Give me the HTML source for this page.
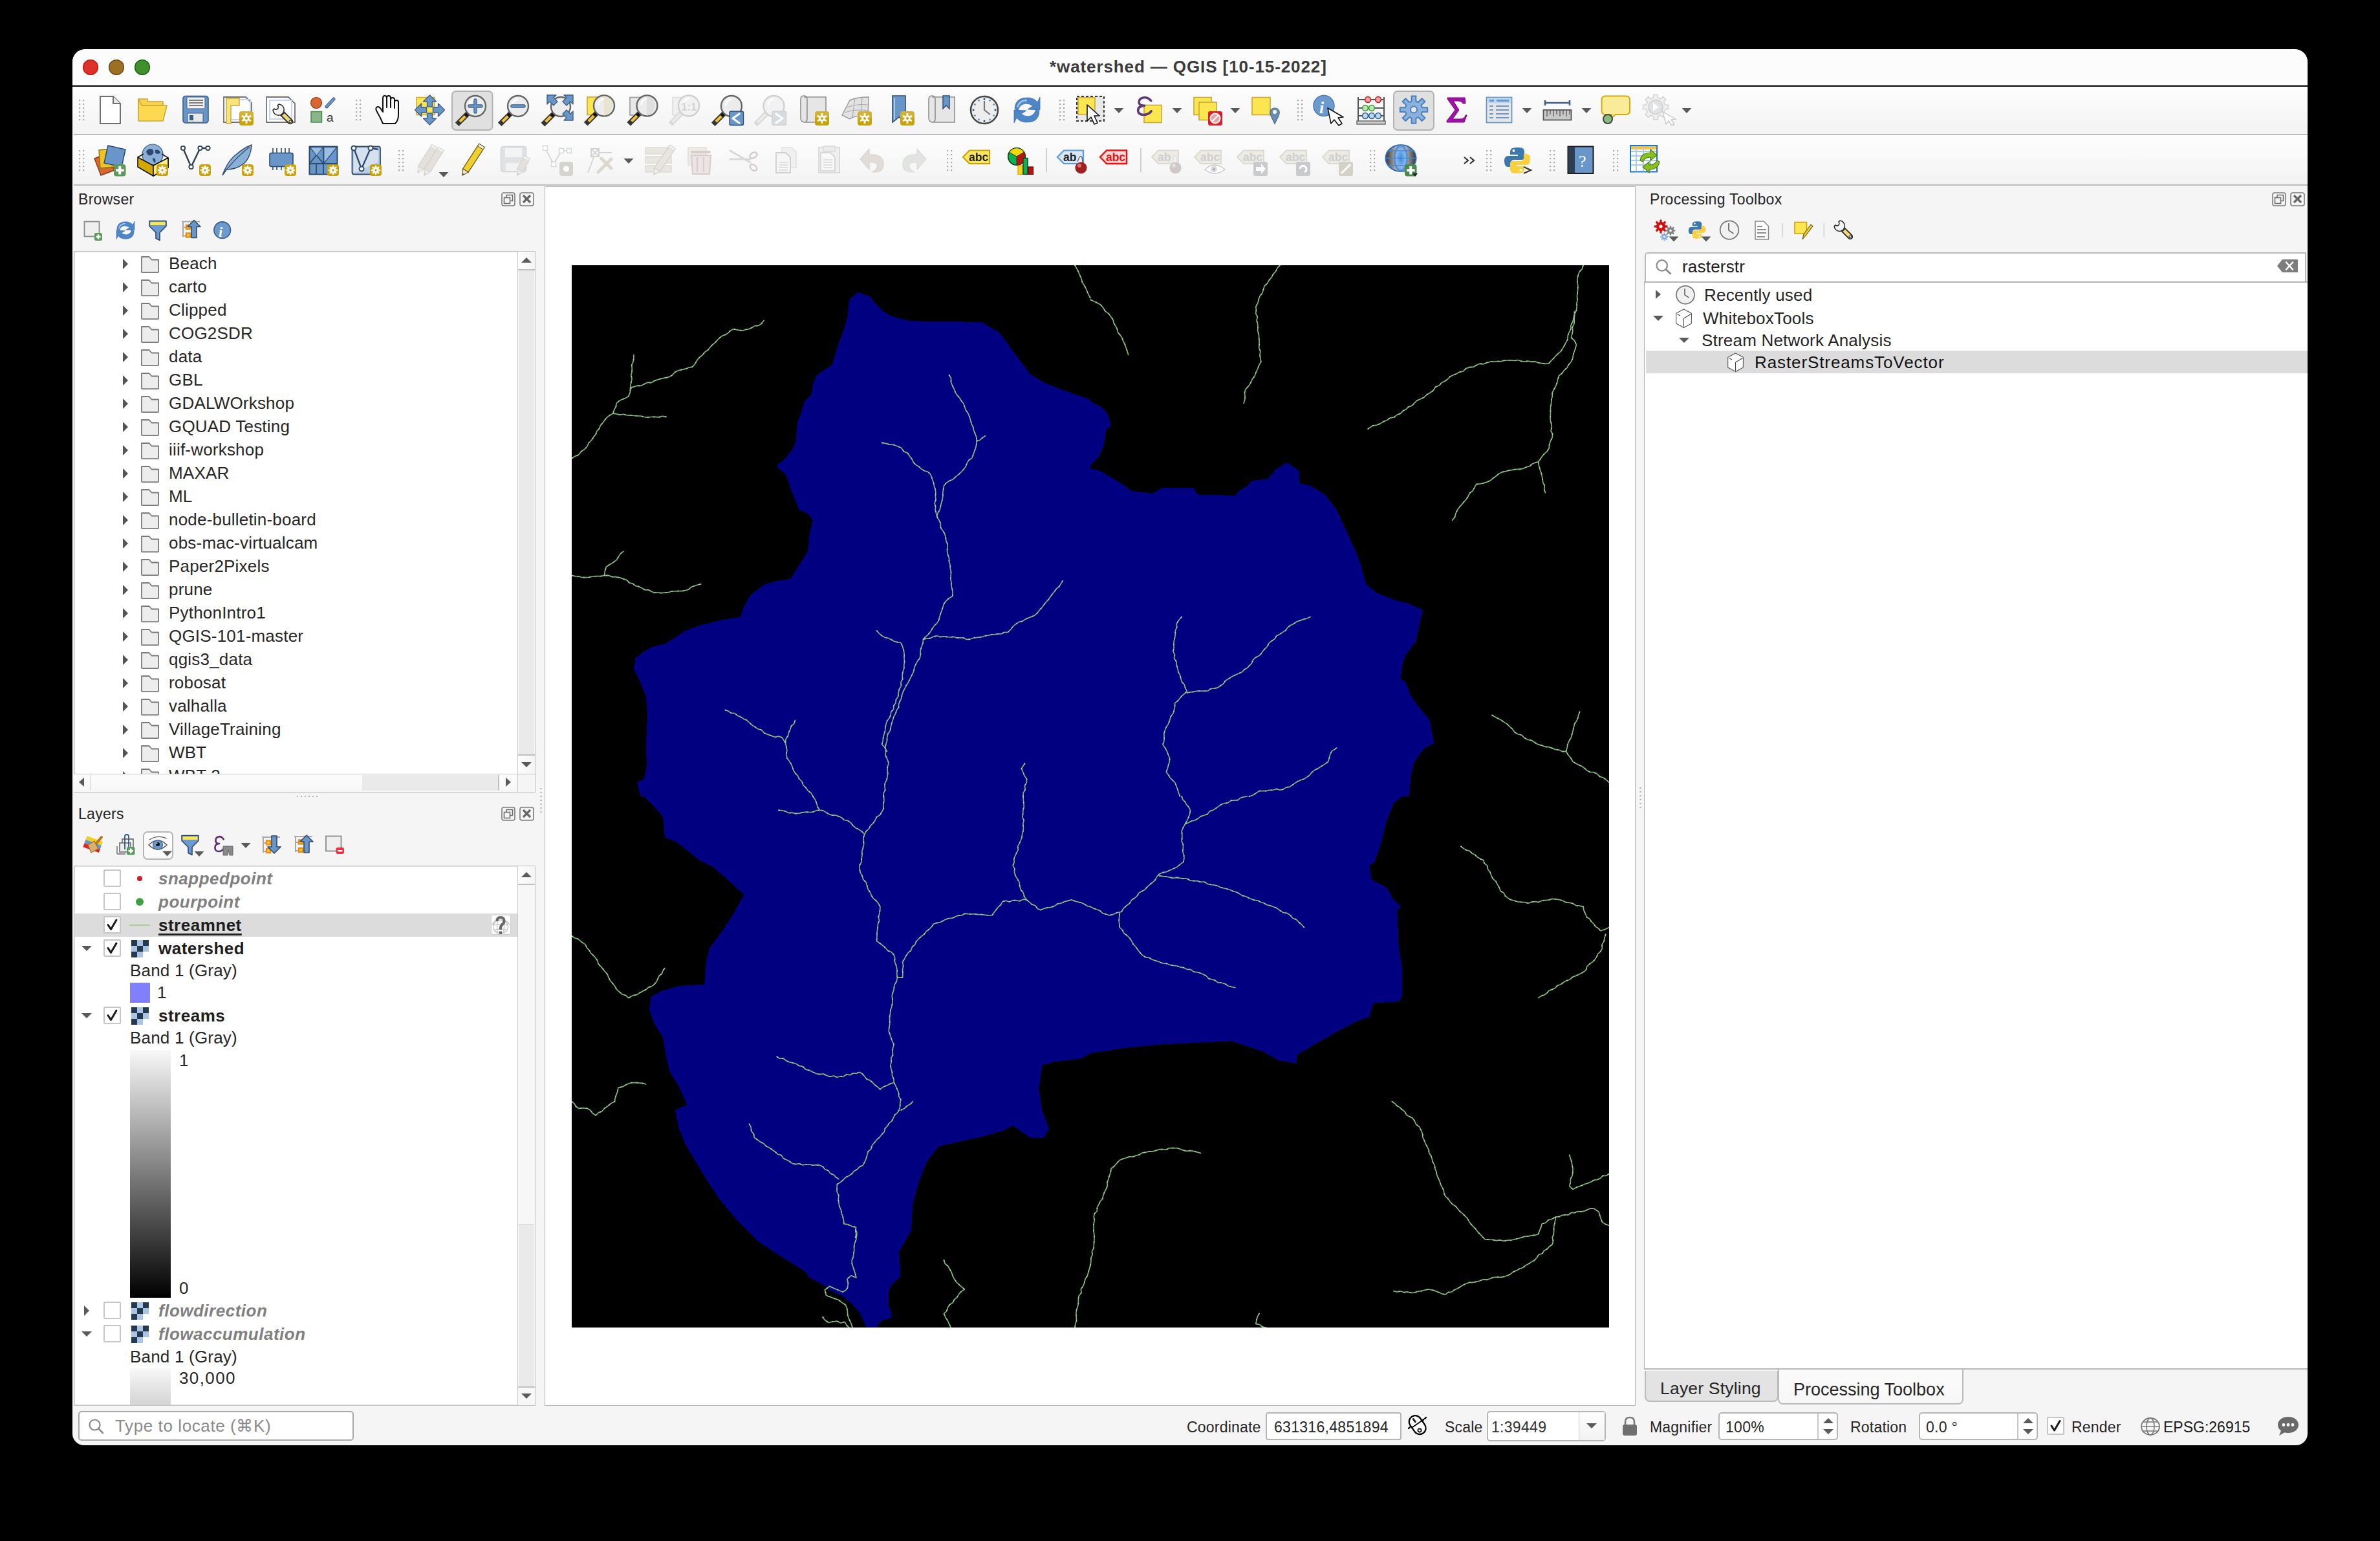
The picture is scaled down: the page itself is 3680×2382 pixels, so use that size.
<!DOCTYPE html>
<html><head><meta charset="utf-8"><title>QGIS</title>
<style>
html,body{margin:0;padding:0;background:#000;width:3680px;height:2382px;overflow:hidden;}
body{font-family:"Liberation Sans",sans-serif;color:#262626;}
.a{position:absolute;}
.t{position:absolute;white-space:pre;font-size:26px;line-height:36px;letter-spacing:0.2px;}
#win{position:absolute;left:112px;top:76px;width:3456px;height:2158px;border-radius:20px 20px 18px 18px;overflow:hidden;background:#f5f5f5;}
#pg{position:absolute;left:-112px;top:-76px;width:3680px;height:2382px;}
.tb{background:linear-gradient(#fdfdfd,#f3f3f3);}
.sep{background:#bdbdbd;}
.dots{position:absolute;width:8px;height:34px;background-image:radial-gradient(circle at 1px 1px,#a8a8a8 1px,transparent 1.2px);background-size:6px 6px;}
.frame{position:absolute;background:#fff;border:2px solid #b8b8b8;box-sizing:border-box;}
.arrR{position:absolute;width:0;height:0;border-top:8px solid transparent;border-bottom:8px solid transparent;border-left:10px solid #555;}
.arrD{position:absolute;width:0;height:0;border-left:8px solid transparent;border-right:8px solid transparent;border-top:10px solid #555;}
.fold{position:absolute;width:28px;height:22px;}
.cb{position:absolute;width:27px;height:27px;border:2px solid #c6c6c6;box-sizing:border-box;background:#fff;border-radius:2px;}
.dockbtn{position:absolute;width:22px;height:22px;border:2px solid #7a7a7a;border-radius:4px;box-sizing:border-box;}
svg{position:absolute;overflow:visible;}
</style>
</head><body>
<div id="win"><div id="pg">

<!-- title bar -->
<div class="a" style="left:112px;top:76px;width:3456px;height:56px;background:#fcfcfc;"></div>
<div class="a" style="left:112px;top:132px;width:3456px;height:2px;background:#000;"></div>
<div class="a" style="left:128px;top:92px;width:24px;height:24px;border-radius:50%;background:#de3127;box-shadow:inset 0 0 0 1.5px #b82219;"></div>
<div class="a" style="left:168px;top:92px;width:24px;height:24px;border-radius:50%;background:#9b7024;box-shadow:inset 0 0 0 1.5px #774d14;"></div>
<div class="a" style="left:208px;top:92px;width:24px;height:24px;border-radius:50%;background:#3f912b;box-shadow:inset 0 0 0 1.5px #23661a;"></div>
<div class="t" style="left:1623px;top:85px;font-size:26px;font-weight:bold;color:#3b3b3b;letter-spacing:0.9px;">*watershed — QGIS [10-15-2022]</div>
<!-- toolbar rows -->
<div class="a tb" style="left:112px;top:134px;width:3456px;height:73px;"></div>
<div class="a sep" style="left:114px;top:207px;width:3454px;height:2px;"></div>
<div class="a tb" style="left:112px;top:209px;width:3456px;height:76px;"></div>
<div class="a sep" style="left:114px;top:285px;width:3454px;height:2px;"></div>

<div class="t" style="left:121px;top:293px;font-size:23px;line-height:30px;letter-spacing:0.3px;">Browser</div>
<div class="a" style="left:114px;top:388px;width:714px;height:836px;background:#fff;box-shadow:inset 0 0 0 1.5px #c2c2c2;"></div>
<div class="a" style="left:115px;top:389px;width:685px;height:807px;overflow:hidden;"><div class="a" style="left:-115px;top:-389px;width:900px;height:1300px;">
<div class="arrR" style="left:190px;top:400px;border-left:8px solid #555;"></div>
<svg style="left:218px;top:396px" width="28" height="26" viewBox="0 0 28 26"><path d="M1,1 L12.5,1 L16.5,5.5 L27,5.5 L27,24.5 L26,25.2 L2,25.2 L1,24.5 Z" fill="#ededed" stroke="#787c78" stroke-width="1.8" stroke-linejoin="round"/></svg>
<div class="t" style="left:261px;top:389px;">Beach</div>
<div class="arrR" style="left:190px;top:436px;border-left:8px solid #555;"></div>
<svg style="left:218px;top:432px" width="28" height="26" viewBox="0 0 28 26"><path d="M1,1 L12.5,1 L16.5,5.5 L27,5.5 L27,24.5 L26,25.2 L2,25.2 L1,24.5 Z" fill="#ededed" stroke="#787c78" stroke-width="1.8" stroke-linejoin="round"/></svg>
<div class="t" style="left:261px;top:425px;">carto</div>
<div class="arrR" style="left:190px;top:472px;border-left:8px solid #555;"></div>
<svg style="left:218px;top:468px" width="28" height="26" viewBox="0 0 28 26"><path d="M1,1 L12.5,1 L16.5,5.5 L27,5.5 L27,24.5 L26,25.2 L2,25.2 L1,24.5 Z" fill="#ededed" stroke="#787c78" stroke-width="1.8" stroke-linejoin="round"/></svg>
<div class="t" style="left:261px;top:461px;">Clipped</div>
<div class="arrR" style="left:190px;top:508px;border-left:8px solid #555;"></div>
<svg style="left:218px;top:504px" width="28" height="26" viewBox="0 0 28 26"><path d="M1,1 L12.5,1 L16.5,5.5 L27,5.5 L27,24.5 L26,25.2 L2,25.2 L1,24.5 Z" fill="#ededed" stroke="#787c78" stroke-width="1.8" stroke-linejoin="round"/></svg>
<div class="t" style="left:261px;top:497px;">COG2SDR</div>
<div class="arrR" style="left:190px;top:544px;border-left:8px solid #555;"></div>
<svg style="left:218px;top:540px" width="28" height="26" viewBox="0 0 28 26"><path d="M1,1 L12.5,1 L16.5,5.5 L27,5.5 L27,24.5 L26,25.2 L2,25.2 L1,24.5 Z" fill="#ededed" stroke="#787c78" stroke-width="1.8" stroke-linejoin="round"/></svg>
<div class="t" style="left:261px;top:533px;">data</div>
<div class="arrR" style="left:190px;top:580px;border-left:8px solid #555;"></div>
<svg style="left:218px;top:576px" width="28" height="26" viewBox="0 0 28 26"><path d="M1,1 L12.5,1 L16.5,5.5 L27,5.5 L27,24.5 L26,25.2 L2,25.2 L1,24.5 Z" fill="#ededed" stroke="#787c78" stroke-width="1.8" stroke-linejoin="round"/></svg>
<div class="t" style="left:261px;top:569px;">GBL</div>
<div class="arrR" style="left:190px;top:616px;border-left:8px solid #555;"></div>
<svg style="left:218px;top:612px" width="28" height="26" viewBox="0 0 28 26"><path d="M1,1 L12.5,1 L16.5,5.5 L27,5.5 L27,24.5 L26,25.2 L2,25.2 L1,24.5 Z" fill="#ededed" stroke="#787c78" stroke-width="1.8" stroke-linejoin="round"/></svg>
<div class="t" style="left:261px;top:605px;">GDALWOrkshop</div>
<div class="arrR" style="left:190px;top:652px;border-left:8px solid #555;"></div>
<svg style="left:218px;top:648px" width="28" height="26" viewBox="0 0 28 26"><path d="M1,1 L12.5,1 L16.5,5.5 L27,5.5 L27,24.5 L26,25.2 L2,25.2 L1,24.5 Z" fill="#ededed" stroke="#787c78" stroke-width="1.8" stroke-linejoin="round"/></svg>
<div class="t" style="left:261px;top:641px;">GQUAD Testing</div>
<div class="arrR" style="left:190px;top:688px;border-left:8px solid #555;"></div>
<svg style="left:218px;top:684px" width="28" height="26" viewBox="0 0 28 26"><path d="M1,1 L12.5,1 L16.5,5.5 L27,5.5 L27,24.5 L26,25.2 L2,25.2 L1,24.5 Z" fill="#ededed" stroke="#787c78" stroke-width="1.8" stroke-linejoin="round"/></svg>
<div class="t" style="left:261px;top:677px;">iiif-workshop</div>
<div class="arrR" style="left:190px;top:724px;border-left:8px solid #555;"></div>
<svg style="left:218px;top:720px" width="28" height="26" viewBox="0 0 28 26"><path d="M1,1 L12.5,1 L16.5,5.5 L27,5.5 L27,24.5 L26,25.2 L2,25.2 L1,24.5 Z" fill="#ededed" stroke="#787c78" stroke-width="1.8" stroke-linejoin="round"/></svg>
<div class="t" style="left:261px;top:713px;">MAXAR</div>
<div class="arrR" style="left:190px;top:760px;border-left:8px solid #555;"></div>
<svg style="left:218px;top:756px" width="28" height="26" viewBox="0 0 28 26"><path d="M1,1 L12.5,1 L16.5,5.5 L27,5.5 L27,24.5 L26,25.2 L2,25.2 L1,24.5 Z" fill="#ededed" stroke="#787c78" stroke-width="1.8" stroke-linejoin="round"/></svg>
<div class="t" style="left:261px;top:749px;">ML</div>
<div class="arrR" style="left:190px;top:796px;border-left:8px solid #555;"></div>
<svg style="left:218px;top:792px" width="28" height="26" viewBox="0 0 28 26"><path d="M1,1 L12.5,1 L16.5,5.5 L27,5.5 L27,24.5 L26,25.2 L2,25.2 L1,24.5 Z" fill="#ededed" stroke="#787c78" stroke-width="1.8" stroke-linejoin="round"/></svg>
<div class="t" style="left:261px;top:785px;">node-bulletin-board</div>
<div class="arrR" style="left:190px;top:832px;border-left:8px solid #555;"></div>
<svg style="left:218px;top:828px" width="28" height="26" viewBox="0 0 28 26"><path d="M1,1 L12.5,1 L16.5,5.5 L27,5.5 L27,24.5 L26,25.2 L2,25.2 L1,24.5 Z" fill="#ededed" stroke="#787c78" stroke-width="1.8" stroke-linejoin="round"/></svg>
<div class="t" style="left:261px;top:821px;">obs-mac-virtualcam</div>
<div class="arrR" style="left:190px;top:868px;border-left:8px solid #555;"></div>
<svg style="left:218px;top:864px" width="28" height="26" viewBox="0 0 28 26"><path d="M1,1 L12.5,1 L16.5,5.5 L27,5.5 L27,24.5 L26,25.2 L2,25.2 L1,24.5 Z" fill="#ededed" stroke="#787c78" stroke-width="1.8" stroke-linejoin="round"/></svg>
<div class="t" style="left:261px;top:857px;">Paper2Pixels</div>
<div class="arrR" style="left:190px;top:904px;border-left:8px solid #555;"></div>
<svg style="left:218px;top:900px" width="28" height="26" viewBox="0 0 28 26"><path d="M1,1 L12.5,1 L16.5,5.5 L27,5.5 L27,24.5 L26,25.2 L2,25.2 L1,24.5 Z" fill="#ededed" stroke="#787c78" stroke-width="1.8" stroke-linejoin="round"/></svg>
<div class="t" style="left:261px;top:893px;">prune</div>
<div class="arrR" style="left:190px;top:940px;border-left:8px solid #555;"></div>
<svg style="left:218px;top:936px" width="28" height="26" viewBox="0 0 28 26"><path d="M1,1 L12.5,1 L16.5,5.5 L27,5.5 L27,24.5 L26,25.2 L2,25.2 L1,24.5 Z" fill="#ededed" stroke="#787c78" stroke-width="1.8" stroke-linejoin="round"/></svg>
<div class="t" style="left:261px;top:929px;">PythonIntro1</div>
<div class="arrR" style="left:190px;top:976px;border-left:8px solid #555;"></div>
<svg style="left:218px;top:972px" width="28" height="26" viewBox="0 0 28 26"><path d="M1,1 L12.5,1 L16.5,5.5 L27,5.5 L27,24.5 L26,25.2 L2,25.2 L1,24.5 Z" fill="#ededed" stroke="#787c78" stroke-width="1.8" stroke-linejoin="round"/></svg>
<div class="t" style="left:261px;top:965px;">QGIS-101-master</div>
<div class="arrR" style="left:190px;top:1012px;border-left:8px solid #555;"></div>
<svg style="left:218px;top:1008px" width="28" height="26" viewBox="0 0 28 26"><path d="M1,1 L12.5,1 L16.5,5.5 L27,5.5 L27,24.5 L26,25.2 L2,25.2 L1,24.5 Z" fill="#ededed" stroke="#787c78" stroke-width="1.8" stroke-linejoin="round"/></svg>
<div class="t" style="left:261px;top:1001px;">qgis3_data</div>
<div class="arrR" style="left:190px;top:1048px;border-left:8px solid #555;"></div>
<svg style="left:218px;top:1044px" width="28" height="26" viewBox="0 0 28 26"><path d="M1,1 L12.5,1 L16.5,5.5 L27,5.5 L27,24.5 L26,25.2 L2,25.2 L1,24.5 Z" fill="#ededed" stroke="#787c78" stroke-width="1.8" stroke-linejoin="round"/></svg>
<div class="t" style="left:261px;top:1037px;">robosat</div>
<div class="arrR" style="left:190px;top:1084px;border-left:8px solid #555;"></div>
<svg style="left:218px;top:1080px" width="28" height="26" viewBox="0 0 28 26"><path d="M1,1 L12.5,1 L16.5,5.5 L27,5.5 L27,24.5 L26,25.2 L2,25.2 L1,24.5 Z" fill="#ededed" stroke="#787c78" stroke-width="1.8" stroke-linejoin="round"/></svg>
<div class="t" style="left:261px;top:1073px;">valhalla</div>
<div class="arrR" style="left:190px;top:1120px;border-left:8px solid #555;"></div>
<svg style="left:218px;top:1116px" width="28" height="26" viewBox="0 0 28 26"><path d="M1,1 L12.5,1 L16.5,5.5 L27,5.5 L27,24.5 L26,25.2 L2,25.2 L1,24.5 Z" fill="#ededed" stroke="#787c78" stroke-width="1.8" stroke-linejoin="round"/></svg>
<div class="t" style="left:261px;top:1109px;">VillageTraining</div>
<div class="arrR" style="left:190px;top:1156px;border-left:8px solid #555;"></div>
<svg style="left:218px;top:1152px" width="28" height="26" viewBox="0 0 28 26"><path d="M1,1 L12.5,1 L16.5,5.5 L27,5.5 L27,24.5 L26,25.2 L2,25.2 L1,24.5 Z" fill="#ededed" stroke="#787c78" stroke-width="1.8" stroke-linejoin="round"/></svg>
<div class="t" style="left:261px;top:1145px;">WBT</div>
<div class="arrR" style="left:190px;top:1192px;border-left:8px solid #555;"></div>
<svg style="left:218px;top:1188px" width="28" height="26" viewBox="0 0 28 26"><path d="M1,1 L12.5,1 L16.5,5.5 L27,5.5 L27,24.5 L26,25.2 L2,25.2 L1,24.5 Z" fill="#ededed" stroke="#787c78" stroke-width="1.8" stroke-linejoin="round"/></svg>
<div class="t" style="left:261px;top:1181px;">WBT 2</div>
</div></div>
<div class="a" style="left:800px;top:389px;width:27px;height:807px;background:#f7f7f7;border-left:1px solid #c8c8c8;box-sizing:border-box;"></div>
<div class="a" style="left:801px;top:389px;width:26px;height:27px;background:linear-gradient(90deg,#fdfdfd,#f4f4f4);"></div>
<div class="a" style="left:806px;top:398px;width:0;height:0;border-left:8px solid transparent;border-right:8px solid transparent;border-bottom:8px solid #5a5a5a;"></div>
<div class="a" style="left:801px;top:416px;width:26px;height:2px;background:#c0c0c0;"></div>
<div class="a" style="left:802px;top:418px;width:24px;height:748px;background:#eaeaea;"></div>
<div class="a" style="left:801px;top:1166px;width:26px;height:2px;background:#c0c0c0;"></div>
<div class="a" style="left:801px;top:1168px;width:26px;height:28px;background:linear-gradient(90deg,#fdfdfd,#f4f4f4);"></div>
<div class="a" style="left:806px;top:1178px;width:0;height:0;border-left:8px solid transparent;border-right:8px solid transparent;border-top:8px solid #5a5a5a;"></div>
<div class="a" style="left:114px;top:1196px;width:686px;height:29px;background:linear-gradient(#fdfdfd,#f6f6f6);border-top:1.5px solid #c4c4c4;border-bottom:1.5px solid #b8b8b8;box-sizing:border-box;"></div>
<div class="a" style="left:140px;top:1198px;width:1px;height:24px;background:#c8c8c8;"></div>
<div class="arrR" style="left:782px;top:1202px;border-left:8px solid #5a5a5a;border-top:7.5px solid transparent;border-bottom:7.5px solid transparent;"></div>
<div class="a" style="left:122px;top:1202px;width:0;height:0;border-right:8px solid #5a5a5a;border-top:7.5px solid transparent;border-bottom:7.5px solid transparent;"></div>
<div class="a" style="left:560px;top:1198px;width:210px;height:24px;background:#eaeaea;"></div>
<div class="a" style="left:770px;top:1198px;width:2px;height:24px;background:#c0c0c0;"></div>
<div class="a" style="left:800px;top:1196px;width:28px;height:29px;background:#f5f5f5;border:1.5px solid #bdbdbd;border-left:1px solid #c8c8c8;box-sizing:border-box;"></div>
<div class="a" style="left:457px;top:1229px;width:36px;height:4px;background-image:radial-gradient(circle,#b0b0b0 1px,transparent 1.3px);background-size:6px 4px;"></div>
<div class="a" style="left:834px;top:1216px;width:5px;height:40px;background-image:radial-gradient(circle,#b0b0b0 1px,transparent 1.3px);background-size:5px 6px;"></div>
<div class="t" style="left:121px;top:1243px;font-size:23px;line-height:30px;letter-spacing:0.3px;">Layers</div>
<div class="a" style="left:221px;top:1285px;width:47px;height:44px;border-radius:7px;background:linear-gradient(#ffffff,#f8f8f8);box-shadow:inset 0 0 0 2px #b4b4b4;"></div>
<div class="a" style="left:114px;top:1338px;width:714px;height:835px;background:#fff;box-shadow:inset 0 0 0 1.5px #c2c2c2;"></div>
<div class="a" style="left:115px;top:1339px;width:685px;height:833px;overflow:hidden;"><div class="a" style="left:-115px;top:-1339px;width:900px;height:2400px;">
<div class="a" style="left:114px;top:1412px;width:686px;height:36px;background:#dcdcdc;"></div>
<div class="cb" style="left:160px;top:1344px;"></div>
<div class="a" style="left:212px;top:1354px;width:8px;height:8px;border-radius:50%;background:#c8202a;"></div>
<div class="t" style="left:245px;top:1340px;font-weight:bold;font-style:italic;color:#7f7f7f;letter-spacing:0.5px;">snappedpoint</div>
<div class="cb" style="left:160px;top:1380px;"></div>
<div class="a" style="left:210px;top:1388px;width:12px;height:12px;border-radius:50%;background:#3ea03e;"></div>
<div class="t" style="left:245px;top:1376px;font-weight:bold;font-style:italic;color:#7f7f7f;letter-spacing:0.5px;">pourpoint</div>
<div class="cb" style="left:160px;top:1416px;"></div>
<svg style="left:160px;top:1416px" width="27" height="27" viewBox="0 0 27 27"><path d="M7,13.5 L11.5,20.5 L20,6" fill="none" stroke="#1a1a1a" stroke-width="3" stroke-linecap="round" stroke-linejoin="round"/></svg>
<div class="a" style="left:200px;top:1429px;width:32px;height:2px;background:#a8d098;"></div>
<div class="t" style="left:245px;top:1412px;font-weight:bold;text-decoration:underline;text-decoration-thickness:2.5px;text-underline-offset:4px;color:#1e1e1e;letter-spacing:0.5px;">streamnet</div>
<div class="arrD" style="left:126px;top:1462px;border-left-width:8px;border-right-width:8px;border-top:8px solid #5a5a5a;"></div>
<div class="cb" style="left:160px;top:1452px;"></div>
<svg style="left:160px;top:1452px" width="27" height="27" viewBox="0 0 27 27"><path d="M7,13.5 L11.5,20.5 L20,6" fill="none" stroke="#1a1a1a" stroke-width="3" stroke-linecap="round" stroke-linejoin="round"/></svg>
<svg style="left:203px;top:1453px" width="27" height="27" viewBox="0 0 27 27"><rect x="0" y="0" width="27" height="27" fill="#fff"/><rect x="0" y="0" width="9" height="9" fill="#243850"/><rect x="18" y="0" width="9" height="9" fill="#243850"/><rect x="9" y="9" width="9" height="9" fill="#243850"/><rect x="0" y="18" width="9" height="9" fill="#243850"/><rect x="9" y="0" width="9" height="9" fill="#a9c4e4"/><rect x="0" y="9" width="9" height="9" fill="#a9c4e4"/><rect x="18" y="9" width="9" height="9" fill="#a9c4e4"/><rect x="9" y="18" width="9" height="9" fill="#a9c4e4"/><rect x="18" y="18" width="9" height="9" fill="#fff"/></svg>
<div class="t" style="left:245px;top:1448px;font-weight:bold;color:#1e1e1e;letter-spacing:0.5px;">watershed</div>
<div class="arrD" style="left:126px;top:1566px;border-left-width:8px;border-right-width:8px;border-top:8px solid #5a5a5a;"></div>
<div class="cb" style="left:160px;top:1556px;"></div>
<svg style="left:160px;top:1556px" width="27" height="27" viewBox="0 0 27 27"><path d="M7,13.5 L11.5,20.5 L20,6" fill="none" stroke="#1a1a1a" stroke-width="3" stroke-linecap="round" stroke-linejoin="round"/></svg>
<svg style="left:203px;top:1557px" width="27" height="27" viewBox="0 0 27 27"><rect x="0" y="0" width="27" height="27" fill="#fff"/><rect x="0" y="0" width="9" height="9" fill="#243850"/><rect x="18" y="0" width="9" height="9" fill="#243850"/><rect x="9" y="9" width="9" height="9" fill="#243850"/><rect x="0" y="18" width="9" height="9" fill="#243850"/><rect x="9" y="0" width="9" height="9" fill="#a9c4e4"/><rect x="0" y="9" width="9" height="9" fill="#a9c4e4"/><rect x="18" y="9" width="9" height="9" fill="#a9c4e4"/><rect x="9" y="18" width="9" height="9" fill="#a9c4e4"/><rect x="18" y="18" width="9" height="9" fill="#fff"/></svg>
<div class="t" style="left:245px;top:1552px;font-weight:bold;color:#1e1e1e;letter-spacing:0.5px;">streams</div>
<div class="arrR" style="left:130px;top:2018px;border-left:8px solid #5a5a5a;"></div>
<div class="cb" style="left:160px;top:2012px;"></div>
<svg style="left:203px;top:2013px" width="27" height="27" viewBox="0 0 27 27"><rect x="0" y="0" width="27" height="27" fill="#fff"/><rect x="0" y="0" width="9" height="9" fill="#243850"/><rect x="18" y="0" width="9" height="9" fill="#243850"/><rect x="9" y="9" width="9" height="9" fill="#243850"/><rect x="0" y="18" width="9" height="9" fill="#243850"/><rect x="9" y="0" width="9" height="9" fill="#a9c4e4"/><rect x="0" y="9" width="9" height="9" fill="#a9c4e4"/><rect x="18" y="9" width="9" height="9" fill="#a9c4e4"/><rect x="9" y="18" width="9" height="9" fill="#a9c4e4"/><rect x="18" y="18" width="9" height="9" fill="#fff"/></svg>
<div class="t" style="left:245px;top:2008px;font-weight:bold;font-style:italic;color:#7f7f7f;letter-spacing:0.5px;">flowdirection</div>
<div class="arrD" style="left:126px;top:2058px;border-left-width:8px;border-right-width:8px;border-top:8px solid #5a5a5a;"></div>
<div class="cb" style="left:160px;top:2048px;"></div>
<svg style="left:203px;top:2049px" width="27" height="27" viewBox="0 0 27 27"><rect x="0" y="0" width="27" height="27" fill="#fff"/><rect x="0" y="0" width="9" height="9" fill="#243850"/><rect x="18" y="0" width="9" height="9" fill="#243850"/><rect x="9" y="9" width="9" height="9" fill="#243850"/><rect x="0" y="18" width="9" height="9" fill="#243850"/><rect x="9" y="0" width="9" height="9" fill="#a9c4e4"/><rect x="0" y="9" width="9" height="9" fill="#a9c4e4"/><rect x="18" y="9" width="9" height="9" fill="#a9c4e4"/><rect x="9" y="18" width="9" height="9" fill="#a9c4e4"/><rect x="18" y="18" width="9" height="9" fill="#fff"/></svg>
<div class="t" style="left:245px;top:2044px;font-weight:bold;font-style:italic;color:#7f7f7f;letter-spacing:0.5px;">flowaccumulation</div>
<div class="a" style="left:759px;top:1414px;width:31px;height:31px;background:#fff;border-radius:3px;box-shadow:inset 0 0 0 1px #d0d0d0;"></div>
<svg style="left:759px;top:1414px" width="31" height="31" viewBox="0 0 31 31"><path d="M2,15.5 L7,9 M29,15.5 L24,9" stroke="#c8c8c8" stroke-width="1.5"/><ellipse cx="15" cy="18.5" rx="11.5" ry="10.5" fill="none" stroke="#c8c8c8" stroke-width="1.5"/><path d="M4,16 Q15,13 26,16 M6,23.5 Q15,21 24,23.5 M11,9 Q8,19 11,28.5 M19,9 Q22,19 19,28.5" fill="none" stroke="#c8c8c8" stroke-width="1.4"/><path d="M9.5,10 Q9.5,4 15,4 Q20.5,4 20.5,9.5 Q20.5,13 17,15.5 Q15,17.5 15,20.5 L15,23" fill="none" stroke="#686868" stroke-width="4.2"/><path d="M15,25.5 L15,30" stroke="#686868" stroke-width="4.2"/></svg>
<div class="t" style="left:201px;top:1482px;">Band 1 (Gray)</div>
<div class="a" style="left:201px;top:1519px;width:31px;height:31px;background:#8080ff;"></div>
<div class="t" style="left:243px;top:1516px;">1</div>
<div class="t" style="left:201px;top:1586px;">Band 1 (Gray)</div>
<div class="a" style="left:201px;top:1623px;width:63px;height:383px;background:linear-gradient(#f8f8f8,#000);"></div>
<div class="t" style="left:277px;top:1621px;">1</div>
<div class="t" style="left:277px;top:1973px;">0</div>
<div class="t" style="left:201px;top:2079px;">Band 1 (Gray)</div>
<div class="a" style="left:201px;top:2115px;width:63px;height:383px;background:linear-gradient(#f8f8f8,#000);"></div>
<div class="t" style="left:277px;top:2112px;letter-spacing:1.4px;">30,000</div>
</div></div>
<div class="a" style="left:800px;top:1339px;width:27px;height:833px;background:#f7f7f7;border-left:1px solid #c8c8c8;box-sizing:border-box;"></div>
<div class="a" style="left:801px;top:1339px;width:26px;height:27px;background:linear-gradient(90deg,#fdfdfd,#f4f4f4);"></div>
<div class="a" style="left:806px;top:1348px;width:0;height:0;border-left:8px solid transparent;border-right:8px solid transparent;border-bottom:8px solid #5a5a5a;"></div>
<div class="a" style="left:801px;top:1366px;width:26px;height:2px;background:#c0c0c0;"></div>
<div class="a" style="left:802px;top:1892px;width:24px;height:251px;background:#eaeaea;border-top:1px solid #d8d8d8;"></div>
<div class="a" style="left:801px;top:2143px;width:26px;height:2px;background:#c0c0c0;"></div>
<div class="a" style="left:806px;top:2154px;width:0;height:0;border-left:8px solid transparent;border-right:8px solid transparent;border-top:8px solid #5a5a5a;"></div>
<div class="a" style="left:121px;top:2181px;width:426px;height:46px;background:#fff;border:2px solid #a9a9a9;border-radius:5px;box-sizing:border-box;"></div>
<svg style="left:136px;top:2192px" width="26" height="26" viewBox="0 0 26 26"><circle cx="10.5" cy="10.5" r="8" fill="none" stroke="#888" stroke-width="2.2"/><path d="M16.5,16.5 L23,23" stroke="#888" stroke-width="2.6" stroke-linecap="round"/></svg>
<div class="t" style="left:178px;top:2186px;color:#8a8a8a;letter-spacing:0.6px;">Type to locate (⌘K)</div>
<!-- map canvas -->
<div class="frame" style="left:842px;top:288px;width:1687px;height:1885px;border-width:1.5px;border-color:#b4b4b4;"></div>
<svg style="left:884px;top:410px;overflow:hidden;" width="1604" height="1642" viewBox="0 0 1604 1642">
<rect x="0" y="0" width="1604" height="1642" fill="#000"/>
<path d="M429.0,53.3 L442.3,41.6 L460.9,48.0 L468.9,58.6 L482.3,71.9 L498.2,79.9 L524.9,86.3 L634.1,87.9 L660.8,103.9 L676.8,125.2 L692.7,146.5 L708.7,167.9 L730.0,181.2 L756.7,191.8 L802.0,207.8 L802.0,210.5 L818.0,218.5 L828.6,229.1 L834.0,247.8 L826.0,255.8 L823.3,277.1 L815.3,295.7 L802.0,309.1 L802.0,314.4 L815.3,317.1 L834.0,327.7 L855.3,341.0 L865.9,349.0 L897.9,352.8 L913.9,343.7 L961.9,343.7 L967.2,354.4 L1025.8,356.0 L1031.1,349.0 L1044.5,341.0 L1052.5,333.0 L1076.4,330.4 L1089.8,314.4 L1105.7,304.8 L1124.4,317.1 L1125.5,336.8 L1143.0,341.0 L1164.4,354.4 L1183.0,378.3 L1196.3,407.7 L1212.3,442.3 L1220.3,463.6 L1228.3,492.9 L1244.3,506.2 L1270.9,516.9 L1292.2,522.2 L1316.2,532.9 L1310.9,554.2 L1305.6,580.8 L1289.6,602.2 L1284.3,618.1 L1281.6,639.5 L1289.6,644.8 L1297.6,666.1 L1313.6,687.4 L1326.9,703.4 L1332.2,735.4 L1334.9,738.0 L1318.9,746.0 L1302.9,767.3 L1297.6,788.7 L1294.9,821.2 L1284.3,821.0 L1270.9,831.7 L1260.3,858.3 L1252.3,890.3 L1241.6,922.2 L1233.6,927.6 L1236.3,948.9 L1260.3,962.2 L1270.9,980.9 L1281.6,991.5 L1276.3,996.8 L1278.9,1055.5 L1284.3,1087.4 L1284.3,1130.1 L1278.9,1138.1 L1239.0,1140.7 L1233.6,1162.0 L1217.6,1167.4 L1185.7,1183.4 L1148.4,1204.7 L1121.7,1220.7 L1120.7,1234.0 L1092.4,1228.7 L1068.4,1215.3 L1020.5,1199.3 L961.9,1202.0 L908.6,1204.7 L855.3,1210.0 L802.0,1218.0 L788.7,1226.0 L746.0,1231.3 L727.4,1236.6 L722.1,1273.9 L727.4,1305.9 L738.0,1335.2 L730.0,1348.5 L708.7,1348.5 L682.1,1329.9 L666.1,1337.9 L639.5,1345.9 L602.2,1353.9 L567.5,1361.9 L548.9,1385.9 L538.2,1412.5 L527.5,1449.8 L524.9,1492.4 L506.2,1524.4 L507.7,1546.2 L507.7,1563.9 L493.9,1576.0 L490.0,1588.0 L490.6,1611.3 L493.9,1615.7 L493.9,1627.8 L480.7,1630.0 L469.6,1643.0 L455.9,1643.0 L445.4,1619.0 L432.0,1604.7 L419.0,1593.6 L398.0,1584.3 L392.5,1578.2 L366.0,1563.9 L362.4,1556.4 L319.7,1529.7 L287.8,1508.4 L255.8,1476.4 L229.1,1444.5 L207.8,1412.5 L191.8,1385.9 L175.8,1359.2 L165.2,1332.6 L159.9,1305.9 L178.5,1297.9 L165.2,1268.6 L151.9,1247.3 L146.5,1226.0 L141.2,1194.0 L127.9,1172.7 L119.9,1151.4 L122.6,1130.1 L138.5,1122.1 L165.2,1114.1 L205.2,1111.4 L207.8,1076.8 L213.2,1055.5 L229.1,1034.2 L250.5,1002.2 L266.4,972.9 L234.5,943.6 L218.5,930.2 L197.2,919.6 L181.2,906.3 L159.9,890.3 L143.9,884.9 L141.2,853.0 L127.9,837.0 L111.9,821.0 L106.6,821.2 L101.2,799.3 L111.9,794.0 L116.2,772.7 L114.6,746.0 L117.2,692.7 L114.6,666.1 L103.9,639.5 L95.9,623.5 L98.6,607.5 L111.9,596.8 L127.9,588.8 L143.9,585.1 L159.9,575.5 L175.8,564.9 L197.2,556.9 L229.1,548.9 L261.1,543.5 L266.4,527.5 L277.1,508.9 L298.4,492.9 L319.7,487.6 L338.4,484.9 L351.7,463.6 L365.0,442.3 L367.7,415.6 L373.0,394.3 L365.0,383.7 L351.7,378.3 L341.0,351.7 L330.4,322.4 L319.7,314.4 L317.1,309.1 L330.4,298.4 L341.0,285.1 L346.4,271.8 L349.0,242.5 L354.4,229.1 L359.7,210.5 L370.4,199.8 L373.0,183.8 L378.3,170.5 L389.0,162.5 L402.3,154.5 L413.0,119.9 L421.0,98.6 L426.3,79.9Z" fill="#000080" shape-rendering="crispEdges"/>
<g fill="none" stroke="#7cb86a" stroke-width="1.7" stroke-linejoin="round" stroke-linecap="round">
<polyline points="0.0,298.4 5.1,295.3 10.7,293.1 14.5,288.0 19.8,284.5 24.0,279.8 26.4,274.5 30.7,270.5 33.7,265.6 37.3,261.1 39.0,256.2 42.6,252.6 44.3,247.7 47.8,244.0 50.6,239.8 54.4,235.4 58.8,231.9 63.9,229.1 65.5,223.7 68.3,218.7 69.3,213.2 73.5,209.6 78.2,207.2 83.4,205.4 87.9,202.5 90.4,196.1 90.6,189.2 96.0,188.0 101.2,186.2 106.9,186.4 111.9,183.8 116.9,181.2 122.8,181.7 127.7,178.7 133.0,176.9 138.3,175.3 143.7,174.2 149.2,173.2 155.0,170.3 159.4,165.4 165.2,162.5 170.6,161.4 175.9,160.2 181.1,158.2 186.5,157.2 190.6,152.6 193.6,147.1 197.6,142.5 202.5,138.5 205.8,134.2 210.4,131.3 213.8,127.0 217.4,123.0 221.7,119.7 225.2,115.6 229.1,111.9 233.1,108.8 238.1,107.2 242.2,104.4 245.8,100.7 250.5,98.6 257.1,100.1 263.8,101.2 268.7,99.5 273.9,98.6 278.6,96.5 283.1,93.6 288.6,93.5 293.1,90.6 297.3,85.3"/>
<polyline points="91.7,190.8 90.9,185.6 92.0,180.5 93.1,175.4 91.8,170.1 93.0,165.0 93.3,159.9 92.7,154.4 95.0,149.3 95.9,144.0 95.9,138.5"/>
<polyline points="63.9,229.1 69.3,229.9 74.5,231.2 80.0,230.3 85.2,231.8 90.6,231.8 95.9,232.5 101.2,232.9 106.6,233.0 111.8,234.5 117.1,235.2 122.6,234.5 128.6,234.4 134.6,234.9 140.5,233.3 146.5,234.5"/>
<polyline points="0.0,479.6 5.3,480.6 10.6,481.0 15.9,482.5 21.2,482.6 26.6,482.3 32.6,481.0 38.6,480.6 44.7,480.7 50.6,479.6 56.7,479.4 62.4,481.6 68.4,481.9 74.2,482.9 79.9,484.9 85.2,486.6 88.9,490.9 94.4,492.1 98.6,495.6 103.7,496.7 108.4,498.9 112.9,501.8 118.5,501.7 123.1,504.3 127.9,506.2 133.2,506.0 138.6,506.6 143.9,506.1 149.3,505.8 154.5,504.0 159.8,504.0 165.2,503.5 170.5,503.6 175.7,502.7 180.7,501.1 184.9,497.4 189.8,495.7 194.7,494.0 199.8,492.9"/>
<polyline points="50.6,479.6 51.3,472.8 53.3,466.3 58.6,462.7 64.1,459.4 69.3,455.6 72.3,450.8 75.4,445.9 79.9,442.3"/>
<polyline points="778.0,0.0 780.9,5.2 783.6,10.5 786.0,16.0 788.1,21.0 789.5,26.4 792.4,31.0 795.1,35.8 797.1,40.9 799.3,45.9 802.0,50.6"/>
<polyline points="583.5,169.5 586.6,174.7 586.5,181.0 588.8,186.5 591.5,191.8 593.3,196.8 596.2,201.1 599.7,205.0 602.4,209.5 605.7,213.5 607.5,218.5 609.3,223.9 612.8,228.7 614.9,234.0 616.7,239.5 618.1,245.1 620.6,250.2 621.7,255.7 624.0,260.8 625.8,266.1 626.1,271.8 625.7,277.3 624.5,282.7 622.5,287.8 620.8,293.1 618.7,298.2 613.8,301.4 611.2,306.2 609.1,311.4 605.8,315.7 602.2,319.7 598.0,323.6 593.5,327.1 589.4,331.2 583.8,333.2 579.1,336.5 575.5,341.0 574.7,346.4 573.8,351.7 573.9,357.2 573.0,362.5 571.5,367.8 570.2,373.0 569.0,378.5 565.8,383.4 564.9,389.0 567.9,394.0 570.4,399.2 570.4,405.4 573.7,410.3 576.8,415.3 578.2,421.0 579.0,426.3 581.2,431.4 580.8,437.0 580.5,442.5 581.7,447.8 583.5,452.9 583.5,458.3 585.2,463.5 585.4,468.9 586.5,474.2 586.2,479.6 585.9,485.0 587.0,490.3 586.8,495.6 588.4,500.9 589.1,506.2 588.8,511.6 583.0,514.9 578.2,519.6 575.2,524.0 573.8,529.0 572.1,533.9 570.3,538.8 568.7,543.8 567.5,548.9 564.6,553.5 560.6,557.2 557.5,561.7 554.8,566.4 551.3,570.6 547.4,574.3 543.5,578.2 543.1,584.1 540.9,589.8 539.2,595.5 539.4,601.6 538.2,607.5 534.8,611.7 532.3,616.4 530.0,621.2 529.0,626.6 527.0,631.5 524.6,636.2 522.3,641.0 519.9,645.7 516.9,650.1 514.8,654.7 512.4,659.2 510.7,664.0 509.8,669.1 507.6,673.7 505.5,678.3 505.5,683.6 502.3,687.9 500.9,692.7 498.0,697.7 496.4,703.2 494.6,708.5 493.3,714.1 492.2,719.7 488.8,724.5 487.6,730.0 487.5,735.4 485.7,740.6 484.8,745.9 485.7,751.4 484.9,756.7 487.8,763.3 490.2,770.0 488.3,774.9 488.1,780.2 488.7,785.5 488.0,790.6 487.1,795.7 484.4,800.5 483.9,805.7 484.8,811.1 482.2,815.9 482.3,821.2"/>
<polyline points="626.1,271.8 631.2,270.2 635.2,266.8 639.5,263.8"/>
<polyline points="479.6,274.4 485.7,275.4 491.6,277.2 497.8,277.5 503.6,279.8 509.6,282.3 513.5,287.9 519.6,290.4 522.6,295.3 526.2,299.8 528.6,305.1 532.9,309.1 537.2,311.6 540.9,315.2 545.2,317.8 550.3,319.1 554.2,322.4 556.4,327.0 557.9,331.8 559.6,336.6 560.4,341.6 562.2,346.4 562.8,351.7 562.4,357.0 563.1,362.4 561.1,367.7 562.6,373.0 562.2,378.3 563.6,383.6 564.9,389.0"/>
<polyline points="543.5,578.2 548.9,577.1 554.4,576.5 559.5,574.0 564.9,572.8 569.8,574.5 575.0,573.9 580.0,574.5 585.1,575.0 590.3,574.3 595.2,575.9 600.4,575.8 605.5,575.8 610.3,578.4 615.5,578.2 621.3,576.0 627.4,575.4 633.6,574.7 639.5,572.8 644.4,572.2 649.3,570.9 654.3,570.6 659.3,569.9 664.3,569.8 669.0,567.3 674.1,567.5 678.6,563.2 682.5,558.2 687.4,554.2 691.7,551.4 696.9,550.3 701.1,547.4 705.8,545.2 710.6,543.4 715.3,541.5 719.4,538.2 722.8,533.7 726.7,529.5 730.1,524.9 733.6,520.5 737.5,516.3 740.7,511.6 743.7,507.5 747.0,503.6 750.0,499.5 754.0,496.3 756.7,491.9 759.4,487.6"/>
<polyline points="471.6,564.9 475.4,569.2 479.8,572.9 484.9,575.5 489.9,576.5 494.5,578.9 498.9,581.4 503.8,582.7 508.9,583.5 511.6,589.5 513.4,595.7 514.2,602.2 514.0,607.5 514.6,612.9 513.8,618.2 513.8,623.5 511.9,628.8 511.2,634.1 511.6,639.5 509.0,644.5 509.4,650.4 506.5,655.3 505.1,660.7 504.8,666.4 501.5,671.2 500.9,676.8 497.8,680.9 497.6,686.4 493.8,690.3 493.2,695.5 490.9,700.1 487.7,704.2 486.1,709.1 484.9,714.1 484.7,719.6 483.0,724.7 481.7,730.0 481.1,735.5 479.6,740.7 484.2,745.6 487.6,751.4"/>
<polyline points="237.1,687.4 242.1,689.1 246.5,692.2 252.0,692.7 256.3,696.1 261.1,698.1 265.6,701.1 270.7,703.3 274.7,707.0 278.7,710.8 283.3,713.6 287.8,716.7 293.6,718.4 297.8,723.2 303.4,725.4 309.1,727.4 314.2,729.5 319.9,728.1 325.1,730.0 330.4,738.0 331.7,744.0 332.9,749.9 331.7,756.1 333.0,762.0 336.2,766.3 339.2,770.7 341.2,775.6 342.8,780.8 345.7,785.3 349.6,789.1 351.7,794.0 356.0,798.0 357.9,803.7 362.2,807.7 365.5,812.4 370.3,816.0 373.0,821.2"/>
<polyline points="330.4,738.0 331.1,732.3 334.4,727.5 335.7,722.1 337.9,717.3 339.5,712.2 343.9,708.6 345.3,703.4"/>
<polyline points="700.7,770.0 695.4,778.0 697.8,783.5 700.0,789.0 703.4,794.0 703.4,799.6 700.4,804.7 701.3,810.5 698.2,815.5 698.1,821.2"/>
<polyline points="802.0,53.3 807.4,55.8 812.8,58.2 818.0,61.3 821.9,66.0 825.1,71.3 830.4,74.9 834.0,79.9 837.0,84.3 838.2,89.6 841.0,94.0 843.4,98.7 844.6,103.9 848.0,107.9 851.0,112.2 852.6,117.2 855.3,122.3 857.1,127.7 859.1,133.0 860.6,138.5"/>
<polyline points="1095.1,0.0 1091.1,4.2 1088.7,9.5 1084.8,13.7 1082.1,18.8 1078.3,23.1 1075.5,28.2 1071.1,32.0 1069.5,37.6 1067.8,43.1 1063.9,47.7 1062.1,53.2 1060.7,58.9 1057.8,63.9 1058.4,69.3 1057.7,74.7 1060.4,79.8 1059.1,85.3 1060.6,90.6 1061.0,95.9 1060.6,101.3 1062.3,106.5 1062.6,111.9 1063.1,117.2 1063.1,122.6 1062.7,128.0 1064.9,133.2 1064.0,138.6 1064.8,143.9 1065.8,149.2 1062.8,154.4 1060.7,160.0 1058.1,165.4 1056.2,171.0 1052.5,175.8 1049.7,181.7 1046.3,187.1 1041.8,191.8 1040.5,197.1 1041.1,202.6 1040.7,207.9 1039.1,213.2"/>
<polyline points="1564.0,0.0 1562.3,5.8 1557.9,10.3 1556.0,16.0 1554.8,21.3 1555.0,26.6 1555.8,32.0 1555.6,37.3 1555.2,42.7 1554.5,48.0 1555.0,53.3 1554.0,58.6 1554.2,64.0 1553.4,69.3 1551.2,74.4 1550.2,79.7 1550.2,85.2 1550.0,90.7 1547.2,95.7 1547.9,101.3 1546.7,106.6 1545.4,111.9 1550.4,116.5 1553.4,122.6 1552.1,128.0 1550.2,133.2 1548.6,138.5 1547.7,144.1 1545.4,149.2 1541.6,153.5 1538.9,158.6 1534.6,162.4 1531.2,167.0 1526.7,170.5 1524.8,175.9 1523.6,181.6 1521.5,187.0 1518.7,192.0 1516.1,197.2 1516.3,202.6 1514.9,207.8 1514.6,213.1 1513.6,218.4 1513.4,223.8 1513.4,229.1 1513.2,234.5 1513.2,239.9 1514.8,245.1 1515.4,250.4 1514.0,255.9 1516.6,261.0 1516.1,266.4 1513.5,271.6 1511.7,277.0 1511.2,282.8 1508.1,287.8 1504.1,291.2 1500.6,295.1 1497.8,299.5 1494.7,303.7 1489.7,305.3 1484.8,307.3 1480.7,311.0 1475.5,312.2 1470.8,314.4 1465.4,315.3 1460.0,315.3 1454.6,316.3 1449.3,317.1 1444.1,318.6 1438.8,319.7 1433.5,322.2 1429.2,326.0 1424.5,329.3 1420.1,333.0 1415.0,335.1 1409.8,336.9 1404.4,338.0 1398.8,338.4 1395.9,343.4 1393.3,348.5 1388.5,352.3 1385.9,357.5 1382.8,362.4 1379.3,366.1 1375.9,370.1 1372.5,374.0 1369.5,378.3 1366.9,383.7 1365.3,389.6 1361.5,394.3"/>
<polyline points="1494.7,303.7 1495.3,309.3 1496.8,314.6 1498.7,319.7 1500.1,325.1 1501.0,330.4 1501.8,335.8 1504.4,340.8 1503.7,346.5 1505.4,351.7"/>
<polyline points="1550.7,71.9 1550.0,77.4 1549.1,82.9 1547.3,88.1 1544.8,93.1 1544.8,98.8 1542.1,103.8 1540.2,108.9 1540.0,114.6 1537.4,119.2 1535.0,124.0 1532.1,128.6 1529.4,133.2 1525.3,136.6 1521.4,140.2 1518.0,144.2 1514.2,147.9 1510.7,151.9 1505.3,152.4 1500.0,151.6 1494.7,150.7 1489.5,148.9 1484.0,149.4 1478.8,148.1 1473.3,149.0 1468.0,148.3 1462.8,146.5 1457.5,147.5 1452.1,146.8 1446.8,147.0 1441.4,147.4 1436.2,148.7 1430.8,148.5 1425.5,149.0 1420.1,149.2 1414.8,150.6 1409.7,152.8 1403.9,152.2 1398.8,154.5 1393.8,157.4 1387.7,157.6 1382.4,159.9 1378.0,164.2 1372.2,165.2 1367.8,167.9 1362.9,169.8 1358.2,172.1 1354.5,176.0 1350.3,179.0 1345.5,181.2 1341.4,185.7 1335.5,188.3 1332.0,193.7 1326.9,197.2 1322.0,200.2 1317.8,204.3 1312.5,206.7 1307.0,209.0 1302.9,213.2 1299.2,217.1 1293.9,218.9 1290.1,222.7 1285.3,225.1 1281.6,229.1 1276.0,231.3 1271.2,235.1 1265.1,236.2 1260.3,239.8 1255.0,241.8 1250.1,244.9 1244.7,247.0 1239.0,247.8 1231.0,253.1"/>
<polyline points="1422.8,695.4 1427.5,698.1 1432.2,700.6 1437.0,703.0 1441.5,706.1 1446.3,709.1 1450.2,713.2 1454.6,716.9 1457.9,721.7 1462.8,724.7 1468.7,726.2 1473.1,730.6 1478.4,733.5 1484.5,734.5 1489.4,738.0 1494.4,740.9 1499.9,742.1 1505.1,744.4 1510.9,744.6 1516.2,746.6 1521.4,748.7 1526.8,749.3 1531.8,751.7 1537.4,751.4 1540.7,756.8 1544.8,761.8 1548.0,767.3 1552.4,769.9 1556.9,772.2 1561.4,774.3 1565.6,777.1 1569.3,780.7 1574.4,783.3 1580.2,783.7 1585.3,786.0 1589.3,790.2 1595.0,792.1 1599.7,795.5 1604.0,799.3"/>
<polyline points="1537.4,751.4 1539.1,746.0 1539.9,740.5 1542.1,735.3 1545.2,730.4 1546.7,725.0 1548.1,719.6 1549.4,714.2 1550.7,708.7 1553.7,704.5 1555.7,699.9 1556.8,694.8 1558.7,690.1"/>
<polyline points="943.2,543.5 938.8,548.5 935.2,554.2 935.7,559.7 933.3,564.8 933.3,570.2 932.6,575.5 931.2,580.8 930.9,586.1 931.1,591.6 929.9,596.8 932.4,601.9 931.5,607.8 934.8,612.6 935.3,618.1 936.9,623.4 937.9,628.8 940.6,633.5 941.8,638.8 943.4,644.0 947.3,648.1 948.6,653.4 951.2,658.1 947.8,662.2 943.6,665.5 940.2,669.5 936.9,673.6 932.6,676.8 932.5,682.2 931.5,687.5 929.9,692.7 926.3,697.6 924.6,703.4 922.5,709.1 919.2,714.1 917.1,719.2 915.8,724.5 916.2,730.1 915.9,735.6 913.9,740.7 917.3,745.7 920.2,750.9 922.3,756.5 924.6,762.0 924.3,767.6 922.6,772.8 921.2,778.2 919.2,783.3 922.4,787.4 925.1,792.0 928.7,795.7 932.6,799.3 934.8,804.7 936.8,810.2 938.5,815.7 940.5,821.2"/>
<polyline points="951.2,660.8 956.5,659.9 961.8,659.3 967.1,658.0 972.5,658.1 977.8,658.1 983.5,658.0 988.3,654.5 993.8,654.1 999.2,652.8 1003.4,649.7 1007.8,646.8 1010.7,642.2 1015.2,639.5 1020.2,636.3 1025.5,633.5 1031.0,631.2 1036.5,628.8 1039.9,625.1 1044.4,622.5 1047.8,618.8 1051.4,615.3 1053.4,610.2 1056.9,606.6 1061.7,604.3 1065.6,601.1 1068.4,596.8 1071.9,592.8 1075.7,589.0 1078.1,584.0 1082.4,580.7 1087.0,577.6 1089.8,572.8 1094.7,570.4 1099.2,567.4 1103.8,564.5 1107.1,559.9 1111.4,556.5 1116.4,554.2 1121.3,550.7 1127.1,548.9 1132.0,547.1 1137.2,545.8 1142.0,543.5"/>
<polyline points="1047.1,821.2 1053.0,819.3 1058.1,816.0 1063.1,812.6 1068.5,812.6 1073.8,812.6 1079.1,811.4 1084.4,811.3 1089.7,809.5 1095.1,811.1 1100.4,810.0 1104.7,807.1 1110.0,806.4 1114.3,803.5 1118.5,800.4 1122.8,797.7 1127.5,795.7 1132.4,794.0 1136.9,791.1 1141.2,788.0 1144.6,783.6 1148.8,780.3 1153.7,778.0 1159.1,774.5 1164.5,771.1 1169.7,767.3 1171.2,761.9 1172.6,756.5 1175.0,751.4 1183.0,746.0"/>
<polyline points="0.0,1036.8 4.1,1039.7 9.2,1041.1 13.1,1044.4 17.1,1047.4 21.3,1050.1 23.3,1055.0 26.9,1058.6 29.4,1063.2 33.2,1066.7 36.7,1070.5 39.6,1074.6 41.1,1079.8 44.6,1083.6 48.0,1087.4 51.4,1091.7 55.1,1095.9 57.1,1101.1 59.8,1106.0 63.4,1110.2 66.8,1114.5 69.3,1119.4 73.7,1123.1 78.0,1127.0 83.7,1128.8 87.9,1132.7 94.1,1128.9 101.2,1127.4 105.5,1124.4 110.0,1121.9 114.8,1119.8 118.6,1116.1 123.8,1114.7 127.9,1111.4 131.1,1107.5 133.2,1102.9 135.2,1098.2 139.6,1095.0 141.2,1090.1 143.9,1086.4"/>
<polyline points="0.0,1292.6 3.9,1295.8 6.5,1300.3 10.7,1303.3 17.3,1302.6 24.0,1303.3 28.9,1306.2 32.4,1310.9 37.3,1313.9 41.4,1309.9 46.9,1307.7 50.6,1303.3 55.9,1299.7 60.8,1295.5 66.6,1292.6 67.2,1287.1 69.1,1281.9 71.0,1276.7 71.9,1271.3 79.0,1269.7 85.3,1266.0 91.7,1263.7 98.6,1263.3 104.0,1263.9 109.4,1264.3 114.6,1266.0"/>
<polyline points="575.5,1537.7 577.1,1543.2 581.7,1547.0 584.5,1551.8 587.2,1556.7 589.1,1562.0 591.5,1567.0 594.8,1571.8 598.8,1575.7 603.1,1579.4 607.5,1583.0 602.6,1586.1 598.7,1590.2 595.8,1595.3 591.5,1599.0 589.0,1603.8 584.2,1606.8 581.4,1611.4 579.7,1616.8 575.5,1620.3 577.8,1626.0 581.1,1631.1 583.8,1636.6 586.2,1642.2"/>
<polyline points="802.0,1545.7 800.4,1551.2 798.8,1556.7 797.2,1562.2 794.0,1567.0 792.8,1572.5 790.8,1577.8 787.5,1582.6 787.8,1588.7 784.0,1593.3 783.3,1599.0 783.4,1604.5 782.4,1609.8 780.5,1615.1 779.8,1620.5 780.2,1626.0 780.5,1631.5 778.7,1636.8 778.0,1642.2"/>
<polyline points="388.0,1625.6 391.0,1630.0 396.9,1634.4 403.4,1633.0 410.1,1632.2 416.0,1635.0 422.2,1633.3 425.3,1638.8 430.0,1643.0"/>
<polyline points="373.0,821.0 376.4,826.0 378.7,831.5 380.1,837.4 383.7,842.3 388.8,842.9 393.2,845.7 397.6,848.4 402.4,850.1 407.8,850.1 412.5,851.8 417.2,853.7 421.2,857.5 426.3,858.3 431.1,861.4 434.8,865.9 439.0,869.8 444.3,872.2 448.9,875.6 452.9,879.6 451.1,884.8 451.3,890.2 451.6,895.7 450.3,900.9 448.8,906.2 449.0,911.7 448.2,917.0 448.0,922.5 445.2,927.5 445.0,932.9 446.2,938.6 449.1,943.7 450.6,949.3 455.0,953.7 456.7,959.3 458.3,964.9 461.4,969.3 463.5,974.4 466.6,978.9 471.0,982.5 474.3,986.7 476.9,991.5 476.6,996.9 475.9,1002.2 474.2,1007.4 475.6,1012.9 473.5,1018.1 473.1,1023.4 472.4,1028.7 472.0,1034.1 471.9,1039.5 471.6,1044.8 476.3,1048.0 480.8,1051.5 485.1,1055.2 488.9,1059.6 494.5,1061.7 498.2,1066.1 499.8,1071.0 499.1,1076.1 501.2,1080.9 502.4,1085.7 503.2,1090.7 502.7,1095.8 503.6,1100.8 502.2,1107.1 498.8,1112.9 498.2,1119.4 496.4,1124.6 495.2,1129.9 496.2,1135.5 495.8,1140.9 494.8,1146.2 492.9,1151.4 492.5,1156.7 491.5,1162.0 491.7,1167.4 491.8,1172.8 490.9,1178.0 490.2,1183.4 492.0,1188.8 493.8,1194.2 495.6,1199.6 498.2,1204.7 496.5,1209.9 496.0,1215.3 496.5,1220.8 493.8,1225.8 494.3,1231.4 492.9,1236.6 493.8,1242.0 495.4,1247.2 495.5,1252.8 497.9,1257.8 498.2,1263.3 501.0,1268.4 503.1,1273.7 505.5,1278.9 505.8,1285.0 508.9,1289.9 507.8,1295.2 507.6,1300.7 506.2,1305.9 503.5,1310.2 499.3,1313.5 497.3,1318.3 495.0,1322.9 490.8,1326.2 488.1,1330.6 484.5,1334.2 483.4,1339.7 479.6,1343.2 476.1,1347.7 471.8,1351.6 468.2,1356.0 464.5,1360.3 462.8,1366.2 458.3,1369.9 456.8,1375.4 455.2,1380.9 453.0,1386.1 450.3,1391.2 445.3,1393.4 441.6,1397.4 436.8,1399.9 433.4,1404.2 429.0,1407.2 423.8,1409.7 419.7,1413.9 415.3,1417.7 410.3,1420.5 410.1,1426.4 410.2,1432.3 412.9,1438.0 412.2,1444.0 413.0,1449.8 414.0,1455.2 416.4,1460.3 417.3,1465.7 419.2,1470.9 420.4,1476.3 421.0,1481.8 427.4,1482.9 433.3,1485.6 439.6,1487.1 438.9,1492.4 439.7,1497.8 438.6,1503.1"/>
<polyline points="438.8,1490.0 440.9,1495.3 440.4,1501.0 439.6,1506.6 437.4,1512.0 436.6,1517.6 436.8,1522.8 435.8,1527.8 435.4,1532.9 433.2,1537.8 433.3,1543.0 435.4,1549.6 437.7,1556.2 440.0,1565.0 432.0,1561.7 426.0,1567.2 427.4,1573.7 426.6,1580.4 423.5,1584.5 419.0,1587.0 411.2,1583.7 405.0,1581.2 399.0,1578.2 391.4,1583.7 393.6,1592.5 402.4,1595.8 407.3,1597.6 412.3,1599.2 417.6,1603.3 423.3,1606.9 425.4,1611.8 426.4,1617.0 426.6,1622.3 428.3,1628.0 431.0,1633.3 432.9,1638.1 434.4,1643.0"/>
<polyline points="319.7,842.3 325.2,842.8 330.5,844.0 335.5,846.7 341.1,846.1 346.4,847.6 351.7,847.1 357.0,845.8 362.3,845.1 367.8,845.5 373.2,845.1 378.3,842.7 383.7,842.3"/>
<polyline points="482.3,821.0 483.0,827.2 481.7,833.4 482.3,839.7 479.6,844.8 476.6,849.7 471.4,853.0 468.9,858.3 465.9,862.7 461.9,866.3 459.5,871.2 455.3,874.8 452.9,879.6"/>
<polyline points="698.1,821.0 698.2,826.3 698.9,831.7 699.3,837.0 697.9,842.3 697.7,847.6 697.0,853.0 699.1,858.3 697.8,863.6 698.4,869.0 698.1,874.3 696.6,879.1 696.0,884.2 694.3,889.0 692.2,893.6 689.7,898.2 690.3,903.6 687.9,908.2 685.7,912.8 683.8,917.5 684.3,923.0 682.1,927.6 684.8,932.6 684.5,938.6 686.2,944.0 689.2,948.9 692.1,953.9 692.7,959.5 694.4,965.4 698.3,970.1 699.8,976.0 703.4,980.9 707.5,984.3 711.4,987.9 716.7,989.7 720.0,994.2 724.7,996.8 729.8,994.4 735.3,993.1 741.0,992.4 746.3,990.6 751.1,987.2 756.7,986.2 761.8,983.7 767.3,982.4 772.7,980.9 777.5,982.7 782.5,984.1 787.7,985.3 792.4,987.4 796.9,990.3 802.0,991.5"/>
<polyline points="703.4,980.9 698.0,980.2 692.8,982.8 687.4,981.8 682.0,981.7 676.8,984.0 671.4,982.3 666.1,983.5 663.7,988.4 659.5,991.9 656.4,996.2 653.0,1000.4 650.1,1004.8 644.8,1005.0 639.4,1004.4 634.1,1003.6 628.8,1003.7 623.5,1002.8 618.1,1003.0 612.8,1002.7 607.5,1002.2 603.1,1005.0 597.8,1005.1 593.1,1007.0 588.5,1009.2 583.3,1009.5 578.5,1011.1 573.9,1013.5 569.4,1015.8 564.3,1016.6 559.5,1018.2 556.4,1022.7 552.6,1026.5 548.2,1029.7 545.0,1034.1 540.6,1037.3 536.7,1041.0 532.9,1044.8 530.8,1050.0 526.5,1053.7 524.6,1059.1 520.2,1062.7 517.1,1067.2 514.6,1072.2 511.6,1076.8 512.7,1082.8 511.6,1088.8 511.9,1094.8 511.6,1100.8 503.6,1100.8"/>
<polyline points="317.1,1223.3 321.5,1226.2 327.2,1226.0 331.4,1229.5 336.2,1231.6 341.3,1232.8 346.4,1234.0 351.3,1237.4 357.4,1238.6 361.8,1243.1 367.7,1244.6 373.0,1247.3 378.1,1249.6 383.4,1250.6 389.2,1249.9 394.2,1252.6 399.4,1254.1 405.2,1253.0 410.3,1255.3 415.2,1253.8 420.4,1253.7 425.0,1251.0 430.3,1251.7 434.9,1249.0 440.2,1249.2 445.0,1247.3 449.5,1249.9 452.9,1254.0 456.2,1258.1 461.4,1260.0 465.3,1263.5 468.9,1267.3 473.2,1270.3 476.9,1273.9 481.7,1270.2 487.2,1267.9 492.5,1265.2 498.2,1263.3"/>
<polyline points="508.9,1305.9 514.2,1303.5 518.5,1299.6 523.5,1296.8 527.5,1292.6"/>
<polyline points="274.4,1327.2 277.2,1332.3 277.7,1338.2 281.4,1342.9 282.4,1348.5 287.2,1351.8 291.8,1355.2 297.0,1357.8 301.1,1362.1 306.4,1364.5 310.7,1367.7 314.9,1370.7 318.8,1374.3 324.3,1375.7 327.3,1380.6 332.2,1382.8 336.9,1385.3 341.0,1388.5 346.3,1389.6 351.7,1388.6 356.9,1390.8 362.3,1390.0 367.7,1389.8 373.0,1391.2 378.4,1390.7 383.7,1391.2 388.4,1393.5 391.7,1397.8 396.9,1399.4 399.9,1404.0 405.0,1405.9 408.6,1409.7 413.0,1412.5"/>
<polyline points="943.2,821.0 944.8,825.9 948.4,829.6 950.8,834.0 954.3,837.8 956.5,842.3 955.7,848.1 953.7,853.4 951.4,858.6 948.5,863.6 945.6,868.8 943.2,874.3 943.7,879.6 943.8,884.9 943.1,890.3 945.4,895.5 945.4,900.9 944.6,906.3 946.5,911.5 946.9,916.8 945.9,922.2 940.8,926.1 935.8,930.2 929.9,932.9 924.7,935.3 919.5,937.6 913.8,938.7 908.6,940.9 904.8,945.2 902.1,950.3 897.9,954.2 893.7,957.3 890.0,960.9 886.5,964.9 881.9,967.5 877.2,970.0 874.4,974.7 870.5,978.2 865.9,980.9 862.7,986.2 857.7,990.0 853.2,994.2 850.0,999.5 843.5,1000.6 837.6,1003.3 831.3,1004.8 826.2,1003.2 821.0,1001.6 816.8,997.8 811.8,995.8 806.7,994.1 802.0,991.5"/>
<polyline points="948.5,863.6 953.6,861.8 958.3,859.1 963.7,858.0 968.3,855.3 972.7,851.9 977.8,850.3 982.9,848.6 986.4,844.0 991.6,842.4 996.0,839.4 1000.3,836.4 1004.7,833.3 1009.8,831.7 1015.0,830.8 1019.3,827.4 1024.7,827.2 1030.0,826.7 1034.3,823.2 1039.3,821.8 1044.5,821.0"/>
<polyline points="908.6,943.6 913.9,944.6 919.2,945.0 924.5,946.1 929.8,947.3 935.3,946.4 940.6,947.4 945.9,948.1 951.4,948.2 956.4,951.1 961.8,951.6 967.2,951.6 972.4,953.4 978.2,953.0 983.0,956.4 988.4,957.5 993.9,958.1 999.2,959.5 1003.7,961.9 1008.7,963.0 1013.6,964.2 1018.5,965.7 1023.1,967.8 1028.0,969.1 1032.5,971.6 1036.8,974.4 1041.8,975.5 1046.4,977.8 1051.0,979.9 1055.8,981.4 1061.0,982.1 1065.4,984.5 1070.3,986.0 1074.7,988.7 1079.7,989.8 1084.4,991.5 1090.0,993.6 1094.9,997.2 1099.9,1000.6 1106.1,1001.5 1111.1,1004.8 1114.7,1009.3 1120.4,1011.4 1124.3,1015.6 1128.6,1019.2 1132.4,1023.5"/>
<polyline points="847.3,1002.2 846.7,1007.5 846.1,1012.8 846.7,1018.2 847.3,1023.5 851.4,1027.5 854.0,1032.7 858.8,1036.0 862.7,1040.1 865.9,1044.8 868.3,1049.7 872.1,1053.5 875.1,1057.9 878.4,1062.1 881.9,1066.1 886.8,1069.4 892.6,1070.3 897.6,1073.3 903.1,1075.1 908.6,1076.8 913.7,1079.0 919.3,1079.3 924.4,1081.3 929.8,1082.3 935.3,1083.0 940.5,1084.8 946.1,1085.7 951.1,1088.3 956.9,1088.5 961.6,1092.2 967.2,1092.8 972.2,1094.2 976.9,1096.2 981.4,1098.7 985.0,1102.9 990.2,1103.8 995.0,1105.6 999.2,1108.8 1004.8,1109.2 1010.2,1110.8 1015.0,1114.0 1020.4,1115.5 1025.8,1116.7"/>
<polyline points="1374.8,898.3 1378.9,901.4 1383.2,904.1 1388.4,905.3 1392.0,909.1 1396.7,911.3 1400.4,915.0 1404.7,917.6 1409.5,919.6 1411.3,924.7 1415.8,928.3 1416.6,934.0 1420.1,938.2 1421.9,943.6 1424.5,948.6 1429.0,952.4 1431.5,957.4 1434.3,962.2 1436.1,967.5 1440.9,969.9 1443.5,974.9 1447.6,978.2 1452.1,980.9 1457.4,982.3 1462.6,983.8 1468.0,984.4 1473.5,984.6 1478.8,986.2 1483.9,984.4 1489.3,983.6 1494.8,984.5 1500.0,982.2 1505.3,981.7 1510.7,981.2 1515.9,979.4 1521.4,979.8 1526.9,980.7 1532.2,982.2 1537.2,984.7 1542.8,985.3 1548.2,986.7 1553.0,989.8 1558.7,990.1 1564.0,991.5 1564.9,997.1 1567.3,1002.3 1569.3,1007.5 1573.8,1010.2 1576.6,1014.5 1580.1,1018.0 1583.1,1022.2 1587.4,1025.0 1590.7,1028.8 1597.5,1026.7 1604.0,1023.5"/>
<polyline points="1598.7,1034.2 1597.0,1039.5 1596.2,1045.0 1593.0,1049.9 1593.3,1055.8 1590.7,1060.8 1586.7,1064.3 1584.7,1069.3 1581.7,1073.6 1577.9,1077.3 1573.5,1080.3 1569.7,1084.0 1568.3,1089.6 1564.0,1092.8 1558.7,1095.5 1553.4,1098.1 1547.7,1100.1 1543.1,1104.2 1537.4,1106.1 1533.1,1108.8 1529.1,1111.8 1524.1,1113.4 1520.7,1117.3 1516.1,1119.4 1511.2,1121.1 1507.8,1125.2 1503.7,1128.0 1498.7,1129.6 1494.7,1132.7"/>
<polyline points="802.0,1545.7 802.9,1540.4 802.8,1534.9 805.0,1529.8 804.5,1524.2 807.2,1519.2 807.3,1513.7 807.8,1508.4 808.1,1503.1 807.7,1497.8 807.0,1492.4 807.1,1487.1 807.1,1481.8 808.3,1476.4 807.3,1471.1 808.4,1465.9 812.4,1462.0 812.4,1456.4 814.9,1451.9 817.1,1447.2 820.7,1443.1 821.8,1438.0 823.6,1433.1 826.0,1428.5 828.3,1423.4 828.0,1417.7 829.9,1412.5 831.4,1407.2 833.3,1402.0 834.0,1396.5 838.9,1392.5 843.1,1387.9 847.3,1383.2 852.2,1381.3 857.2,1379.8 862.1,1377.9 867.7,1378.1 872.6,1376.2 877.7,1374.9 882.3,1372.0 887.5,1371.2 892.6,1369.9 898.0,1369.8 903.3,1368.5 908.4,1366.6 913.9,1366.7 919.4,1367.0 924.5,1364.6 929.9,1364.5 935.4,1364.7 940.6,1366.0 945.8,1368.1 951.0,1369.4 956.7,1368.6 962.0,1369.7 967.3,1370.9 972.5,1372.5"/>
<polyline points="1268.3,1292.6 1272.4,1295.5 1275.9,1299.2 1280.4,1301.7 1284.0,1305.3 1288.0,1308.3 1290.6,1313.1 1294.8,1315.8 1299.7,1317.9 1302.9,1321.9 1305.5,1327.9 1310.9,1332.0 1313.6,1337.9 1315.6,1342.7 1315.9,1348.1 1318.2,1352.8 1320.1,1357.6 1322.6,1362.3 1325.0,1366.9 1325.7,1372.2 1328.7,1376.6 1330.3,1381.6 1331.6,1386.6 1334.2,1391.2 1334.9,1396.5 1336.9,1401.2 1337.7,1406.2 1339.7,1410.9 1342.0,1415.5 1343.4,1420.3 1345.6,1424.9 1348.2,1429.3 1348.8,1434.5 1350.9,1439.1 1354.8,1442.8 1358.0,1447.2 1361.5,1451.3 1366.2,1454.2 1369.8,1458.3 1373.2,1462.4 1377.5,1465.8 1381.1,1469.6 1385.0,1473.3 1387.5,1478.2 1390.6,1482.4 1394.3,1486.2 1397.9,1490.1 1401.1,1494.4 1404.9,1498.1 1408.4,1502.0 1412.1,1505.7 1418.0,1506.2 1423.9,1506.3 1429.7,1507.7 1435.7,1506.8 1441.5,1508.4 1446.7,1507.1 1452.3,1507.0 1457.5,1505.8 1462.8,1504.5 1468.1,1503.1 1473.3,1501.4 1478.7,1500.8 1484.1,1499.8 1489.5,1499.1 1494.7,1497.8 1496.3,1492.4 1498.7,1487.2 1500.1,1481.8 1505.9,1480.1 1510.4,1475.7 1516.2,1474.1 1521.4,1471.1 1526.4,1470.7 1531.1,1468.6 1536.0,1467.8 1541.2,1467.9 1545.5,1464.4 1550.7,1464.6 1555.4,1462.5 1560.6,1462.9 1565.6,1462.2 1570.2,1460.1 1574.9,1457.9 1580.0,1457.8 1588.0,1463.1 1589.6,1468.5 1591.4,1473.8 1593.3,1479.1 1598.4,1482.3 1604.0,1484.4"/>
<polyline points="1521.4,1471.1 1520.7,1476.4 1519.7,1481.7 1518.5,1487.0 1518.7,1492.4 1518.3,1497.8 1516.2,1502.9 1517.5,1508.5 1516.1,1513.7 1511.8,1516.7 1508.2,1520.6 1503.6,1523.2 1500.7,1527.8 1495.3,1529.4 1492.3,1534.0 1488.8,1537.9 1484.1,1540.4 1479.7,1543.6 1474.9,1545.9 1470.7,1549.5 1465.5,1551.2 1460.9,1553.9 1455.9,1555.9 1451.6,1559.4 1446.8,1561.7 1441.6,1563.3 1436.3,1564.3 1430.7,1564.0 1425.3,1564.5 1420.1,1566.5 1414.9,1568.2 1409.3,1567.7 1404.2,1569.7 1399.0,1571.2 1393.7,1572.3 1388.2,1572.4 1383.2,1574.0 1378.5,1576.3 1374.0,1579.0 1369.6,1581.8 1364.8,1583.9 1360.5,1587.0 1355.0,1587.6 1350.9,1591.0 1345.4,1589.8 1340.3,1587.5 1335.1,1585.4 1329.8,1583.8 1324.2,1583.0 1318.9,1584.2 1313.7,1585.7 1308.2,1586.1 1303.1,1588.2 1297.6,1588.3 1292.3,1586.9 1286.9,1587.7 1281.7,1585.8 1276.2,1586.8 1270.9,1585.7"/>
<polyline points="1542.7,1375.2 1544.3,1380.4 1546.0,1385.7 1546.9,1391.1 1548.0,1396.5 1547.8,1402.0 1547.2,1407.4 1544.3,1412.4 1544.3,1417.9 1542.7,1423.2 1548.0,1428.5 1552.4,1425.9 1557.2,1424.0 1562.0,1422.4 1566.6,1420.3 1571.5,1418.8 1576.2,1416.9 1580.5,1414.2 1585.8,1413.5 1590.4,1411.3 1594.2,1407.4 1599.7,1407.3 1604.0,1404.5"/>
<polyline points="1063.1,1620.3 1060.3,1625.3 1058.9,1630.7 1057.8,1636.3 1063.4,1637.4 1068.1,1641.0 1073.8,1642.2"/>
</g>
<g fill="none" stroke="#d4d4f4" stroke-width="1.9" stroke-dasharray="2 7" opacity="0.6">
<polyline points="0.0,298.4 5.1,295.3 10.7,293.1 14.5,288.0 19.8,284.5 24.0,279.8 26.4,274.5 30.7,270.5 33.7,265.6 37.3,261.1 39.0,256.2 42.6,252.6 44.3,247.7 47.8,244.0 50.6,239.8 54.4,235.4 58.8,231.9 63.9,229.1 65.5,223.7 68.3,218.7 69.3,213.2 73.5,209.6 78.2,207.2 83.4,205.4 87.9,202.5 90.4,196.1 90.6,189.2 96.0,188.0 101.2,186.2 106.9,186.4 111.9,183.8 116.9,181.2 122.8,181.7 127.7,178.7 133.0,176.9 138.3,175.3 143.7,174.2 149.2,173.2 155.0,170.3 159.4,165.4 165.2,162.5 170.6,161.4 175.9,160.2 181.1,158.2 186.5,157.2 190.6,152.6 193.6,147.1 197.6,142.5 202.5,138.5 205.8,134.2 210.4,131.3 213.8,127.0 217.4,123.0 221.7,119.7 225.2,115.6 229.1,111.9 233.1,108.8 238.1,107.2 242.2,104.4 245.8,100.7 250.5,98.6 257.1,100.1 263.8,101.2 268.7,99.5 273.9,98.6 278.6,96.5 283.1,93.6 288.6,93.5 293.1,90.6 297.3,85.3"/>
<polyline points="91.7,190.8 90.9,185.6 92.0,180.5 93.1,175.4 91.8,170.1 93.0,165.0 93.3,159.9 92.7,154.4 95.0,149.3 95.9,144.0 95.9,138.5"/>
<polyline points="63.9,229.1 69.3,229.9 74.5,231.2 80.0,230.3 85.2,231.8 90.6,231.8 95.9,232.5 101.2,232.9 106.6,233.0 111.8,234.5 117.1,235.2 122.6,234.5 128.6,234.4 134.6,234.9 140.5,233.3 146.5,234.5"/>
<polyline points="0.0,479.6 5.3,480.6 10.6,481.0 15.9,482.5 21.2,482.6 26.6,482.3 32.6,481.0 38.6,480.6 44.7,480.7 50.6,479.6 56.7,479.4 62.4,481.6 68.4,481.9 74.2,482.9 79.9,484.9 85.2,486.6 88.9,490.9 94.4,492.1 98.6,495.6 103.7,496.7 108.4,498.9 112.9,501.8 118.5,501.7 123.1,504.3 127.9,506.2 133.2,506.0 138.6,506.6 143.9,506.1 149.3,505.8 154.5,504.0 159.8,504.0 165.2,503.5 170.5,503.6 175.7,502.7 180.7,501.1 184.9,497.4 189.8,495.7 194.7,494.0 199.8,492.9"/>
<polyline points="50.6,479.6 51.3,472.8 53.3,466.3 58.6,462.7 64.1,459.4 69.3,455.6 72.3,450.8 75.4,445.9 79.9,442.3"/>
<polyline points="778.0,0.0 780.9,5.2 783.6,10.5 786.0,16.0 788.1,21.0 789.5,26.4 792.4,31.0 795.1,35.8 797.1,40.9 799.3,45.9 802.0,50.6"/>
<polyline points="583.5,169.5 586.6,174.7 586.5,181.0 588.8,186.5 591.5,191.8 593.3,196.8 596.2,201.1 599.7,205.0 602.4,209.5 605.7,213.5 607.5,218.5 609.3,223.9 612.8,228.7 614.9,234.0 616.7,239.5 618.1,245.1 620.6,250.2 621.7,255.7 624.0,260.8 625.8,266.1 626.1,271.8 625.7,277.3 624.5,282.7 622.5,287.8 620.8,293.1 618.7,298.2 613.8,301.4 611.2,306.2 609.1,311.4 605.8,315.7 602.2,319.7 598.0,323.6 593.5,327.1 589.4,331.2 583.8,333.2 579.1,336.5 575.5,341.0 574.7,346.4 573.8,351.7 573.9,357.2 573.0,362.5 571.5,367.8 570.2,373.0 569.0,378.5 565.8,383.4 564.9,389.0 567.9,394.0 570.4,399.2 570.4,405.4 573.7,410.3 576.8,415.3 578.2,421.0 579.0,426.3 581.2,431.4 580.8,437.0 580.5,442.5 581.7,447.8 583.5,452.9 583.5,458.3 585.2,463.5 585.4,468.9 586.5,474.2 586.2,479.6 585.9,485.0 587.0,490.3 586.8,495.6 588.4,500.9 589.1,506.2 588.8,511.6 583.0,514.9 578.2,519.6 575.2,524.0 573.8,529.0 572.1,533.9 570.3,538.8 568.7,543.8 567.5,548.9 564.6,553.5 560.6,557.2 557.5,561.7 554.8,566.4 551.3,570.6 547.4,574.3 543.5,578.2 543.1,584.1 540.9,589.8 539.2,595.5 539.4,601.6 538.2,607.5 534.8,611.7 532.3,616.4 530.0,621.2 529.0,626.6 527.0,631.5 524.6,636.2 522.3,641.0 519.9,645.7 516.9,650.1 514.8,654.7 512.4,659.2 510.7,664.0 509.8,669.1 507.6,673.7 505.5,678.3 505.5,683.6 502.3,687.9 500.9,692.7 498.0,697.7 496.4,703.2 494.6,708.5 493.3,714.1 492.2,719.7 488.8,724.5 487.6,730.0 487.5,735.4 485.7,740.6 484.8,745.9 485.7,751.4 484.9,756.7 487.8,763.3 490.2,770.0 488.3,774.9 488.1,780.2 488.7,785.5 488.0,790.6 487.1,795.7 484.4,800.5 483.9,805.7 484.8,811.1 482.2,815.9 482.3,821.2"/>
<polyline points="626.1,271.8 631.2,270.2 635.2,266.8 639.5,263.8"/>
<polyline points="479.6,274.4 485.7,275.4 491.6,277.2 497.8,277.5 503.6,279.8 509.6,282.3 513.5,287.9 519.6,290.4 522.6,295.3 526.2,299.8 528.6,305.1 532.9,309.1 537.2,311.6 540.9,315.2 545.2,317.8 550.3,319.1 554.2,322.4 556.4,327.0 557.9,331.8 559.6,336.6 560.4,341.6 562.2,346.4 562.8,351.7 562.4,357.0 563.1,362.4 561.1,367.7 562.6,373.0 562.2,378.3 563.6,383.6 564.9,389.0"/>
<polyline points="543.5,578.2 548.9,577.1 554.4,576.5 559.5,574.0 564.9,572.8 569.8,574.5 575.0,573.9 580.0,574.5 585.1,575.0 590.3,574.3 595.2,575.9 600.4,575.8 605.5,575.8 610.3,578.4 615.5,578.2 621.3,576.0 627.4,575.4 633.6,574.7 639.5,572.8 644.4,572.2 649.3,570.9 654.3,570.6 659.3,569.9 664.3,569.8 669.0,567.3 674.1,567.5 678.6,563.2 682.5,558.2 687.4,554.2 691.7,551.4 696.9,550.3 701.1,547.4 705.8,545.2 710.6,543.4 715.3,541.5 719.4,538.2 722.8,533.7 726.7,529.5 730.1,524.9 733.6,520.5 737.5,516.3 740.7,511.6 743.7,507.5 747.0,503.6 750.0,499.5 754.0,496.3 756.7,491.9 759.4,487.6"/>
<polyline points="471.6,564.9 475.4,569.2 479.8,572.9 484.9,575.5 489.9,576.5 494.5,578.9 498.9,581.4 503.8,582.7 508.9,583.5 511.6,589.5 513.4,595.7 514.2,602.2 514.0,607.5 514.6,612.9 513.8,618.2 513.8,623.5 511.9,628.8 511.2,634.1 511.6,639.5 509.0,644.5 509.4,650.4 506.5,655.3 505.1,660.7 504.8,666.4 501.5,671.2 500.9,676.8 497.8,680.9 497.6,686.4 493.8,690.3 493.2,695.5 490.9,700.1 487.7,704.2 486.1,709.1 484.9,714.1 484.7,719.6 483.0,724.7 481.7,730.0 481.1,735.5 479.6,740.7 484.2,745.6 487.6,751.4"/>
<polyline points="237.1,687.4 242.1,689.1 246.5,692.2 252.0,692.7 256.3,696.1 261.1,698.1 265.6,701.1 270.7,703.3 274.7,707.0 278.7,710.8 283.3,713.6 287.8,716.7 293.6,718.4 297.8,723.2 303.4,725.4 309.1,727.4 314.2,729.5 319.9,728.1 325.1,730.0 330.4,738.0 331.7,744.0 332.9,749.9 331.7,756.1 333.0,762.0 336.2,766.3 339.2,770.7 341.2,775.6 342.8,780.8 345.7,785.3 349.6,789.1 351.7,794.0 356.0,798.0 357.9,803.7 362.2,807.7 365.5,812.4 370.3,816.0 373.0,821.2"/>
<polyline points="330.4,738.0 331.1,732.3 334.4,727.5 335.7,722.1 337.9,717.3 339.5,712.2 343.9,708.6 345.3,703.4"/>
<polyline points="700.7,770.0 695.4,778.0 697.8,783.5 700.0,789.0 703.4,794.0 703.4,799.6 700.4,804.7 701.3,810.5 698.2,815.5 698.1,821.2"/>
<polyline points="802.0,53.3 807.4,55.8 812.8,58.2 818.0,61.3 821.9,66.0 825.1,71.3 830.4,74.9 834.0,79.9 837.0,84.3 838.2,89.6 841.0,94.0 843.4,98.7 844.6,103.9 848.0,107.9 851.0,112.2 852.6,117.2 855.3,122.3 857.1,127.7 859.1,133.0 860.6,138.5"/>
<polyline points="1095.1,0.0 1091.1,4.2 1088.7,9.5 1084.8,13.7 1082.1,18.8 1078.3,23.1 1075.5,28.2 1071.1,32.0 1069.5,37.6 1067.8,43.1 1063.9,47.7 1062.1,53.2 1060.7,58.9 1057.8,63.9 1058.4,69.3 1057.7,74.7 1060.4,79.8 1059.1,85.3 1060.6,90.6 1061.0,95.9 1060.6,101.3 1062.3,106.5 1062.6,111.9 1063.1,117.2 1063.1,122.6 1062.7,128.0 1064.9,133.2 1064.0,138.6 1064.8,143.9 1065.8,149.2 1062.8,154.4 1060.7,160.0 1058.1,165.4 1056.2,171.0 1052.5,175.8 1049.7,181.7 1046.3,187.1 1041.8,191.8 1040.5,197.1 1041.1,202.6 1040.7,207.9 1039.1,213.2"/>
<polyline points="1564.0,0.0 1562.3,5.8 1557.9,10.3 1556.0,16.0 1554.8,21.3 1555.0,26.6 1555.8,32.0 1555.6,37.3 1555.2,42.7 1554.5,48.0 1555.0,53.3 1554.0,58.6 1554.2,64.0 1553.4,69.3 1551.2,74.4 1550.2,79.7 1550.2,85.2 1550.0,90.7 1547.2,95.7 1547.9,101.3 1546.7,106.6 1545.4,111.9 1550.4,116.5 1553.4,122.6 1552.1,128.0 1550.2,133.2 1548.6,138.5 1547.7,144.1 1545.4,149.2 1541.6,153.5 1538.9,158.6 1534.6,162.4 1531.2,167.0 1526.7,170.5 1524.8,175.9 1523.6,181.6 1521.5,187.0 1518.7,192.0 1516.1,197.2 1516.3,202.6 1514.9,207.8 1514.6,213.1 1513.6,218.4 1513.4,223.8 1513.4,229.1 1513.2,234.5 1513.2,239.9 1514.8,245.1 1515.4,250.4 1514.0,255.9 1516.6,261.0 1516.1,266.4 1513.5,271.6 1511.7,277.0 1511.2,282.8 1508.1,287.8 1504.1,291.2 1500.6,295.1 1497.8,299.5 1494.7,303.7 1489.7,305.3 1484.8,307.3 1480.7,311.0 1475.5,312.2 1470.8,314.4 1465.4,315.3 1460.0,315.3 1454.6,316.3 1449.3,317.1 1444.1,318.6 1438.8,319.7 1433.5,322.2 1429.2,326.0 1424.5,329.3 1420.1,333.0 1415.0,335.1 1409.8,336.9 1404.4,338.0 1398.8,338.4 1395.9,343.4 1393.3,348.5 1388.5,352.3 1385.9,357.5 1382.8,362.4 1379.3,366.1 1375.9,370.1 1372.5,374.0 1369.5,378.3 1366.9,383.7 1365.3,389.6 1361.5,394.3"/>
<polyline points="1494.7,303.7 1495.3,309.3 1496.8,314.6 1498.7,319.7 1500.1,325.1 1501.0,330.4 1501.8,335.8 1504.4,340.8 1503.7,346.5 1505.4,351.7"/>
<polyline points="1550.7,71.9 1550.0,77.4 1549.1,82.9 1547.3,88.1 1544.8,93.1 1544.8,98.8 1542.1,103.8 1540.2,108.9 1540.0,114.6 1537.4,119.2 1535.0,124.0 1532.1,128.6 1529.4,133.2 1525.3,136.6 1521.4,140.2 1518.0,144.2 1514.2,147.9 1510.7,151.9 1505.3,152.4 1500.0,151.6 1494.7,150.7 1489.5,148.9 1484.0,149.4 1478.8,148.1 1473.3,149.0 1468.0,148.3 1462.8,146.5 1457.5,147.5 1452.1,146.8 1446.8,147.0 1441.4,147.4 1436.2,148.7 1430.8,148.5 1425.5,149.0 1420.1,149.2 1414.8,150.6 1409.7,152.8 1403.9,152.2 1398.8,154.5 1393.8,157.4 1387.7,157.6 1382.4,159.9 1378.0,164.2 1372.2,165.2 1367.8,167.9 1362.9,169.8 1358.2,172.1 1354.5,176.0 1350.3,179.0 1345.5,181.2 1341.4,185.7 1335.5,188.3 1332.0,193.7 1326.9,197.2 1322.0,200.2 1317.8,204.3 1312.5,206.7 1307.0,209.0 1302.9,213.2 1299.2,217.1 1293.9,218.9 1290.1,222.7 1285.3,225.1 1281.6,229.1 1276.0,231.3 1271.2,235.1 1265.1,236.2 1260.3,239.8 1255.0,241.8 1250.1,244.9 1244.7,247.0 1239.0,247.8 1231.0,253.1"/>
<polyline points="1422.8,695.4 1427.5,698.1 1432.2,700.6 1437.0,703.0 1441.5,706.1 1446.3,709.1 1450.2,713.2 1454.6,716.9 1457.9,721.7 1462.8,724.7 1468.7,726.2 1473.1,730.6 1478.4,733.5 1484.5,734.5 1489.4,738.0 1494.4,740.9 1499.9,742.1 1505.1,744.4 1510.9,744.6 1516.2,746.6 1521.4,748.7 1526.8,749.3 1531.8,751.7 1537.4,751.4 1540.7,756.8 1544.8,761.8 1548.0,767.3 1552.4,769.9 1556.9,772.2 1561.4,774.3 1565.6,777.1 1569.3,780.7 1574.4,783.3 1580.2,783.7 1585.3,786.0 1589.3,790.2 1595.0,792.1 1599.7,795.5 1604.0,799.3"/>
<polyline points="1537.4,751.4 1539.1,746.0 1539.9,740.5 1542.1,735.3 1545.2,730.4 1546.7,725.0 1548.1,719.6 1549.4,714.2 1550.7,708.7 1553.7,704.5 1555.7,699.9 1556.8,694.8 1558.7,690.1"/>
<polyline points="943.2,543.5 938.8,548.5 935.2,554.2 935.7,559.7 933.3,564.8 933.3,570.2 932.6,575.5 931.2,580.8 930.9,586.1 931.1,591.6 929.9,596.8 932.4,601.9 931.5,607.8 934.8,612.6 935.3,618.1 936.9,623.4 937.9,628.8 940.6,633.5 941.8,638.8 943.4,644.0 947.3,648.1 948.6,653.4 951.2,658.1 947.8,662.2 943.6,665.5 940.2,669.5 936.9,673.6 932.6,676.8 932.5,682.2 931.5,687.5 929.9,692.7 926.3,697.6 924.6,703.4 922.5,709.1 919.2,714.1 917.1,719.2 915.8,724.5 916.2,730.1 915.9,735.6 913.9,740.7 917.3,745.7 920.2,750.9 922.3,756.5 924.6,762.0 924.3,767.6 922.6,772.8 921.2,778.2 919.2,783.3 922.4,787.4 925.1,792.0 928.7,795.7 932.6,799.3 934.8,804.7 936.8,810.2 938.5,815.7 940.5,821.2"/>
<polyline points="951.2,660.8 956.5,659.9 961.8,659.3 967.1,658.0 972.5,658.1 977.8,658.1 983.5,658.0 988.3,654.5 993.8,654.1 999.2,652.8 1003.4,649.7 1007.8,646.8 1010.7,642.2 1015.2,639.5 1020.2,636.3 1025.5,633.5 1031.0,631.2 1036.5,628.8 1039.9,625.1 1044.4,622.5 1047.8,618.8 1051.4,615.3 1053.4,610.2 1056.9,606.6 1061.7,604.3 1065.6,601.1 1068.4,596.8 1071.9,592.8 1075.7,589.0 1078.1,584.0 1082.4,580.7 1087.0,577.6 1089.8,572.8 1094.7,570.4 1099.2,567.4 1103.8,564.5 1107.1,559.9 1111.4,556.5 1116.4,554.2 1121.3,550.7 1127.1,548.9 1132.0,547.1 1137.2,545.8 1142.0,543.5"/>
<polyline points="1047.1,821.2 1053.0,819.3 1058.1,816.0 1063.1,812.6 1068.5,812.6 1073.8,812.6 1079.1,811.4 1084.4,811.3 1089.7,809.5 1095.1,811.1 1100.4,810.0 1104.7,807.1 1110.0,806.4 1114.3,803.5 1118.5,800.4 1122.8,797.7 1127.5,795.7 1132.4,794.0 1136.9,791.1 1141.2,788.0 1144.6,783.6 1148.8,780.3 1153.7,778.0 1159.1,774.5 1164.5,771.1 1169.7,767.3 1171.2,761.9 1172.6,756.5 1175.0,751.4 1183.0,746.0"/>
<polyline points="0.0,1036.8 4.1,1039.7 9.2,1041.1 13.1,1044.4 17.1,1047.4 21.3,1050.1 23.3,1055.0 26.9,1058.6 29.4,1063.2 33.2,1066.7 36.7,1070.5 39.6,1074.6 41.1,1079.8 44.6,1083.6 48.0,1087.4 51.4,1091.7 55.1,1095.9 57.1,1101.1 59.8,1106.0 63.4,1110.2 66.8,1114.5 69.3,1119.4 73.7,1123.1 78.0,1127.0 83.7,1128.8 87.9,1132.7 94.1,1128.9 101.2,1127.4 105.5,1124.4 110.0,1121.9 114.8,1119.8 118.6,1116.1 123.8,1114.7 127.9,1111.4 131.1,1107.5 133.2,1102.9 135.2,1098.2 139.6,1095.0 141.2,1090.1 143.9,1086.4"/>
<polyline points="0.0,1292.6 3.9,1295.8 6.5,1300.3 10.7,1303.3 17.3,1302.6 24.0,1303.3 28.9,1306.2 32.4,1310.9 37.3,1313.9 41.4,1309.9 46.9,1307.7 50.6,1303.3 55.9,1299.7 60.8,1295.5 66.6,1292.6 67.2,1287.1 69.1,1281.9 71.0,1276.7 71.9,1271.3 79.0,1269.7 85.3,1266.0 91.7,1263.7 98.6,1263.3 104.0,1263.9 109.4,1264.3 114.6,1266.0"/>
<polyline points="575.5,1537.7 577.1,1543.2 581.7,1547.0 584.5,1551.8 587.2,1556.7 589.1,1562.0 591.5,1567.0 594.8,1571.8 598.8,1575.7 603.1,1579.4 607.5,1583.0 602.6,1586.1 598.7,1590.2 595.8,1595.3 591.5,1599.0 589.0,1603.8 584.2,1606.8 581.4,1611.4 579.7,1616.8 575.5,1620.3 577.8,1626.0 581.1,1631.1 583.8,1636.6 586.2,1642.2"/>
<polyline points="802.0,1545.7 800.4,1551.2 798.8,1556.7 797.2,1562.2 794.0,1567.0 792.8,1572.5 790.8,1577.8 787.5,1582.6 787.8,1588.7 784.0,1593.3 783.3,1599.0 783.4,1604.5 782.4,1609.8 780.5,1615.1 779.8,1620.5 780.2,1626.0 780.5,1631.5 778.7,1636.8 778.0,1642.2"/>
<polyline points="388.0,1625.6 391.0,1630.0 396.9,1634.4 403.4,1633.0 410.1,1632.2 416.0,1635.0 422.2,1633.3 425.3,1638.8 430.0,1643.0"/>
<polyline points="373.0,821.0 376.4,826.0 378.7,831.5 380.1,837.4 383.7,842.3 388.8,842.9 393.2,845.7 397.6,848.4 402.4,850.1 407.8,850.1 412.5,851.8 417.2,853.7 421.2,857.5 426.3,858.3 431.1,861.4 434.8,865.9 439.0,869.8 444.3,872.2 448.9,875.6 452.9,879.6 451.1,884.8 451.3,890.2 451.6,895.7 450.3,900.9 448.8,906.2 449.0,911.7 448.2,917.0 448.0,922.5 445.2,927.5 445.0,932.9 446.2,938.6 449.1,943.7 450.6,949.3 455.0,953.7 456.7,959.3 458.3,964.9 461.4,969.3 463.5,974.4 466.6,978.9 471.0,982.5 474.3,986.7 476.9,991.5 476.6,996.9 475.9,1002.2 474.2,1007.4 475.6,1012.9 473.5,1018.1 473.1,1023.4 472.4,1028.7 472.0,1034.1 471.9,1039.5 471.6,1044.8 476.3,1048.0 480.8,1051.5 485.1,1055.2 488.9,1059.6 494.5,1061.7 498.2,1066.1 499.8,1071.0 499.1,1076.1 501.2,1080.9 502.4,1085.7 503.2,1090.7 502.7,1095.8 503.6,1100.8 502.2,1107.1 498.8,1112.9 498.2,1119.4 496.4,1124.6 495.2,1129.9 496.2,1135.5 495.8,1140.9 494.8,1146.2 492.9,1151.4 492.5,1156.7 491.5,1162.0 491.7,1167.4 491.8,1172.8 490.9,1178.0 490.2,1183.4 492.0,1188.8 493.8,1194.2 495.6,1199.6 498.2,1204.7 496.5,1209.9 496.0,1215.3 496.5,1220.8 493.8,1225.8 494.3,1231.4 492.9,1236.6 493.8,1242.0 495.4,1247.2 495.5,1252.8 497.9,1257.8 498.2,1263.3 501.0,1268.4 503.1,1273.7 505.5,1278.9 505.8,1285.0 508.9,1289.9 507.8,1295.2 507.6,1300.7 506.2,1305.9 503.5,1310.2 499.3,1313.5 497.3,1318.3 495.0,1322.9 490.8,1326.2 488.1,1330.6 484.5,1334.2 483.4,1339.7 479.6,1343.2 476.1,1347.7 471.8,1351.6 468.2,1356.0 464.5,1360.3 462.8,1366.2 458.3,1369.9 456.8,1375.4 455.2,1380.9 453.0,1386.1 450.3,1391.2 445.3,1393.4 441.6,1397.4 436.8,1399.9 433.4,1404.2 429.0,1407.2 423.8,1409.7 419.7,1413.9 415.3,1417.7 410.3,1420.5 410.1,1426.4 410.2,1432.3 412.9,1438.0 412.2,1444.0 413.0,1449.8 414.0,1455.2 416.4,1460.3 417.3,1465.7 419.2,1470.9 420.4,1476.3 421.0,1481.8 427.4,1482.9 433.3,1485.6 439.6,1487.1 438.9,1492.4 439.7,1497.8 438.6,1503.1"/>
<polyline points="438.8,1490.0 440.9,1495.3 440.4,1501.0 439.6,1506.6 437.4,1512.0 436.6,1517.6 436.8,1522.8 435.8,1527.8 435.4,1532.9 433.2,1537.8 433.3,1543.0 435.4,1549.6 437.7,1556.2 440.0,1565.0 432.0,1561.7 426.0,1567.2 427.4,1573.7 426.6,1580.4 423.5,1584.5 419.0,1587.0 411.2,1583.7 405.0,1581.2 399.0,1578.2 391.4,1583.7 393.6,1592.5 402.4,1595.8 407.3,1597.6 412.3,1599.2 417.6,1603.3 423.3,1606.9 425.4,1611.8 426.4,1617.0 426.6,1622.3 428.3,1628.0 431.0,1633.3 432.9,1638.1 434.4,1643.0"/>
<polyline points="319.7,842.3 325.2,842.8 330.5,844.0 335.5,846.7 341.1,846.1 346.4,847.6 351.7,847.1 357.0,845.8 362.3,845.1 367.8,845.5 373.2,845.1 378.3,842.7 383.7,842.3"/>
<polyline points="482.3,821.0 483.0,827.2 481.7,833.4 482.3,839.7 479.6,844.8 476.6,849.7 471.4,853.0 468.9,858.3 465.9,862.7 461.9,866.3 459.5,871.2 455.3,874.8 452.9,879.6"/>
<polyline points="698.1,821.0 698.2,826.3 698.9,831.7 699.3,837.0 697.9,842.3 697.7,847.6 697.0,853.0 699.1,858.3 697.8,863.6 698.4,869.0 698.1,874.3 696.6,879.1 696.0,884.2 694.3,889.0 692.2,893.6 689.7,898.2 690.3,903.6 687.9,908.2 685.7,912.8 683.8,917.5 684.3,923.0 682.1,927.6 684.8,932.6 684.5,938.6 686.2,944.0 689.2,948.9 692.1,953.9 692.7,959.5 694.4,965.4 698.3,970.1 699.8,976.0 703.4,980.9 707.5,984.3 711.4,987.9 716.7,989.7 720.0,994.2 724.7,996.8 729.8,994.4 735.3,993.1 741.0,992.4 746.3,990.6 751.1,987.2 756.7,986.2 761.8,983.7 767.3,982.4 772.7,980.9 777.5,982.7 782.5,984.1 787.7,985.3 792.4,987.4 796.9,990.3 802.0,991.5"/>
<polyline points="703.4,980.9 698.0,980.2 692.8,982.8 687.4,981.8 682.0,981.7 676.8,984.0 671.4,982.3 666.1,983.5 663.7,988.4 659.5,991.9 656.4,996.2 653.0,1000.4 650.1,1004.8 644.8,1005.0 639.4,1004.4 634.1,1003.6 628.8,1003.7 623.5,1002.8 618.1,1003.0 612.8,1002.7 607.5,1002.2 603.1,1005.0 597.8,1005.1 593.1,1007.0 588.5,1009.2 583.3,1009.5 578.5,1011.1 573.9,1013.5 569.4,1015.8 564.3,1016.6 559.5,1018.2 556.4,1022.7 552.6,1026.5 548.2,1029.7 545.0,1034.1 540.6,1037.3 536.7,1041.0 532.9,1044.8 530.8,1050.0 526.5,1053.7 524.6,1059.1 520.2,1062.7 517.1,1067.2 514.6,1072.2 511.6,1076.8 512.7,1082.8 511.6,1088.8 511.9,1094.8 511.6,1100.8 503.6,1100.8"/>
<polyline points="317.1,1223.3 321.5,1226.2 327.2,1226.0 331.4,1229.5 336.2,1231.6 341.3,1232.8 346.4,1234.0 351.3,1237.4 357.4,1238.6 361.8,1243.1 367.7,1244.6 373.0,1247.3 378.1,1249.6 383.4,1250.6 389.2,1249.9 394.2,1252.6 399.4,1254.1 405.2,1253.0 410.3,1255.3 415.2,1253.8 420.4,1253.7 425.0,1251.0 430.3,1251.7 434.9,1249.0 440.2,1249.2 445.0,1247.3 449.5,1249.9 452.9,1254.0 456.2,1258.1 461.4,1260.0 465.3,1263.5 468.9,1267.3 473.2,1270.3 476.9,1273.9 481.7,1270.2 487.2,1267.9 492.5,1265.2 498.2,1263.3"/>
<polyline points="508.9,1305.9 514.2,1303.5 518.5,1299.6 523.5,1296.8 527.5,1292.6"/>
<polyline points="274.4,1327.2 277.2,1332.3 277.7,1338.2 281.4,1342.9 282.4,1348.5 287.2,1351.8 291.8,1355.2 297.0,1357.8 301.1,1362.1 306.4,1364.5 310.7,1367.7 314.9,1370.7 318.8,1374.3 324.3,1375.7 327.3,1380.6 332.2,1382.8 336.9,1385.3 341.0,1388.5 346.3,1389.6 351.7,1388.6 356.9,1390.8 362.3,1390.0 367.7,1389.8 373.0,1391.2 378.4,1390.7 383.7,1391.2 388.4,1393.5 391.7,1397.8 396.9,1399.4 399.9,1404.0 405.0,1405.9 408.6,1409.7 413.0,1412.5"/>
<polyline points="943.2,821.0 944.8,825.9 948.4,829.6 950.8,834.0 954.3,837.8 956.5,842.3 955.7,848.1 953.7,853.4 951.4,858.6 948.5,863.6 945.6,868.8 943.2,874.3 943.7,879.6 943.8,884.9 943.1,890.3 945.4,895.5 945.4,900.9 944.6,906.3 946.5,911.5 946.9,916.8 945.9,922.2 940.8,926.1 935.8,930.2 929.9,932.9 924.7,935.3 919.5,937.6 913.8,938.7 908.6,940.9 904.8,945.2 902.1,950.3 897.9,954.2 893.7,957.3 890.0,960.9 886.5,964.9 881.9,967.5 877.2,970.0 874.4,974.7 870.5,978.2 865.9,980.9 862.7,986.2 857.7,990.0 853.2,994.2 850.0,999.5 843.5,1000.6 837.6,1003.3 831.3,1004.8 826.2,1003.2 821.0,1001.6 816.8,997.8 811.8,995.8 806.7,994.1 802.0,991.5"/>
<polyline points="948.5,863.6 953.6,861.8 958.3,859.1 963.7,858.0 968.3,855.3 972.7,851.9 977.8,850.3 982.9,848.6 986.4,844.0 991.6,842.4 996.0,839.4 1000.3,836.4 1004.7,833.3 1009.8,831.7 1015.0,830.8 1019.3,827.4 1024.7,827.2 1030.0,826.7 1034.3,823.2 1039.3,821.8 1044.5,821.0"/>
<polyline points="908.6,943.6 913.9,944.6 919.2,945.0 924.5,946.1 929.8,947.3 935.3,946.4 940.6,947.4 945.9,948.1 951.4,948.2 956.4,951.1 961.8,951.6 967.2,951.6 972.4,953.4 978.2,953.0 983.0,956.4 988.4,957.5 993.9,958.1 999.2,959.5 1003.7,961.9 1008.7,963.0 1013.6,964.2 1018.5,965.7 1023.1,967.8 1028.0,969.1 1032.5,971.6 1036.8,974.4 1041.8,975.5 1046.4,977.8 1051.0,979.9 1055.8,981.4 1061.0,982.1 1065.4,984.5 1070.3,986.0 1074.7,988.7 1079.7,989.8 1084.4,991.5 1090.0,993.6 1094.9,997.2 1099.9,1000.6 1106.1,1001.5 1111.1,1004.8 1114.7,1009.3 1120.4,1011.4 1124.3,1015.6 1128.6,1019.2 1132.4,1023.5"/>
<polyline points="847.3,1002.2 846.7,1007.5 846.1,1012.8 846.7,1018.2 847.3,1023.5 851.4,1027.5 854.0,1032.7 858.8,1036.0 862.7,1040.1 865.9,1044.8 868.3,1049.7 872.1,1053.5 875.1,1057.9 878.4,1062.1 881.9,1066.1 886.8,1069.4 892.6,1070.3 897.6,1073.3 903.1,1075.1 908.6,1076.8 913.7,1079.0 919.3,1079.3 924.4,1081.3 929.8,1082.3 935.3,1083.0 940.5,1084.8 946.1,1085.7 951.1,1088.3 956.9,1088.5 961.6,1092.2 967.2,1092.8 972.2,1094.2 976.9,1096.2 981.4,1098.7 985.0,1102.9 990.2,1103.8 995.0,1105.6 999.2,1108.8 1004.8,1109.2 1010.2,1110.8 1015.0,1114.0 1020.4,1115.5 1025.8,1116.7"/>
<polyline points="1374.8,898.3 1378.9,901.4 1383.2,904.1 1388.4,905.3 1392.0,909.1 1396.7,911.3 1400.4,915.0 1404.7,917.6 1409.5,919.6 1411.3,924.7 1415.8,928.3 1416.6,934.0 1420.1,938.2 1421.9,943.6 1424.5,948.6 1429.0,952.4 1431.5,957.4 1434.3,962.2 1436.1,967.5 1440.9,969.9 1443.5,974.9 1447.6,978.2 1452.1,980.9 1457.4,982.3 1462.6,983.8 1468.0,984.4 1473.5,984.6 1478.8,986.2 1483.9,984.4 1489.3,983.6 1494.8,984.5 1500.0,982.2 1505.3,981.7 1510.7,981.2 1515.9,979.4 1521.4,979.8 1526.9,980.7 1532.2,982.2 1537.2,984.7 1542.8,985.3 1548.2,986.7 1553.0,989.8 1558.7,990.1 1564.0,991.5 1564.9,997.1 1567.3,1002.3 1569.3,1007.5 1573.8,1010.2 1576.6,1014.5 1580.1,1018.0 1583.1,1022.2 1587.4,1025.0 1590.7,1028.8 1597.5,1026.7 1604.0,1023.5"/>
<polyline points="1598.7,1034.2 1597.0,1039.5 1596.2,1045.0 1593.0,1049.9 1593.3,1055.8 1590.7,1060.8 1586.7,1064.3 1584.7,1069.3 1581.7,1073.6 1577.9,1077.3 1573.5,1080.3 1569.7,1084.0 1568.3,1089.6 1564.0,1092.8 1558.7,1095.5 1553.4,1098.1 1547.7,1100.1 1543.1,1104.2 1537.4,1106.1 1533.1,1108.8 1529.1,1111.8 1524.1,1113.4 1520.7,1117.3 1516.1,1119.4 1511.2,1121.1 1507.8,1125.2 1503.7,1128.0 1498.7,1129.6 1494.7,1132.7"/>
<polyline points="802.0,1545.7 802.9,1540.4 802.8,1534.9 805.0,1529.8 804.5,1524.2 807.2,1519.2 807.3,1513.7 807.8,1508.4 808.1,1503.1 807.7,1497.8 807.0,1492.4 807.1,1487.1 807.1,1481.8 808.3,1476.4 807.3,1471.1 808.4,1465.9 812.4,1462.0 812.4,1456.4 814.9,1451.9 817.1,1447.2 820.7,1443.1 821.8,1438.0 823.6,1433.1 826.0,1428.5 828.3,1423.4 828.0,1417.7 829.9,1412.5 831.4,1407.2 833.3,1402.0 834.0,1396.5 838.9,1392.5 843.1,1387.9 847.3,1383.2 852.2,1381.3 857.2,1379.8 862.1,1377.9 867.7,1378.1 872.6,1376.2 877.7,1374.9 882.3,1372.0 887.5,1371.2 892.6,1369.9 898.0,1369.8 903.3,1368.5 908.4,1366.6 913.9,1366.7 919.4,1367.0 924.5,1364.6 929.9,1364.5 935.4,1364.7 940.6,1366.0 945.8,1368.1 951.0,1369.4 956.7,1368.6 962.0,1369.7 967.3,1370.9 972.5,1372.5"/>
<polyline points="1268.3,1292.6 1272.4,1295.5 1275.9,1299.2 1280.4,1301.7 1284.0,1305.3 1288.0,1308.3 1290.6,1313.1 1294.8,1315.8 1299.7,1317.9 1302.9,1321.9 1305.5,1327.9 1310.9,1332.0 1313.6,1337.9 1315.6,1342.7 1315.9,1348.1 1318.2,1352.8 1320.1,1357.6 1322.6,1362.3 1325.0,1366.9 1325.7,1372.2 1328.7,1376.6 1330.3,1381.6 1331.6,1386.6 1334.2,1391.2 1334.9,1396.5 1336.9,1401.2 1337.7,1406.2 1339.7,1410.9 1342.0,1415.5 1343.4,1420.3 1345.6,1424.9 1348.2,1429.3 1348.8,1434.5 1350.9,1439.1 1354.8,1442.8 1358.0,1447.2 1361.5,1451.3 1366.2,1454.2 1369.8,1458.3 1373.2,1462.4 1377.5,1465.8 1381.1,1469.6 1385.0,1473.3 1387.5,1478.2 1390.6,1482.4 1394.3,1486.2 1397.9,1490.1 1401.1,1494.4 1404.9,1498.1 1408.4,1502.0 1412.1,1505.7 1418.0,1506.2 1423.9,1506.3 1429.7,1507.7 1435.7,1506.8 1441.5,1508.4 1446.7,1507.1 1452.3,1507.0 1457.5,1505.8 1462.8,1504.5 1468.1,1503.1 1473.3,1501.4 1478.7,1500.8 1484.1,1499.8 1489.5,1499.1 1494.7,1497.8 1496.3,1492.4 1498.7,1487.2 1500.1,1481.8 1505.9,1480.1 1510.4,1475.7 1516.2,1474.1 1521.4,1471.1 1526.4,1470.7 1531.1,1468.6 1536.0,1467.8 1541.2,1467.9 1545.5,1464.4 1550.7,1464.6 1555.4,1462.5 1560.6,1462.9 1565.6,1462.2 1570.2,1460.1 1574.9,1457.9 1580.0,1457.8 1588.0,1463.1 1589.6,1468.5 1591.4,1473.8 1593.3,1479.1 1598.4,1482.3 1604.0,1484.4"/>
<polyline points="1521.4,1471.1 1520.7,1476.4 1519.7,1481.7 1518.5,1487.0 1518.7,1492.4 1518.3,1497.8 1516.2,1502.9 1517.5,1508.5 1516.1,1513.7 1511.8,1516.7 1508.2,1520.6 1503.6,1523.2 1500.7,1527.8 1495.3,1529.4 1492.3,1534.0 1488.8,1537.9 1484.1,1540.4 1479.7,1543.6 1474.9,1545.9 1470.7,1549.5 1465.5,1551.2 1460.9,1553.9 1455.9,1555.9 1451.6,1559.4 1446.8,1561.7 1441.6,1563.3 1436.3,1564.3 1430.7,1564.0 1425.3,1564.5 1420.1,1566.5 1414.9,1568.2 1409.3,1567.7 1404.2,1569.7 1399.0,1571.2 1393.7,1572.3 1388.2,1572.4 1383.2,1574.0 1378.5,1576.3 1374.0,1579.0 1369.6,1581.8 1364.8,1583.9 1360.5,1587.0 1355.0,1587.6 1350.9,1591.0 1345.4,1589.8 1340.3,1587.5 1335.1,1585.4 1329.8,1583.8 1324.2,1583.0 1318.9,1584.2 1313.7,1585.7 1308.2,1586.1 1303.1,1588.2 1297.6,1588.3 1292.3,1586.9 1286.9,1587.7 1281.7,1585.8 1276.2,1586.8 1270.9,1585.7"/>
<polyline points="1542.7,1375.2 1544.3,1380.4 1546.0,1385.7 1546.9,1391.1 1548.0,1396.5 1547.8,1402.0 1547.2,1407.4 1544.3,1412.4 1544.3,1417.9 1542.7,1423.2 1548.0,1428.5 1552.4,1425.9 1557.2,1424.0 1562.0,1422.4 1566.6,1420.3 1571.5,1418.8 1576.2,1416.9 1580.5,1414.2 1585.8,1413.5 1590.4,1411.3 1594.2,1407.4 1599.7,1407.3 1604.0,1404.5"/>
<polyline points="1063.1,1620.3 1060.3,1625.3 1058.9,1630.7 1057.8,1636.3 1063.4,1637.4 1068.1,1641.0 1073.8,1642.2"/>
</g>
</svg>

<div class="t" style="left:2551px;top:293px;font-size:23px;line-height:30px;letter-spacing:0.3px;">Processing Toolbox</div>
<div class="a" style="left:2543px;top:390px;width:1023px;height:47px;background:#fff;border:2px solid #b9b9b9;border-bottom:none;border-radius:5px 0 0 0;box-sizing:border-box;"></div>
<svg style="left:2558px;top:398px" width="30" height="30" viewBox="0 0 30 30"><circle cx="11.7" cy="12.4" r="8.2" fill="none" stroke="#8a8a8a" stroke-width="2.2"/><path d="M17.6,18.4 L25,25" stroke="#8a8a8a" stroke-width="2.8" stroke-linecap="round"/></svg>
<div class="t" style="left:2601px;top:394px;color:#1e1e1e;">rasterstr</div>
<svg style="left:3520px;top:400px" width="34" height="22" viewBox="0 0 34 22"><path d="M9,1 L32,1 Q33,1 33,2 L33,20 Q33,21 32,21 L9,21 L1,11 Z" fill="#7d7d7d"/><path d="M15,5.5 L25,16.5 M25,5.5 L15,16.5" stroke="#fff" stroke-width="2.6" stroke-linecap="round"/></svg>
<div class="a" style="left:2542px;top:435px;width:1026px;height:1682px;background:#fff;border-left:1.5px solid #b4b4b4;border-top:2px solid #b4b4b4;border-bottom:2px solid #b9b9b9;box-sizing:border-box;"></div>
<div class="a" style="left:2545px;top:542px;width:1023px;height:35px;background:#dcdcdc;"></div>
<div class="arrR" style="left:2560px;top:448px;border-left:8px solid #5a5a5a;border-top:7.7px solid transparent;border-bottom:7.7px solid transparent;"></div>
<svg style="left:2590px;top:440px" width="32" height="32" viewBox="0 0 32 32"><circle cx="16" cy="15.8" r="14" fill="#f0f1f0" stroke="#7a7a7a" stroke-width="1.8"/><path d="M15,6 L15,16 L21.5,20" fill="none" stroke="#444" stroke-width="1.3"/></svg>
<div class="t" style="left:2635px;top:438px;">Recently used</div>
<div class="a" style="left:2556px;top:488px;width:0;height:0;border-left:8px solid transparent;border-right:8px solid transparent;border-top:8px solid #5a5a5a;"></div>
<svg style="left:2591px;top:477px" width="26" height="31" viewBox="0 0 26 31"><path d="M12.5,1 L24.5,7.3 L24.3,23 L12.5,29.5 L0.7,23 L0.7,7.3 Z" fill="#fff" stroke="#555" stroke-width="1.1" stroke-linejoin="round"/><path d="M2.5,8.5 L7,11 M12.5,15 L23.5,8.5 M12.5,15 L12.5,28.5" fill="none" stroke="#444" stroke-width="1.1"/></svg>
<div class="t" style="left:2633px;top:474px;">WhiteboxTools</div>
<div class="a" style="left:2596px;top:522px;width:0;height:0;border-left:8px solid transparent;border-right:8px solid transparent;border-top:8px solid #5a5a5a;"></div>
<div class="t" style="left:2631px;top:508px;">Stream Network Analysis</div>
<svg style="left:2671px;top:545px" width="26" height="31" viewBox="0 0 26 31"><path d="M12.5,1 L24.5,7.3 L24.3,23 L12.5,29.5 L0.7,23 L0.7,7.3 Z" fill="#fff" stroke="#555" stroke-width="1.1" stroke-linejoin="round"/><path d="M2.5,8.5 L7,11 M12.5,15 L23.5,8.5 M12.5,15 L12.5,28.5" fill="none" stroke="#444" stroke-width="1.1"/></svg>
<div class="t" style="left:2713px;top:542px;letter-spacing:0.9px;color:#111;">RasterStreamsToVector</div>
<div class="a" style="left:2543px;top:2119px;width:207px;height:48px;background:#e3e3e3;border:2px solid #bababa;border-top:none;border-radius:0 0 8px 8px;box-sizing:border-box;"></div>
<div class="a" style="left:2749px;top:2117px;width:287px;height:54px;background:linear-gradient(#fbfbfb,#f7f7f7);border:2px solid #bababa;border-top:none;border-radius:0 0 8px 8px;box-sizing:border-box;"></div>
<div class="t" style="left:2567px;top:2128px;font-size:26.5px;">Layer Styling</div>
<div class="t" style="left:2773px;top:2130px;font-size:27px;letter-spacing:0px;">Processing Toolbox</div>
<div class="a" style="left:2534px;top:1215px;width:5px;height:36px;background-image:radial-gradient(circle,#b0b0b0 1px,transparent 1.3px);background-size:5px 6px;"></div>
<svg style="left:775px;top:297px" width="52" height="22" viewBox="0 0 52 22"><rect x="1" y="1" width="20" height="20" rx="3" fill="none" stroke="#7c7c7c" stroke-width="1.6"/><path d="M8,4.5 L17.5,4.5 L17.5,13.5 L13.5,13.5 M8,4.5 L8,8.5" fill="none" stroke="#6e6e6e" stroke-width="1.6"/><rect x="4.5" y="8.5" width="9" height="9" fill="none" stroke="#6e6e6e" stroke-width="1.6"/><rect x="29" y="1" width="21" height="20" rx="3" fill="none" stroke="#7c7c7c" stroke-width="1.6"/><path d="M34,5 L45,16 M45,5 L34,16" stroke="#666" stroke-width="3.2"/></svg>
<svg style="left:775px;top:1247px" width="52" height="22" viewBox="0 0 52 22"><rect x="1" y="1" width="20" height="20" rx="3" fill="none" stroke="#7c7c7c" stroke-width="1.6"/><path d="M8,4.5 L17.5,4.5 L17.5,13.5 L13.5,13.5 M8,4.5 L8,8.5" fill="none" stroke="#6e6e6e" stroke-width="1.6"/><rect x="4.5" y="8.5" width="9" height="9" fill="none" stroke="#6e6e6e" stroke-width="1.6"/><rect x="29" y="1" width="21" height="20" rx="3" fill="none" stroke="#7c7c7c" stroke-width="1.6"/><path d="M34,5 L45,16 M45,5 L34,16" stroke="#666" stroke-width="3.2"/></svg>
<svg style="left:3513px;top:297px" width="52" height="22" viewBox="0 0 52 22"><rect x="1" y="1" width="20" height="20" rx="3" fill="none" stroke="#7c7c7c" stroke-width="1.6"/><path d="M8,4.5 L17.5,4.5 L17.5,13.5 L13.5,13.5 M8,4.5 L8,8.5" fill="none" stroke="#6e6e6e" stroke-width="1.6"/><rect x="4.5" y="8.5" width="9" height="9" fill="none" stroke="#6e6e6e" stroke-width="1.6"/><rect x="29" y="1" width="21" height="20" rx="3" fill="none" stroke="#7c7c7c" stroke-width="1.6"/><path d="M34,5 L45,16 M45,5 L34,16" stroke="#666" stroke-width="3.2"/></svg>
<div class="t" style="left:1835px;top:2188px;font-size:23px;">Coordinate</div>
<div class="a" style="left:1957px;top:2183px;width:210px;height:43px;background:#fff;border:2px solid #b5b5b5;border-radius:4px;box-sizing:border-box;"></div>
<div class="t" style="left:1970px;top:2188px;font-size:23px;letter-spacing:0.3px;">631316,4851894</div>
<div class="t" style="left:2234px;top:2188px;font-size:23px;">Scale</div>
<div class="a" style="left:2299px;top:2181px;width:184px;height:47px;background:#fff;border:2px solid #b5b5b5;border-radius:5px;box-sizing:border-box;"></div>
<div class="a" style="left:2441px;top:2183px;width:40px;height:43px;background:linear-gradient(#fdfdfd,#f3f3f3);border-left:1.5px solid #c8c8c8;box-sizing:border-box;"></div>
<div class="a" style="left:2453px;top:2200px;width:0;height:0;border-left:8px solid transparent;border-right:8px solid transparent;border-top:8px solid #5a5a5a;"></div>
<div class="t" style="left:2306px;top:2188px;font-size:23px;color:#333;letter-spacing:0.3px;">1:39449</div>
<svg style="left:2507px;top:2189px" width="26" height="32" viewBox="0 0 26 32"><path d="M6,14 L6,9 Q6,2 13,2 Q20,2 20,9 L20,14" fill="none" stroke="#7a7a7a" stroke-width="2.6"/><rect x="2" y="13" width="22" height="17" rx="3" fill="#6f6f6f"/></svg>
<div class="t" style="left:2551px;top:2188px;font-size:23px;">Magnifier</div>
<div class="a" style="left:2657px;top:2183px;width:185px;height:43px;background:#fff;border:2px solid #b5b5b5;border-radius:5px;box-sizing:border-box;"></div><div class="a" style="left:2810px;top:2185px;width:1.5px;height:39px;background:#c8c8c8;"></div><div class="a" style="left:2819px;top:2192px;width:0;height:0;border-left:8px solid transparent;border-right:8px solid transparent;border-bottom:8px solid #5a5a5a;"></div><div class="a" style="left:2819px;top:2209px;width:0;height:0;border-left:8px solid transparent;border-right:8px solid transparent;border-top:8px solid #5a5a5a;"></div><div class="t" style="left:2668px;top:2188px;font-size:23px;letter-spacing:0.3px;">100%</div>
<div class="t" style="left:2861px;top:2188px;font-size:23px;">Rotation</div>
<div class="a" style="left:2967px;top:2183px;width:184px;height:43px;background:#fff;border:2px solid #b5b5b5;border-radius:5px;box-sizing:border-box;"></div><div class="a" style="left:3119px;top:2185px;width:1.5px;height:39px;background:#c8c8c8;"></div><div class="a" style="left:3128px;top:2192px;width:0;height:0;border-left:8px solid transparent;border-right:8px solid transparent;border-bottom:8px solid #5a5a5a;"></div><div class="a" style="left:3128px;top:2209px;width:0;height:0;border-left:8px solid transparent;border-right:8px solid transparent;border-top:8px solid #5a5a5a;"></div><div class="t" style="left:2978px;top:2188px;font-size:23px;letter-spacing:0.3px;">0.0 °</div>
<div class="cb" style="left:3165px;top:2190px;width:27px;height:28px;"></div>
<svg style="left:3165px;top:2190px" width="27" height="28" viewBox="0 0 27 28"><path d="M7,14 L11.5,21 L20,6.5" fill="none" stroke="#1a1a1a" stroke-width="3" stroke-linecap="round" stroke-linejoin="round"/></svg>
<div class="t" style="left:3203px;top:2188px;font-size:23px;">Render</div>
<svg style="left:3309px;top:2190px" width="32" height="30" viewBox="0 0 32 30"><ellipse cx="16" cy="15" rx="14" ry="13" fill="none" stroke="#777" stroke-width="1.8"/><ellipse cx="16" cy="15" rx="6" ry="13" fill="none" stroke="#777" stroke-width="1.6"/><path d="M2,15 L30,15 M4,8 L28,8 M4,22 L28,22" stroke="#777" stroke-width="1.6"/></svg>
<div class="t" style="left:3345px;top:2188px;font-size:23px;letter-spacing:0px;color:#1a1a1a;">EPSG:26915</div>
<svg style="left:3520px;top:2188px" width="36" height="32" viewBox="0 0 36 32"><path d="M18,2 C28,2 34,8 34,14.5 C34,21 28,27 18,27 C16,27 14,26.8 12.5,26.3 L4,31 L7,23.5 C3.5,21 2,18 2,14.5 C2,8 8,2 18,2 Z" fill="#6a6a6a"/><circle cx="11" cy="14.5" r="2.4" fill="#fff"/><circle cx="18" cy="14.5" r="2.4" fill="#fff"/><circle cx="25" cy="14.5" r="2.4" fill="#fff"/></svg>
<svg class="mouseicon" style="left:2170px;top:2180px" width="50" height="50" viewBox="0 0 50 50"><path d="M29,17 L31,14 M33,13 L35,11" stroke="#000" stroke-width="2.4" stroke-linecap="round"/><path d="M8,28 L10,26" stroke="#000" stroke-width="2.4" stroke-linecap="round"/><g transform="rotate(-35 22 23)"><rect x="12.5" y="7" width="19" height="31" rx="9.5" fill="#fff" stroke="#000" stroke-width="2.3"/><path d="M12.5,21 L31.5,21" stroke="#000" stroke-width="1.8"/><rect x="20.5" y="10" width="3" height="8" rx="1.5" fill="#222"/></g><circle cx="25" cy="31" r="2.6" fill="none" stroke="#000" stroke-width="1.6"/></svg>
<svg style="left:0;top:0;position:absolute" width="3680" height="2382">
<rect x="122" y="154" width="2.2" height="2.2" fill="#a9a9a9"/><rect x="122" y="160" width="2.2" height="2.2" fill="#a9a9a9"/><rect x="122" y="166" width="2.2" height="2.2" fill="#a9a9a9"/><rect x="122" y="172" width="2.2" height="2.2" fill="#a9a9a9"/><rect x="122" y="178" width="2.2" height="2.2" fill="#a9a9a9"/><rect x="122" y="184" width="2.2" height="2.2" fill="#a9a9a9"/><rect x="128" y="154" width="2.2" height="2.2" fill="#a9a9a9"/><rect x="128" y="160" width="2.2" height="2.2" fill="#a9a9a9"/><rect x="128" y="166" width="2.2" height="2.2" fill="#a9a9a9"/><rect x="128" y="172" width="2.2" height="2.2" fill="#a9a9a9"/><rect x="128" y="178" width="2.2" height="2.2" fill="#a9a9a9"/><rect x="128" y="184" width="2.2" height="2.2" fill="#a9a9a9"/>
<rect x="550" y="154" width="2.2" height="2.2" fill="#a9a9a9"/><rect x="550" y="160" width="2.2" height="2.2" fill="#a9a9a9"/><rect x="550" y="166" width="2.2" height="2.2" fill="#a9a9a9"/><rect x="550" y="172" width="2.2" height="2.2" fill="#a9a9a9"/><rect x="550" y="178" width="2.2" height="2.2" fill="#a9a9a9"/><rect x="550" y="184" width="2.2" height="2.2" fill="#a9a9a9"/><rect x="556" y="154" width="2.2" height="2.2" fill="#a9a9a9"/><rect x="556" y="160" width="2.2" height="2.2" fill="#a9a9a9"/><rect x="556" y="166" width="2.2" height="2.2" fill="#a9a9a9"/><rect x="556" y="172" width="2.2" height="2.2" fill="#a9a9a9"/><rect x="556" y="178" width="2.2" height="2.2" fill="#a9a9a9"/><rect x="556" y="184" width="2.2" height="2.2" fill="#a9a9a9"/>
<rect x="1638" y="154" width="2.2" height="2.2" fill="#a9a9a9"/><rect x="1638" y="160" width="2.2" height="2.2" fill="#a9a9a9"/><rect x="1638" y="166" width="2.2" height="2.2" fill="#a9a9a9"/><rect x="1638" y="172" width="2.2" height="2.2" fill="#a9a9a9"/><rect x="1638" y="178" width="2.2" height="2.2" fill="#a9a9a9"/><rect x="1638" y="184" width="2.2" height="2.2" fill="#a9a9a9"/><rect x="1644" y="154" width="2.2" height="2.2" fill="#a9a9a9"/><rect x="1644" y="160" width="2.2" height="2.2" fill="#a9a9a9"/><rect x="1644" y="166" width="2.2" height="2.2" fill="#a9a9a9"/><rect x="1644" y="172" width="2.2" height="2.2" fill="#a9a9a9"/><rect x="1644" y="178" width="2.2" height="2.2" fill="#a9a9a9"/><rect x="1644" y="184" width="2.2" height="2.2" fill="#a9a9a9"/>
<rect x="2006" y="154" width="2.2" height="2.2" fill="#a9a9a9"/><rect x="2006" y="160" width="2.2" height="2.2" fill="#a9a9a9"/><rect x="2006" y="166" width="2.2" height="2.2" fill="#a9a9a9"/><rect x="2006" y="172" width="2.2" height="2.2" fill="#a9a9a9"/><rect x="2006" y="178" width="2.2" height="2.2" fill="#a9a9a9"/><rect x="2006" y="184" width="2.2" height="2.2" fill="#a9a9a9"/><rect x="2012" y="154" width="2.2" height="2.2" fill="#a9a9a9"/><rect x="2012" y="160" width="2.2" height="2.2" fill="#a9a9a9"/><rect x="2012" y="166" width="2.2" height="2.2" fill="#a9a9a9"/><rect x="2012" y="172" width="2.2" height="2.2" fill="#a9a9a9"/><rect x="2012" y="178" width="2.2" height="2.2" fill="#a9a9a9"/><rect x="2012" y="184" width="2.2" height="2.2" fill="#a9a9a9"/>
<path d="M155,149 L175,149 L186,160 L186,191 L155,191 Z" fill="#fff" stroke="#707070" stroke-width="2"/><path d="M175,149 L175,160 L186,160" fill="#e8e8e8" stroke="#707070" stroke-width="2"/>
<path d="M214,153 L228,153 L228,157 L252,157 L252,163 L219,163 L214,170 Z" fill="#f8d24a" stroke="#c9a53a" stroke-width="1.6" stroke-linejoin="round"/><path d="M214,153 L214,187 L252,187 L258,163 L219,163 Z" fill="#fdd94f" stroke="#c9a53a" stroke-width="1.6" stroke-linejoin="round"/>
<rect x="283" y="148.5" width="39" height="41.5" rx="4" fill="#6896c8" stroke="#3d5f87" stroke-width="1.6"/><rect x="289" y="150" width="28" height="18" rx="1.5" fill="#f0f0f0" stroke="#3d5f87" stroke-width="1"/><path d="M292,155 L314,155 M292,159 L314,159 M292,163 L314,163" stroke="#555" stroke-width="1.5"/><rect x="290" y="175" width="24" height="14" fill="#e8e8e8" stroke="#3d5f87" stroke-width="1"/><rect x="293" y="178" width="6" height="8" fill="#3d5a80"/>
<path d="M346,150 L380,150 L389,159 L389,189 L346,189 Z" fill="#fff" stroke="#707070" stroke-width="1.8"/><rect x="353" y="154" width="34" height="31" fill="none" stroke="#c4d4f0" stroke-width="2"/><path d="M350,152 L370,152 L370,163 L357,163 L357,191 L350,191 Z" fill="#fae37a" stroke="#c9a53a" stroke-width="1.4"/>
<rect x="370" y="172" width="22" height="22" rx="4" fill="#c9a20a"/><rect x="370" y="172" width="22" height="11.0" rx="4" fill="#ffffff" opacity="0.18"/><rect x="379.6" y="175.0" width="2.8" height="16" fill="#fff" transform="rotate(0 381.0 183.0)"/><rect x="379.6" y="175.0" width="2.8" height="16" fill="#fff" transform="rotate(60 381.0 183.0)"/><rect x="379.6" y="175.0" width="2.8" height="16" fill="#fff" transform="rotate(120 381.0 183.0)"/><circle cx="381.0" cy="183.0" r="4.5" fill="#fff"/><circle cx="381.0" cy="183.0" r="2" fill="#c9a20a"/>
<path d="M412,150 L446,150 L456,160 L456,189 L412,189 Z" fill="#fff" stroke="#707070" stroke-width="1.8"/><rect x="417" y="155" width="34" height="29" fill="none" stroke="#c4d4f0" stroke-width="2"/>
<g transform="translate(433,172) rotate(-45) scale(1.0)"><rect x="-3.6" y="2" width="7.2" height="24" rx="3.6" fill="#f0d878" stroke="#2a2a2a" stroke-width="1.8"/><rect x="-3.6" y="2" width="7.2" height="5" fill="#333"/><ellipse cx="0" cy="22.2" rx="2" ry="1.6" fill="#fff" stroke="#333" stroke-width="1.2"/><path d="M-6.5,-9 A8.6,8.6 0 1,0 6.5,-9 L3.6,-9 A3.6,3.6 0 0,1 -3.6,-9 Z" fill="#f2f3f2" stroke="#2a2a2a" stroke-width="1.6" stroke-linejoin="round"/></g>
<circle cx="489" cy="159" r="8.5" fill="#d8682f" stroke="#8a3a18" stroke-width="1.2"/><path d="M505,165 L516,153" stroke="#3d5f87" stroke-width="5" stroke-linecap="round"/><path d="M505,165 L516,153" stroke="#6896c8" stroke-width="3" stroke-linecap="round"/><rect x="481" y="172.5" width="16.5" height="16.5" fill="#8ab58a" stroke="#4a8a4a" stroke-width="1.5"/><text x="505" y="188" font-family="Liberation Sans" font-size="19" fill="#333">a</text>
<path d="M592,191 L588,182 L582,171 Q580,166 584,165 Q587,165 590,170 L592,173 L592,152 Q592,148 595,148 Q598,148 598,152 L598,166 L598,151 Q598,148 601,148 Q604,148 604,151 L604,166 L604,154 Q604,151 607,151 Q610,151 610,154 L610,167 L610,158 Q610,155 613,155 Q616,155 616,158 L616,178 Q616,186 611,191 Z" fill="#fff" stroke="#111" stroke-width="2" stroke-linejoin="round"/>
<rect x="644" y="150.5" width="28" height="27" fill="#fce650" stroke="#c9a53a" stroke-width="1.5"/>
<path d="M664.5,147 L674.5,157 L668.5,157 L668.5,165 L660.5,165 L660.5,157 L654.5,157 Z" fill="#6896c8" stroke="#3d5f87" stroke-width="1.4" stroke-linejoin="round" transform="rotate(0 664.5 170)"/><path d="M664.5,147 L674.5,157 L668.5,157 L668.5,165 L660.5,165 L660.5,157 L654.5,157 Z" fill="#6896c8" stroke="#3d5f87" stroke-width="1.4" stroke-linejoin="round" transform="rotate(90 664.5 170)"/><path d="M664.5,147 L674.5,157 L668.5,157 L668.5,165 L660.5,165 L660.5,157 L654.5,157 Z" fill="#6896c8" stroke="#3d5f87" stroke-width="1.4" stroke-linejoin="round" transform="rotate(180 664.5 170)"/><path d="M664.5,147 L674.5,157 L668.5,157 L668.5,165 L660.5,165 L660.5,157 L654.5,157 Z" fill="#6896c8" stroke="#3d5f87" stroke-width="1.4" stroke-linejoin="round" transform="rotate(270 664.5 170)"/>
<rect x="699" y="141" width="62.5" height="60" rx="6" fill="#e0e0e0" stroke="#b3b3b3" stroke-width="2"/>
<line x1="722.9793" y1="176.0207" x2="709.5444" y2="189.4556" stroke="#333" stroke-width="8" stroke-linecap="square"/><line x1="719.4438" y1="179.55620000000002" x2="710.9586" y2="188.0414" stroke="#f2c432" stroke-width="4.2"/><line x1="722.9793" y1="176.0207" x2="719.4438" y2="179.55620000000002" stroke="#111" stroke-width="4.2"/><circle cx="735" cy="164" r="16" fill="#ececec" stroke="#666" stroke-width="2.4"/><path d="M726.2,162.4 Q727.0,154.4 734.2,153.6" fill="none" stroke="#fff" stroke-width="2.5" stroke-linecap="round" opacity="0.9"/>
<path d="M726,164 L744,164 M735,155 L735,173" stroke="#3d5f87" stroke-width="5.5" stroke-linecap="round"/><path d="M726,164 L744,164 M735,155 L735,173" stroke="#6896c8" stroke-width="3.2" stroke-linecap="round"/>
<line x1="788.9793" y1="176.0207" x2="775.5444" y2="189.4556" stroke="#333" stroke-width="8" stroke-linecap="square"/><line x1="785.4438" y1="179.55620000000002" x2="776.9586" y2="188.0414" stroke="#f2c432" stroke-width="4.2"/><line x1="788.9793" y1="176.0207" x2="785.4438" y2="179.55620000000002" stroke="#111" stroke-width="4.2"/><circle cx="801" cy="164" r="16" fill="#ececec" stroke="#666" stroke-width="2.4"/><path d="M792.2,162.4 Q793.0,154.4 800.2,153.6" fill="none" stroke="#fff" stroke-width="2.5" stroke-linecap="round" opacity="0.9"/>
<path d="M792,164 L810,164" stroke="#3d5f87" stroke-width="5.5" stroke-linecap="round"/><path d="M792,164 L810,164" stroke="#6896c8" stroke-width="3.2" stroke-linecap="round"/>
<line x1="855.6864" y1="176.3136" x2="842.2515" y2="189.7485" stroke="#333" stroke-width="8" stroke-linecap="square"/><line x1="852.1509000000001" y1="179.84910000000002" x2="843.6657" y2="188.3343" stroke="#f2c432" stroke-width="4.2"/><line x1="855.6864" y1="176.3136" x2="852.1509000000001" y2="179.84910000000002" stroke="#111" stroke-width="4.2"/><circle cx="867" cy="165" r="15" fill="#ececec" stroke="#666" stroke-width="2.4"/><path d="M858.75,163.5 Q859.5,156.0 866.25,155.25" fill="none" stroke="#fff" stroke-width="2.5" stroke-linecap="round" opacity="0.9"/>
<path d="M846,147 L860,147 L856,151 L862,157 L856,163 L850,157 L846,161 Z" fill="#6896c8" stroke="#3d5f87" stroke-width="1.4" stroke-linejoin="round" transform="rotate(0 846 147)"/>
<path d="M886,147 L900,147 L896,151 L902,157 L896,163 L890,157 L886,161 Z" fill="#6896c8" stroke="#3d5f87" stroke-width="1.4" stroke-linejoin="round" transform="rotate(90 886 147)"/>
<path d="M886,186 L900,186 L896,190 L902,196 L896,202 L890,196 L886,200 Z" fill="#6896c8" stroke="#3d5f87" stroke-width="1.4" stroke-linejoin="round" transform="rotate(180 886 186)"/>
<rect x="908" y="150" width="20" height="27.5" fill="#fce650" stroke="#c9a53a" stroke-width="1.6"/>
<line x1="921.9793" y1="175.5207" x2="908.5444" y2="188.9556" stroke="#333" stroke-width="8" stroke-linecap="square"/><line x1="918.4438" y1="179.05620000000002" x2="909.9586" y2="187.5414" stroke="#f2c432" stroke-width="4.2"/><line x1="921.9793" y1="175.5207" x2="918.4438" y2="179.05620000000002" stroke="#111" stroke-width="4.2"/><circle cx="934" cy="163.5" r="16" fill="#ececec" stroke="#666" stroke-width="2.4"/><path d="M925.2,161.9 Q926.0,153.9 933.2,153.1" fill="none" stroke="#fff" stroke-width="2.5" stroke-linecap="round" opacity="0.9"/>
<path d="M934,148 Q946,150 947,163 Q946,176 934,179 Z" fill="#e8e2c8" opacity="0.8"/>
<rect x="974" y="150.5" width="27" height="27.5" fill="#e8e8e8" stroke="#999" stroke-width="1.6"/>
<line x1="988.4793" y1="175.5207" x2="975.0444" y2="188.9556" stroke="#333" stroke-width="8" stroke-linecap="square"/><line x1="984.9438" y1="179.05620000000002" x2="976.4586" y2="187.5414" stroke="#f2c432" stroke-width="4.2"/><line x1="988.4793" y1="175.5207" x2="984.9438" y2="179.05620000000002" stroke="#111" stroke-width="4.2"/><circle cx="1000.5" cy="163.5" r="16" fill="#ececec" stroke="#666" stroke-width="2.4"/><path d="M991.7,161.9 Q992.5,153.9 999.7,153.1" fill="none" stroke="#fff" stroke-width="2.5" stroke-linecap="round" opacity="0.9"/>
<path d="M1000,148 Q1012,150 1013,163 Q1012,176 1000,179 Z" fill="#dcdcdc" opacity="0.8"/>
<rect x="1040" y="150.5" width="27" height="27.5" fill="#f0f0f0" stroke="#ddd" stroke-width="1.6"/>
<line x1="1052.9793" y1="175.5207" x2="1039.5444" y2="188.9556" stroke="#d8d8d8" stroke-width="8" stroke-linecap="square"/><line x1="1052.9793" y1="175.5207" x2="1039.5444" y2="188.9556" stroke="#ecebe4" stroke-width="4"/><circle cx="1065" cy="163.5" r="16" fill="#f2f2f2" stroke="#d0d0d0" stroke-width="2.4"/><path d="M1056.2,161.9 Q1057.0,153.9 1064.2,153.1" fill="none" stroke="#fff" stroke-width="2.5" stroke-linecap="round" opacity="0.9"/>
<text x="1053" y="171" font-family="Liberation Sans" font-weight="bold" font-size="17" fill="#d4d4d4">1:1</text>
<line x1="1118.9793" y1="176.0207" x2="1105.5444" y2="189.4556" stroke="#333" stroke-width="8" stroke-linecap="square"/><line x1="1115.4438" y1="179.55620000000002" x2="1106.9586" y2="188.0414" stroke="#f2c432" stroke-width="4.2"/><line x1="1118.9793" y1="176.0207" x2="1115.4438" y2="179.55620000000002" stroke="#111" stroke-width="4.2"/><circle cx="1131" cy="164" r="16" fill="#ececec" stroke="#666" stroke-width="2.4"/><path d="M1122.2,162.4 Q1123.0,154.4 1130.2,153.6" fill="none" stroke="#fff" stroke-width="2.5" stroke-linecap="round" opacity="0.9"/>
<rect x="1128" y="172" width="21.5" height="21.5" rx="2.5" fill="#6896c8" stroke="#2d4a6e" stroke-width="1.4"/><path d="M1143,176 L1133,183 L1143,190" fill="none" stroke="#fff" stroke-width="3.2" stroke-linecap="round" stroke-linejoin="round"/>
<line x1="1184.4793" y1="176.0207" x2="1171.0444" y2="189.4556" stroke="#d8d8d8" stroke-width="8" stroke-linecap="square"/><line x1="1184.4793" y1="176.0207" x2="1171.0444" y2="189.4556" stroke="#ecebe4" stroke-width="4"/><circle cx="1196.5" cy="164" r="16" fill="#f2f2f2" stroke="#d0d0d0" stroke-width="2.4"/><path d="M1187.7,162.4 Q1188.5,154.4 1195.7,153.6" fill="none" stroke="#fff" stroke-width="2.5" stroke-linecap="round" opacity="0.9"/>
<rect x="1194" y="172" width="21.5" height="21.5" rx="2.5" fill="#d9dcdf" stroke="#cfd2d5" stroke-width="1.4"/><path d="M1200,176 L1210,183 L1200,190" fill="none" stroke="#fff" stroke-width="3.2" stroke-linecap="round" stroke-linejoin="round"/>
<path d="M1243,150 L1277,150 L1277,189 L1245,189 Q1238,189 1238,182 L1238,154 Q1238,148 1243,148 Q1248,148 1248,154 L1248,184 Q1248,189 1243,189" fill="#e6e6e6" stroke="#8e8e8e" stroke-width="1.6"/>
<rect x="1260" y="172" width="22" height="22" rx="4" fill="#c9a20a"/><rect x="1260" y="172" width="22" height="11.0" rx="4" fill="#ffffff" opacity="0.18"/><rect x="1269.6" y="175.0" width="2.8" height="16" fill="#fff" transform="rotate(0 1271.0 183.0)"/><rect x="1269.6" y="175.0" width="2.8" height="16" fill="#fff" transform="rotate(60 1271.0 183.0)"/><rect x="1269.6" y="175.0" width="2.8" height="16" fill="#fff" transform="rotate(120 1271.0 183.0)"/><circle cx="1271.0" cy="183.0" r="4.5" fill="#fff"/><circle cx="1271.0" cy="183.0" r="2" fill="#c9a20a"/>
<path d="M1302,178 L1314,155 Q1325,150 1343,150 L1342,182 Q1325,176 1314,184 Z" fill="#e2e2e2" stroke="#9a9a9a" stroke-width="1.5"/><path d="M1310,166 Q1325,160 1342,162 M1306,174 Q1322,168 1342,171 M1322,152 L1318,182 M1333,151 L1331,180" fill="none" stroke="#a8a8a8" stroke-width="1.1"/>
<rect x="1326" y="172" width="22" height="22" rx="4" fill="#c9a20a"/><rect x="1326" y="172" width="22" height="11.0" rx="4" fill="#ffffff" opacity="0.18"/><rect x="1335.6" y="175.0" width="2.8" height="16" fill="#fff" transform="rotate(0 1337.0 183.0)"/><rect x="1335.6" y="175.0" width="2.8" height="16" fill="#fff" transform="rotate(60 1337.0 183.0)"/><rect x="1335.6" y="175.0" width="2.8" height="16" fill="#fff" transform="rotate(120 1337.0 183.0)"/><circle cx="1337.0" cy="183.0" r="4.5" fill="#fff"/><circle cx="1337.0" cy="183.0" r="2" fill="#c9a20a"/>
<path d="M1380,148 L1400,148 L1400,189 L1390,181 L1380,189 Z" fill="#6896c8" stroke="#2d4a6e" stroke-width="1.6" transform="translate(0,0)"/><path d="M1383,151 L1383,185" stroke="#a8c8ec" stroke-width="2"/>
<rect x="1392" y="172" width="22" height="22" rx="4" fill="#c9a20a"/><rect x="1392" y="172" width="22" height="11.0" rx="4" fill="#ffffff" opacity="0.18"/><rect x="1401.6" y="175.0" width="2.8" height="16" fill="#fff" transform="rotate(0 1403.0 183.0)"/><rect x="1401.6" y="175.0" width="2.8" height="16" fill="#fff" transform="rotate(60 1403.0 183.0)"/><rect x="1401.6" y="175.0" width="2.8" height="16" fill="#fff" transform="rotate(120 1403.0 183.0)"/><circle cx="1403.0" cy="183.0" r="4.5" fill="#fff"/><circle cx="1403.0" cy="183.0" r="2" fill="#c9a20a"/>
<path d="M1441,150 L1476,150 L1476,189 L1443,189 Q1436,189 1436,182 L1436,154 Q1436,148 1441,148 Q1446,148 1446,154 L1446,184 Q1446,189 1441,189" fill="#e6e6e6" stroke="#8e8e8e" stroke-width="1.6"/><path d="M1458,148 L1468,148 L1468,168 L1463,163 L1458,168 Z" fill="#6896c8" stroke="#2d4a6e" stroke-width="1.4"/>
<circle cx="1522" cy="170" r="21" fill="#eeeeee" stroke="#444" stroke-width="2.6"/>
<circle cx="1522.0" cy="153.0" r="1.5" fill="#2d4a6e"/>
<circle cx="1530.5" cy="155.3" r="1.5" fill="#6896c8"/>
<circle cx="1536.7" cy="161.5" r="1.5" fill="#6896c8"/>
<circle cx="1539.0" cy="170.0" r="1.5" fill="#2d4a6e"/>
<circle cx="1536.7" cy="178.5" r="1.5" fill="#6896c8"/>
<circle cx="1530.5" cy="184.7" r="1.5" fill="#6896c8"/>
<circle cx="1522.0" cy="187.0" r="1.5" fill="#2d4a6e"/>
<circle cx="1513.5" cy="184.7" r="1.5" fill="#6896c8"/>
<circle cx="1507.3" cy="178.5" r="1.5" fill="#6896c8"/>
<circle cx="1505.0" cy="170.0" r="1.5" fill="#2d4a6e"/>
<circle cx="1507.3" cy="161.5" r="1.5" fill="#6896c8"/>
<circle cx="1513.5" cy="155.3" r="1.5" fill="#6896c8"/>
<path d="M1522,156 L1522,170 L1531,177" fill="none" stroke="#777" stroke-width="2.2"/>
<g transform="translate(1588,170) scale(1.0)"><path d="M-19,-2 Q-18,-20 2,-19 Q12,-18 16,-12 L20,-20 L20,0 L1,-1 L9,-6 Q4,-10 -2,-10 Q-12,-9 -14,2 Z" fill="#4c86c6" stroke="#3a70b0" stroke-width="0.8"/><path d="M19,2 Q18,20 -2,19 Q-12,18 -16,12 L-20,20 L-20,0 L-1,1 L-9,6 Q-4,10 2,10 Q12,9 14,-2 Z" fill="#4c86c6" stroke="#3a70b0" stroke-width="0.8"/><path d="M-15,-4 Q-12,-15 0,-15" fill="none" stroke="#b8d4f0" stroke-width="2.5" opacity="0.8"/></g>
<rect x="1665" y="149" width="42" height="38" fill="#e8e8e8" stroke="#333" stroke-width="2" stroke-dasharray="4,3"/><rect x="1667" y="151" width="26" height="26" fill="#fce650" stroke="#c9a53a" stroke-width="1.6"/>
<path d="M1681,162 L1681,187 L1687,181 L1692,192 L1697,190 L1692,179 L1700,179 Z" fill="#fff" stroke="#111" stroke-width="1.6" stroke-linejoin="round"/>
<path d="M1722.5,167 L1737.5,167 L1730,175 Z" fill="#5a5a5a"/>
<rect x="1769" y="162.5" width="27" height="27" fill="#fce650" stroke="#c9a53a" stroke-width="1.6"/>
<path d="M1779.6,155.6 Q1774.8,150.0 1768.5,150.8 Q1760.7,152.2 1761.1,158.4 Q1761.5,163.4 1769.5,163.4 M1769.5,163.4 Q1759.4,164.0 1759.6,171.0 Q1760.3,178.0 1769.5,177.4 Q1776.8,176.9 1780.0,171.8" fill="none" stroke="#5c3a78" stroke-width="3.6" stroke-linecap="round"/>
<path d="M1812.5,167 L1827.5,167 L1820,175 Z" fill="#5a5a5a"/>
<rect x="1846" y="150.5" width="27" height="27" fill="#fce650" stroke="#c9a53a" stroke-width="1.6"/><rect x="1854" y="158" width="27" height="27.5" fill="#fce650" stroke="#c9a53a" stroke-width="1.6"/>
<rect x="1868" y="172" width="22" height="22" rx="3" fill="#d8202a"/><circle cx="1879" cy="183" r="7.5" fill="#f0a0a0" stroke="#fff" stroke-width="2"/><path d="M1874,188 L1884,178" stroke="#fff" stroke-width="2.4"/>
<path d="M1902.5,167 L1917.5,167 L1910,175 Z" fill="#5a5a5a"/>
<rect x="1936" y="150.5" width="28" height="27" fill="#fce650" stroke="#c9a53a" stroke-width="1.6"/>
<path d="M1971,191.5 L1965,179 Q1963,175 1964,172 Q1966,167 1971,167 Q1976,167 1978,172 Q1979,175 1977,179 Z" fill="#6a8eae" stroke="#4a6e8e" stroke-width="1.2"/><circle cx="1971" cy="173" r="3" fill="#fff"/>
<circle cx="2047" cy="163.5" r="16" fill="#6a9ad0" stroke="#4a78b0" stroke-width="1.5"/><text x="2040" y="175" font-family="Liberation Serif" font-style="italic" font-weight="bold" font-size="26" fill="#fff">i</text>
<path d="M2053,167 L2058,191 L2063,185 L2070,194 L2075,191 L2069,182 L2077,181 Z" fill="#fff" stroke="#111" stroke-width="1.6" stroke-linejoin="round"/>
<path d="M2100,150 L2100,189 M2140,150 L2140,189 M2100,154 L2140,154 M2100,167 L2140,167 M2100,179 L2140,179" stroke="#555" stroke-width="2"/><rect x="2098" y="187" width="44" height="5" fill="#ccc" stroke="#666" stroke-width="1.4"/>
<circle cx="2115" cy="154" r="4.4" fill="#f4a0a0" stroke="#c01818" stroke-width="1.5"/>
<circle cx="2131" cy="154" r="4.4" fill="#f4a0a0" stroke="#c01818" stroke-width="1.5"/>
<circle cx="2111" cy="167" r="4.4" fill="#b8e8b0" stroke="#3a9a3a" stroke-width="1.5"/>
<circle cx="2121" cy="167" r="4.4" fill="#b8e8b0" stroke="#3a9a3a" stroke-width="1.5"/>
<circle cx="2111" cy="179" r="4.4" fill="#b8d8f4" stroke="#2d5a8a" stroke-width="1.5"/>
<circle cx="2121" cy="179" r="4.4" fill="#b8d8f4" stroke="#2d5a8a" stroke-width="1.5"/>
<circle cx="2131" cy="179" r="4.4" fill="#b8d8f4" stroke="#2d5a8a" stroke-width="1.5"/>
<rect x="2155" y="141" width="62" height="60" rx="6" fill="#e0e0e0" stroke="#b3b3b3" stroke-width="2"/>
<path d="M2182.7,156.5 L2182.6,148.4 L2189.4,148.4 L2189.3,156.5 L2193.0,158.0 L2198.6,152.2 L2203.4,157.0 L2197.6,162.6 L2199.1,166.3 L2207.2,166.2 L2207.2,173.0 L2199.1,172.9 L2197.6,176.6 L2203.4,182.2 L2198.6,187.0 L2193.0,181.2 L2189.3,182.7 L2189.4,190.8 L2182.6,190.8 L2182.7,182.7 L2179.0,181.2 L2173.4,187.0 L2168.6,182.2 L2174.4,176.6 L2172.9,172.9 L2164.8,173.0 L2164.8,166.2 L2172.9,166.3 L2174.4,162.6 L2168.6,157.0 L2173.4,152.2 L2179.0,158.0 Z" fill="#8ab0dc" stroke="#4a80c0" stroke-width="2" stroke-linejoin="round"/><circle cx="2186" cy="169.6" r="5" fill="#e8e8e8" stroke="#4a80c0" stroke-width="2"/>
<path d="M2238,151 L2265,151 L2266,160 L2262,160 Q2260,156 2255,156 L2247,156 L2256,170 L2246,184 L2258,184 Q2264,184 2266,178 L2268,178 L2264,189 L2237,189 L2237,187 L2250,170 L2238,153 Z" fill="#a010a8" stroke="#7a0a80" stroke-width="1"/>
<rect x="2298.5" y="150.5" width="39" height="39" fill="#e6e6e6" stroke="#6896c8" stroke-width="1.8"/><rect x="2299.5" y="151.5" width="37" height="8" fill="#b8d8f0"/><path d="M2303,155.5 L2310,155.5 M2314,155.5 L2333,155.5" stroke="#6896c8" stroke-width="3"/>
<path d="M2303,164 L2309,164 M2313,164 L2333,164" stroke="#6896c8" stroke-width="1.8"/>
<path d="M2303,170 L2309,170 M2313,170 L2333,170" stroke="#6896c8" stroke-width="1.8"/>
<path d="M2303,176 L2309,176 M2313,176 L2333,176" stroke="#6896c8" stroke-width="1.8"/>
<path d="M2303,182 L2309,182 M2313,182 L2333,182" stroke="#6896c8" stroke-width="1.8"/>
<path d="M2353.5,167 L2368.5,167 L2361,175 Z" fill="#5a5a5a"/>
<path d="M2389,159 L2427,159 M2389,155 L2389,163 M2427,155 L2427,163" stroke="#3d5f87" stroke-width="2.6"/><rect x="2386.5" y="170" width="43" height="15.5" fill="#c8c8c8" stroke="#555" stroke-width="1.8"/>
<path d="M2392,170 L2392,180" stroke="#555" stroke-width="1.3"/>
<path d="M2397,170 L2397,177" stroke="#555" stroke-width="1.3"/>
<path d="M2402,170 L2402,180" stroke="#555" stroke-width="1.3"/>
<path d="M2407,170 L2407,177" stroke="#555" stroke-width="1.3"/>
<path d="M2412,170 L2412,180" stroke="#555" stroke-width="1.3"/>
<path d="M2417,170 L2417,177" stroke="#555" stroke-width="1.3"/>
<path d="M2422,170 L2422,180" stroke="#555" stroke-width="1.3"/>
<path d="M2427,170 L2427,177" stroke="#555" stroke-width="1.3"/>
<path d="M2445.5,167 L2460.5,167 L2453,175 Z" fill="#5a5a5a"/>
<path d="M2482,148.5 L2514,148.5 Q2520,148.5 2520,155 L2520,171 Q2520,177 2514,177 L2498,177 L2490,184 L2492,177 L2482,177 Q2476.5,177 2476.5,171 L2476.5,155 Q2476.5,148.5 2482,148.5 Z" fill="#faeb98" stroke="#d4aa10" stroke-width="2"/><circle cx="2486" cy="184" r="7" fill="#88bb80" stroke="#444" stroke-width="2"/>
<path d="M2556.6,150.9 L2556.9,146.2 L2563.1,146.2 L2563.4,150.9 L2567.9,152.8 L2571.5,149.7 L2575.8,154.0 L2572.7,157.6 L2574.6,162.1 L2579.3,162.4 L2579.3,168.6 L2574.6,168.9 L2572.7,173.4 L2575.8,177.0 L2571.5,181.3 L2567.9,178.2 L2563.4,180.1 L2563.1,184.8 L2556.9,184.8 L2556.6,180.1 L2552.1,178.2 L2548.5,181.3 L2544.2,177.0 L2547.3,173.4 L2545.4,168.9 L2540.7,168.6 L2540.7,162.4 L2545.4,162.1 L2547.3,157.6 L2544.2,154.0 L2548.5,149.7 L2552.1,152.8 Z" fill="#f0f0f0" stroke="#d4d4d4" stroke-width="1.6"/><circle cx="2560" cy="165.5" r="11" fill="#e0e2e4" stroke="#cfcfcf" stroke-width="1.5"/><path d="M2556,159 L2565,165.5 L2556,172 Z" fill="#fff"/>
<path d="M2571,173 L2576,192 L2580,187 L2585,194 L2589,192 L2584,185 L2591,184 Z" fill="#fff" stroke="#c8c8c8" stroke-width="1.4"/>
<path d="M2600.5,167 L2615.5,167 L2608,175 Z" fill="#5a5a5a"/>
<rect x="122" y="232" width="2.2" height="2.2" fill="#a9a9a9"/><rect x="122" y="238" width="2.2" height="2.2" fill="#a9a9a9"/><rect x="122" y="244" width="2.2" height="2.2" fill="#a9a9a9"/><rect x="122" y="250" width="2.2" height="2.2" fill="#a9a9a9"/><rect x="122" y="256" width="2.2" height="2.2" fill="#a9a9a9"/><rect x="122" y="262" width="2.2" height="2.2" fill="#a9a9a9"/><rect x="128" y="232" width="2.2" height="2.2" fill="#a9a9a9"/><rect x="128" y="238" width="2.2" height="2.2" fill="#a9a9a9"/><rect x="128" y="244" width="2.2" height="2.2" fill="#a9a9a9"/><rect x="128" y="250" width="2.2" height="2.2" fill="#a9a9a9"/><rect x="128" y="256" width="2.2" height="2.2" fill="#a9a9a9"/><rect x="128" y="262" width="2.2" height="2.2" fill="#a9a9a9"/>
<rect x="616" y="232" width="2.2" height="2.2" fill="#a9a9a9"/><rect x="616" y="238" width="2.2" height="2.2" fill="#a9a9a9"/><rect x="616" y="244" width="2.2" height="2.2" fill="#a9a9a9"/><rect x="616" y="250" width="2.2" height="2.2" fill="#a9a9a9"/><rect x="616" y="256" width="2.2" height="2.2" fill="#a9a9a9"/><rect x="616" y="262" width="2.2" height="2.2" fill="#a9a9a9"/><rect x="622" y="232" width="2.2" height="2.2" fill="#a9a9a9"/><rect x="622" y="238" width="2.2" height="2.2" fill="#a9a9a9"/><rect x="622" y="244" width="2.2" height="2.2" fill="#a9a9a9"/><rect x="622" y="250" width="2.2" height="2.2" fill="#a9a9a9"/><rect x="622" y="256" width="2.2" height="2.2" fill="#a9a9a9"/><rect x="622" y="262" width="2.2" height="2.2" fill="#a9a9a9"/>
<rect x="1464" y="232" width="2.2" height="2.2" fill="#a9a9a9"/><rect x="1464" y="238" width="2.2" height="2.2" fill="#a9a9a9"/><rect x="1464" y="244" width="2.2" height="2.2" fill="#a9a9a9"/><rect x="1464" y="250" width="2.2" height="2.2" fill="#a9a9a9"/><rect x="1464" y="256" width="2.2" height="2.2" fill="#a9a9a9"/><rect x="1464" y="262" width="2.2" height="2.2" fill="#a9a9a9"/><rect x="1470" y="232" width="2.2" height="2.2" fill="#a9a9a9"/><rect x="1470" y="238" width="2.2" height="2.2" fill="#a9a9a9"/><rect x="1470" y="244" width="2.2" height="2.2" fill="#a9a9a9"/><rect x="1470" y="250" width="2.2" height="2.2" fill="#a9a9a9"/><rect x="1470" y="256" width="2.2" height="2.2" fill="#a9a9a9"/><rect x="1470" y="262" width="2.2" height="2.2" fill="#a9a9a9"/>
<rect x="2118" y="232" width="2.2" height="2.2" fill="#a9a9a9"/><rect x="2118" y="238" width="2.2" height="2.2" fill="#a9a9a9"/><rect x="2118" y="244" width="2.2" height="2.2" fill="#a9a9a9"/><rect x="2118" y="250" width="2.2" height="2.2" fill="#a9a9a9"/><rect x="2118" y="256" width="2.2" height="2.2" fill="#a9a9a9"/><rect x="2118" y="262" width="2.2" height="2.2" fill="#a9a9a9"/><rect x="2124" y="232" width="2.2" height="2.2" fill="#a9a9a9"/><rect x="2124" y="238" width="2.2" height="2.2" fill="#a9a9a9"/><rect x="2124" y="244" width="2.2" height="2.2" fill="#a9a9a9"/><rect x="2124" y="250" width="2.2" height="2.2" fill="#a9a9a9"/><rect x="2124" y="256" width="2.2" height="2.2" fill="#a9a9a9"/><rect x="2124" y="262" width="2.2" height="2.2" fill="#a9a9a9"/>
<rect x="2298" y="232" width="2.2" height="2.2" fill="#a9a9a9"/><rect x="2298" y="238" width="2.2" height="2.2" fill="#a9a9a9"/><rect x="2298" y="244" width="2.2" height="2.2" fill="#a9a9a9"/><rect x="2298" y="250" width="2.2" height="2.2" fill="#a9a9a9"/><rect x="2298" y="256" width="2.2" height="2.2" fill="#a9a9a9"/><rect x="2298" y="262" width="2.2" height="2.2" fill="#a9a9a9"/><rect x="2304" y="232" width="2.2" height="2.2" fill="#a9a9a9"/><rect x="2304" y="238" width="2.2" height="2.2" fill="#a9a9a9"/><rect x="2304" y="244" width="2.2" height="2.2" fill="#a9a9a9"/><rect x="2304" y="250" width="2.2" height="2.2" fill="#a9a9a9"/><rect x="2304" y="256" width="2.2" height="2.2" fill="#a9a9a9"/><rect x="2304" y="262" width="2.2" height="2.2" fill="#a9a9a9"/>
<rect x="2396" y="232" width="2.2" height="2.2" fill="#a9a9a9"/><rect x="2396" y="238" width="2.2" height="2.2" fill="#a9a9a9"/><rect x="2396" y="244" width="2.2" height="2.2" fill="#a9a9a9"/><rect x="2396" y="250" width="2.2" height="2.2" fill="#a9a9a9"/><rect x="2396" y="256" width="2.2" height="2.2" fill="#a9a9a9"/><rect x="2396" y="262" width="2.2" height="2.2" fill="#a9a9a9"/><rect x="2402" y="232" width="2.2" height="2.2" fill="#a9a9a9"/><rect x="2402" y="238" width="2.2" height="2.2" fill="#a9a9a9"/><rect x="2402" y="244" width="2.2" height="2.2" fill="#a9a9a9"/><rect x="2402" y="250" width="2.2" height="2.2" fill="#a9a9a9"/><rect x="2402" y="256" width="2.2" height="2.2" fill="#a9a9a9"/><rect x="2402" y="262" width="2.2" height="2.2" fill="#a9a9a9"/>
<rect x="2494" y="232" width="2.2" height="2.2" fill="#a9a9a9"/><rect x="2494" y="238" width="2.2" height="2.2" fill="#a9a9a9"/><rect x="2494" y="244" width="2.2" height="2.2" fill="#a9a9a9"/><rect x="2494" y="250" width="2.2" height="2.2" fill="#a9a9a9"/><rect x="2494" y="256" width="2.2" height="2.2" fill="#a9a9a9"/><rect x="2494" y="262" width="2.2" height="2.2" fill="#a9a9a9"/><rect x="2500" y="232" width="2.2" height="2.2" fill="#a9a9a9"/><rect x="2500" y="238" width="2.2" height="2.2" fill="#a9a9a9"/><rect x="2500" y="244" width="2.2" height="2.2" fill="#a9a9a9"/><rect x="2500" y="250" width="2.2" height="2.2" fill="#a9a9a9"/><rect x="2500" y="256" width="2.2" height="2.2" fill="#a9a9a9"/><rect x="2500" y="262" width="2.2" height="2.2" fill="#a9a9a9"/>
<path d="M146,245 L166,237 L177,263 L156,271 Z" fill="#d8682f" stroke="#8a3a18" stroke-width="1.4"/>
<path d="M153,232 L175,230 L177,258 L155,260 Z" fill="#f0c420" stroke="#8a7010" stroke-width="1.4"/>
<path d="M167,225 L194,231 L188,258 L161,252 Z" fill="#6896c8" stroke="#2d4a6e" stroke-width="1.5"/>
<rect x="176" y="254" width="18.5" height="18.5" rx="4" fill="#5a9a5a"/><rect x="183.25" y="257" width="4" height="12.5" fill="#fff"/><rect x="179" y="261.25" width="12.5" height="4" fill="#fff"/>
<circle cx="236" cy="239" r="16" fill="#8ab0d8" stroke="#3d5f87" stroke-width="1.2"/><path d="M226,234 Q230,228 236,231 Q240,236 234,240 Q228,242 226,234 Z M240,232 Q246,230 248,236 Q244,240 240,236 Z M236,244 Q242,244 240,252 Q236,250 236,244 Z" fill="#2d4a6e"/>
<path d="M213,243 L237,256 L260,244 L260,259 L237,272 L213,258 Z" fill="#d4a800" stroke="#111" stroke-width="1.6" stroke-linejoin="round"/><path d="M237,256 L260,244 L260,259 L237,272 Z" fill="#fef07a" stroke="#111" stroke-width="1.6" stroke-linejoin="round"/><path d="M213,243 L222,238 M250,238 L260,244" stroke="#111" stroke-width="1.6"/>
<rect x="242" y="254" width="18" height="18" rx="4" fill="#c9a20a"/><ellipse cx="251.0" cy="258.68" rx="1.53" ry="3.06" fill="#fff" transform="rotate(0 251.0 263.0)"/><ellipse cx="251.0" cy="258.68" rx="1.53" ry="3.06" fill="#fff" transform="rotate(45 251.0 263.0)"/><ellipse cx="251.0" cy="258.68" rx="1.53" ry="3.06" fill="#fff" transform="rotate(90 251.0 263.0)"/><ellipse cx="251.0" cy="258.68" rx="1.53" ry="3.06" fill="#fff" transform="rotate(135 251.0 263.0)"/><ellipse cx="251.0" cy="258.68" rx="1.53" ry="3.06" fill="#fff" transform="rotate(180 251.0 263.0)"/><ellipse cx="251.0" cy="258.68" rx="1.53" ry="3.06" fill="#fff" transform="rotate(225 251.0 263.0)"/><ellipse cx="251.0" cy="258.68" rx="1.53" ry="3.06" fill="#fff" transform="rotate(270 251.0 263.0)"/><ellipse cx="251.0" cy="258.68" rx="1.53" ry="3.06" fill="#fff" transform="rotate(315 251.0 263.0)"/><circle cx="251.0" cy="263.0" r="1.62" fill="#c9a20a"/>
<path d="M283,229 L295.5,258 L309.5,229 L321.5,229" fill="none" stroke="#2d3e50" stroke-width="2.4"/>
<circle cx="283" cy="229" r="3.2" fill="#fff" stroke="#2d3e50" stroke-width="1.8"/>
<circle cx="295.5" cy="258" r="3.2" fill="#fff" stroke="#2d3e50" stroke-width="1.8"/>
<circle cx="309.5" cy="229" r="3.2" fill="#fff" stroke="#2d3e50" stroke-width="1.8"/>
<circle cx="321.5" cy="229" r="3.2" fill="#fff" stroke="#2d3e50" stroke-width="1.8"/>
<rect x="308" y="254" width="18" height="18" rx="4" fill="#c9a20a"/><ellipse cx="317.0" cy="258.68" rx="1.53" ry="3.06" fill="#fff" transform="rotate(0 317.0 263.0)"/><ellipse cx="317.0" cy="258.68" rx="1.53" ry="3.06" fill="#fff" transform="rotate(45 317.0 263.0)"/><ellipse cx="317.0" cy="258.68" rx="1.53" ry="3.06" fill="#fff" transform="rotate(90 317.0 263.0)"/><ellipse cx="317.0" cy="258.68" rx="1.53" ry="3.06" fill="#fff" transform="rotate(135 317.0 263.0)"/><ellipse cx="317.0" cy="258.68" rx="1.53" ry="3.06" fill="#fff" transform="rotate(180 317.0 263.0)"/><ellipse cx="317.0" cy="258.68" rx="1.53" ry="3.06" fill="#fff" transform="rotate(225 317.0 263.0)"/><ellipse cx="317.0" cy="258.68" rx="1.53" ry="3.06" fill="#fff" transform="rotate(270 317.0 263.0)"/><ellipse cx="317.0" cy="258.68" rx="1.53" ry="3.06" fill="#fff" transform="rotate(315 317.0 263.0)"/><circle cx="317.0" cy="263.0" r="1.62" fill="#c9a20a"/>
<path d="M344,271 Q352,248 366,238 Q378,228 389,224 Q388,240 380,250 Q368,262 350,262 Z" fill="#8ab0d8" stroke="#2d4a6e" stroke-width="1.4"/><path d="M346,268 Q362,246 386,227" fill="none" stroke="#2d4a6e" stroke-width="1.2"/>
<rect x="374" y="254" width="18" height="18" rx="4" fill="#c9a20a"/><ellipse cx="383.0" cy="258.68" rx="1.53" ry="3.06" fill="#fff" transform="rotate(0 383.0 263.0)"/><ellipse cx="383.0" cy="258.68" rx="1.53" ry="3.06" fill="#fff" transform="rotate(45 383.0 263.0)"/><ellipse cx="383.0" cy="258.68" rx="1.53" ry="3.06" fill="#fff" transform="rotate(90 383.0 263.0)"/><ellipse cx="383.0" cy="258.68" rx="1.53" ry="3.06" fill="#fff" transform="rotate(135 383.0 263.0)"/><ellipse cx="383.0" cy="258.68" rx="1.53" ry="3.06" fill="#fff" transform="rotate(180 383.0 263.0)"/><ellipse cx="383.0" cy="258.68" rx="1.53" ry="3.06" fill="#fff" transform="rotate(225 383.0 263.0)"/><ellipse cx="383.0" cy="258.68" rx="1.53" ry="3.06" fill="#fff" transform="rotate(270 383.0 263.0)"/><ellipse cx="383.0" cy="258.68" rx="1.53" ry="3.06" fill="#fff" transform="rotate(315 383.0 263.0)"/><circle cx="383.0" cy="263.0" r="1.62" fill="#c9a20a"/>
<rect x="417" y="236.5" width="36" height="21" rx="2.5" fill="#6896c8" stroke="#2d4a6e" stroke-width="1.6"/>
<path d="M422,229 L422,236 M422,258 L422,263" stroke="#2d4a6e" stroke-width="1.6"/>
<path d="M428,229 L428,236 M428,258 L428,263" stroke="#2d4a6e" stroke-width="1.6"/>
<path d="M435,229 L435,236 M435,258 L435,263" stroke="#2d4a6e" stroke-width="1.6"/>
<path d="M441,229 L441,236 M441,258 L441,263" stroke="#2d4a6e" stroke-width="1.6"/>
<path d="M447,229 L447,236 M447,258 L447,263" stroke="#2d4a6e" stroke-width="1.6"/>
<rect x="440" y="254" width="18" height="18" rx="4" fill="#c9a20a"/><ellipse cx="449.0" cy="258.68" rx="1.53" ry="3.06" fill="#fff" transform="rotate(0 449.0 263.0)"/><ellipse cx="449.0" cy="258.68" rx="1.53" ry="3.06" fill="#fff" transform="rotate(45 449.0 263.0)"/><ellipse cx="449.0" cy="258.68" rx="1.53" ry="3.06" fill="#fff" transform="rotate(90 449.0 263.0)"/><ellipse cx="449.0" cy="258.68" rx="1.53" ry="3.06" fill="#fff" transform="rotate(135 449.0 263.0)"/><ellipse cx="449.0" cy="258.68" rx="1.53" ry="3.06" fill="#fff" transform="rotate(180 449.0 263.0)"/><ellipse cx="449.0" cy="258.68" rx="1.53" ry="3.06" fill="#fff" transform="rotate(225 449.0 263.0)"/><ellipse cx="449.0" cy="258.68" rx="1.53" ry="3.06" fill="#fff" transform="rotate(270 449.0 263.0)"/><ellipse cx="449.0" cy="258.68" rx="1.53" ry="3.06" fill="#fff" transform="rotate(315 449.0 263.0)"/><circle cx="449.0" cy="263.0" r="1.62" fill="#c9a20a"/>
<rect x="478.5" y="226.5" width="43" height="43" fill="#6896c8" stroke="#2d4a6e" stroke-width="2"/><path d="M478.5,253 L521.5,253 M500,226.5 L500,269.5 M478.5,226.5 L500,253 M500,226.5 L478.5,253 M521.5,226.5 L500,253 M489,253 L489,269.5" stroke="#2d4a6e" stroke-width="1.8"/><path d="M481,229 L498,229 L489.5,240 Z M502,229 L519,229 L502,250 Z" fill="#a8c8ec" opacity="0.8"/>
<rect x="506" y="254" width="18" height="18" rx="4" fill="#c9a20a"/><ellipse cx="515.0" cy="258.68" rx="1.53" ry="3.06" fill="#fff" transform="rotate(0 515.0 263.0)"/><ellipse cx="515.0" cy="258.68" rx="1.53" ry="3.06" fill="#fff" transform="rotate(45 515.0 263.0)"/><ellipse cx="515.0" cy="258.68" rx="1.53" ry="3.06" fill="#fff" transform="rotate(90 515.0 263.0)"/><ellipse cx="515.0" cy="258.68" rx="1.53" ry="3.06" fill="#fff" transform="rotate(135 515.0 263.0)"/><ellipse cx="515.0" cy="258.68" rx="1.53" ry="3.06" fill="#fff" transform="rotate(180 515.0 263.0)"/><ellipse cx="515.0" cy="258.68" rx="1.53" ry="3.06" fill="#fff" transform="rotate(225 515.0 263.0)"/><ellipse cx="515.0" cy="258.68" rx="1.53" ry="3.06" fill="#fff" transform="rotate(270 515.0 263.0)"/><ellipse cx="515.0" cy="258.68" rx="1.53" ry="3.06" fill="#fff" transform="rotate(315 515.0 263.0)"/><circle cx="515.0" cy="263.0" r="1.62" fill="#c9a20a"/>
<rect x="544.5" y="226.5" width="43.5" height="43" rx="3" fill="#b8cce4" stroke="#2d4a6e" stroke-width="1.8"/><path d="M547,229 L585,229 L585,250 L547,268 Z" fill="#dde6f0" opacity="0.8"/><path d="M547,229 L559,261 L573,229 L585,231" fill="none" stroke="#2d4a6e" stroke-width="2.4"/>
<circle cx="547" cy="229" r="3.5" fill="#fff" stroke="#2d4a6e" stroke-width="2"/>
<circle cx="559" cy="261" r="3.5" fill="#fff" stroke="#2d4a6e" stroke-width="2"/>
<circle cx="573" cy="229" r="3.5" fill="#fff" stroke="#2d4a6e" stroke-width="2"/>
<rect x="572" y="254" width="18" height="18" rx="4" fill="#c9a20a"/><ellipse cx="581.0" cy="258.68" rx="1.53" ry="3.06" fill="#fff" transform="rotate(0 581.0 263.0)"/><ellipse cx="581.0" cy="258.68" rx="1.53" ry="3.06" fill="#fff" transform="rotate(45 581.0 263.0)"/><ellipse cx="581.0" cy="258.68" rx="1.53" ry="3.06" fill="#fff" transform="rotate(90 581.0 263.0)"/><ellipse cx="581.0" cy="258.68" rx="1.53" ry="3.06" fill="#fff" transform="rotate(135 581.0 263.0)"/><ellipse cx="581.0" cy="258.68" rx="1.53" ry="3.06" fill="#fff" transform="rotate(180 581.0 263.0)"/><ellipse cx="581.0" cy="258.68" rx="1.53" ry="3.06" fill="#fff" transform="rotate(225 581.0 263.0)"/><ellipse cx="581.0" cy="258.68" rx="1.53" ry="3.06" fill="#fff" transform="rotate(270 581.0 263.0)"/><ellipse cx="581.0" cy="258.68" rx="1.53" ry="3.06" fill="#fff" transform="rotate(315 581.0 263.0)"/><circle cx="581.0" cy="263.0" r="1.62" fill="#c9a20a"/>
<path d="M655.0424211204734,262.0771329207446 L676.2225428922484,228.67771012679165 L667.7774571077516,223.32228987320835 L646.5973353359766,256.7217126671612 Z" fill="#e4e0dc" stroke="#d8d4d0" stroke-width="1.3"/><path d="M646,267 L655.0424211204734,262.0771329207446 L646.5973353359766,256.7217126671612 Z" fill="#ecebea" stroke="#d8d4d0" stroke-width="1.2"/><path d="M646,267 L649.084516088362,265.403672809028 L646.1287360637881,263.5292757202739 Z" fill="#ccc"/><path d="M676.2225428922484,228.67771012679165 L667.7774571077516,223.32228987320835 L665.6352890063183,226.70032418700706 L674.0803747908151,232.05574444059036 Z" fill="#f4f4f4" stroke="#d8d4d0" stroke-width="1"/>
<path d="M665.0424211204734,266.0771329207446 L686.2225428922484,232.67771012679165 L677.7774571077516,227.32228987320835 L656.5973353359766,260.7217126671612 Z" fill="#e4e0dc" stroke="#d8d4d0" stroke-width="1.3"/><path d="M656,271 L665.0424211204734,266.0771329207446 L656.5973353359766,260.7217126671612 Z" fill="#ecebea" stroke="#d8d4d0" stroke-width="1.2"/><path d="M656,271 L659.084516088362,269.403672809028 L656.1287360637881,267.5292757202739 Z" fill="#ccc"/><path d="M686.2225428922484,232.67771012679165 L677.7774571077516,227.32228987320835 L675.6352890063183,230.70032418700706 L684.0803747908151,236.05574444059036 Z" fill="#f4f4f4" stroke="#d8d4d0" stroke-width="1"/>
<path d="M678.5,266 L693.5,266 L686,274 Z" fill="#5a5a5a"/>
<path d="M724.1044630091154,266.19284353118707 L749.1880529841931,227.73133890273462 L740.8119470158069,222.26866109726538 L715.7283570407293,260.7301657257179 Z" fill="#f0d030" stroke="#6a5a10" stroke-width="1.3"/><path d="M715,271 L724.1044630091154,266.19284353118707 L715.7283570407293,260.7301657257179 Z" fill="#e8e8e8" stroke="#6a5a10" stroke-width="1.2"/><path d="M715,271 L718.1046218861084,269.44313682544123 L715.1729847971733,267.53119959352705 Z" fill="#444"/><path d="M749.1880529841931,227.73133890273462 L740.8119470158069,222.26866109726538 L738.6268758936193,225.61910348461984 L747.0029818620054,231.08178129008908 Z" fill="#f4f4f4" stroke="#6a5a10" stroke-width="1"/>
<rect x="774.5" y="226.5" width="39" height="39" rx="4" fill="#e0e2e4" stroke="#d4d6d8" stroke-width="1.6"/><rect x="781" y="229" width="26" height="14" fill="#f4f4f4"/><rect x="782" y="252" width="22" height="12" fill="#f2f2f2"/>
<path d="M808.6573925627827,265.4277873323181 L819.4073998501439,245.3611070625771 L810.5926001498561,240.6388929374229 L799.8425928624949,260.70557320716387 Z" fill="#e4e0dc" stroke="#d8d4d0" stroke-width="1.3"/><path d="M800,271 L808.6573925627827,265.4277873323181 L799.8425928624949,260.70557320716387 Z" fill="#ecebea" stroke="#d8d4d0" stroke-width="1.2"/><path d="M800,271 L802.9592541850966,269.1819475618156 L799.8740742899959,267.52917261801167 Z" fill="#ccc"/><path d="M819.4073998501439,245.3611070625771 L810.5926001498561,240.6388929374229 L808.7037144997945,244.16481281753804 L817.5185142000822,248.88702694269224 Z" fill="#f4f4f4" stroke="#d8d4d0" stroke-width="1"/>
<path d="M843,229 L856,254 L868,233 L880,233" fill="none" stroke="#d8dada" stroke-width="2.2"/>
<rect x="839.5" y="225.5" width="7" height="7" fill="#fff" stroke="#d8dada" stroke-width="1.6"/>
<rect x="852.5" y="250.5" width="7" height="7" fill="#fff" stroke="#d8dada" stroke-width="1.6"/>
<rect x="864.5" y="229.5" width="7" height="7" fill="#fff" stroke="#d8dada" stroke-width="1.6"/>
<rect x="876.5" y="229.5" width="7" height="7" fill="#fff" stroke="#d8dada" stroke-width="1.6"/>
<rect x="865" y="250" width="21" height="22" rx="4" fill="#d6d4ce"/><circle cx="875.5" cy="261" r="4.5" fill="#fff"/>
<rect x="914" y="230" width="12" height="12" fill="none" stroke="#d4d4d4" stroke-width="2"/><path d="M914,230 L926,242 M926,230 L914,242 M926,236 L946,236 M918,243 L909,267" stroke="#d4d4d4" stroke-width="1.8"/><path d="M925,266 L945,246 M930,245 L945,260" stroke="#dcd8d0" stroke-width="5" stroke-linecap="round"/>
<path d="M964.5,245 L979.5,245 L972,253 Z" fill="#5a5a5a"/>
<rect x="998" y="228" width="40" height="10" fill="#e8e6e0" stroke="#dcdad2" stroke-width="1.4"/><rect x="998" y="242" width="40" height="10" fill="#e8e6e0" stroke="#dcdad2" stroke-width="1.4"/><rect x="998" y="256" width="40" height="10" fill="#e8e6e0" stroke="#dcdad2" stroke-width="1.4"/>
<path d="M1020.1776356586283,265.3340591819578 L1044.1453606441285,229.79570834138892 L1035.8546393558715,224.20429165861108 L1011.8869143703716,259.74264249918 Z" fill="#e8e4e0" stroke="#d4d0cc" stroke-width="1.3"/><path d="M1011,270 L1020.1776356586283,265.3340591819578 L1011.8869143703716,259.74264249918 Z" fill="#f0f0f0" stroke="#d4d0cc" stroke-width="1.2"/><path d="M1011,270 L1014.1283012302783,268.4912815330091 L1011.2265487793884,266.53428569403684 Z" fill="#ccc"/><path d="M1044.1453606441285,229.79570834138892 L1035.8546393558715,224.20429165861108 L1033.6180726827604,227.5205801739138 L1041.9087939710173,233.11199685669163 Z" fill="#f4f4f4" stroke="#d4d0cc" stroke-width="1"/>
<rect x="1064" y="228" width="28" height="27" fill="#ecebe4" stroke="#dedcd4" stroke-width="1.4"/><rect x="1068" y="233" width="31" height="4" rx="2" fill="#d8cccc"/><path d="M1069,240 L1099,240 L1097,269 L1071,269 Z" fill="#ece4e4" stroke="#d8cccc" stroke-width="2"/><path d="M1078,243 L1078,266 M1088,243 L1088,266" stroke="#d8cccc" stroke-width="2"/>
<path d="M1129,233 L1160,251 M1129,246 L1160,246" stroke="#d8d8d8" stroke-width="3" stroke-linecap="round"/><ellipse cx="1165" cy="240" rx="6" ry="4" fill="none" stroke="#d4c8c8" stroke-width="2.2" transform="rotate(-30 1165 240)"/><ellipse cx="1165" cy="259" rx="6" ry="4" fill="none" stroke="#d4c8c8" stroke-width="2.2" transform="rotate(40 1165 259)"/>
<path d="M1209,228 L1224,228 L1231,235 L1231,259 L1209,259 Z" fill="#f0f0f0" stroke="#e0e0e0" stroke-width="1.5"/><path d="M1200,236 L1215,236 L1222,243 L1222,267 L1200,267 Z" fill="#f6f6f6" stroke="#cfcfcf" stroke-width="1.8"/><path d="M1204,251 L1218,251 M1204,255 L1218,255 M1204,259 L1218,259 M1204,263 L1218,263" stroke="#d8d8d8" stroke-width="1.4"/>
<rect x="1266" y="228" width="32" height="39" fill="#f0eeee" stroke="#dad6d6" stroke-width="1.8"/><rect x="1273" y="226" width="18" height="8" fill="#ececec" stroke="#d8d8d8" stroke-width="1.4"/><path d="M1269,236 L1284,236 L1291,243 L1291,264 L1269,264 Z" fill="#f8f8f8" stroke="#cfcfcf" stroke-width="1.5"/><path d="M1273,247 L1287,247 M1273,251 L1287,251 M1273,255 L1287,255 M1273,259 L1287,259" stroke="#d8d8d8" stroke-width="1.3"/>
<path d="M1330,246 L1344,230 L1344,239 Q1366,238 1366,254 Q1366,266 1352,266 L1348,266 Q1358,262 1356,254 Q1354,250 1344,251 L1344,262 Z" fill="#e2dcd8" stroke="#dad4d0" stroke-width="1.2"/>
<path d="M1432,246 L1418,230 L1418,239 Q1396,238 1396,254 Q1396,266 1410,266 L1414,266 Q1404,262 1406,254 Q1408,250 1418,251 L1418,262 Z" fill="#e2e4e2" stroke="#dadcda" stroke-width="1.2"/>
<path d="M1499,232.5 L1530,232.5 L1530,253.0 L1499,253.0 L1489,242.75 Z" fill="#fde860" stroke="#c9a20a" stroke-width="2.2" stroke-linejoin="miter"/><text x="1498" y="248.5" font-family="Liberation Sans" font-weight="bold" font-size="17.5" fill="#222">abc</text>
<circle cx="1572" cy="242" r="13.3" fill="#10b050" stroke="#104020" stroke-width="1.6"/><path d="M1572,242 L1560.5,235.3 A13.3,13.3 0 0,1 1583.5,235.3 Z" fill="#f8d800" stroke="#104020" stroke-width="1"/><path d="M1572,242 L1583.5,235.3 A13.3,13.3 0 0,1 1572,255.3 Z" fill="#c01010" stroke="#104020" stroke-width="1"/>
<rect x="1574" y="256" width="7" height="13.5" fill="#f8d800" stroke="#e0a000" stroke-width="1.2"/><rect x="1582" y="244.5" width="7" height="25" fill="#10b050" stroke="#104020" stroke-width="1.4"/><rect x="1590" y="258" width="7.5" height="11.5" fill="#c01010" stroke="#500" stroke-width="1.2"/>
<rect x="1617" y="229" width="2" height="37" fill="#cfcfcf"/><rect x="1763" y="229" width="2" height="37" fill="#cfcfcf"/>
<path d="M1645,232.5 L1675,232.5 L1675,253.0 L1645,253.0 L1635,242.75 Z" fill="#d8e8fa" stroke="#5a9ae0" stroke-width="2.2" stroke-linejoin="miter"/><text x="1644" y="248.5" font-family="Liberation Sans" font-weight="bold" font-size="17.5" fill="#222">ab</text>
<path d="M1666,250 L1669,243 Q1671,241 1673,243 L1674,252" fill="#f0f0f0" stroke="#555" stroke-width="1.2"/><circle cx="1671.5" cy="259.5" r="9" fill="#a02020"/><circle cx="1669" cy="256" r="3" fill="#e07070"/>
<path d="M1711,232.5 L1742,232.5 L1742,253.0 L1711,253.0 L1701,242.75 Z" fill="#fbd8d8" stroke="#f01010" stroke-width="2.4" stroke-linejoin="miter"/><text x="1710" y="248.5" font-family="Liberation Sans" font-weight="bold" font-size="17.5" fill="#f01010">abc</text>
<path d="M1791,232.5 L1822,232.5 L1822,253.0 L1791,253.0 L1781,242.75 Z" fill="#ecebe4" stroke="#dcdad0" stroke-width="2" stroke-linejoin="miter"/><text x="1790" y="248.5" font-family="Liberation Sans" font-weight="bold" font-size="17.5" fill="#cfcfcf">ab</text>
<circle cx="1817.5" cy="259.5" r="9" fill="#d0c8c8"/><circle cx="1815" cy="256" r="3" fill="#e4dede"/><path d="M1814,249 L1815,241 L1819,241 L1820,251" fill="#f2f2f2" stroke="#ddd" stroke-width="1"/>
<path d="M1857,232.5 L1888,232.5 L1888,253.0 L1857,253.0 L1847,242.75 Z" fill="#ecebe4" stroke="#dcdad0" stroke-width="2" stroke-linejoin="miter"/><text x="1856" y="248.5" font-family="Liberation Sans" font-weight="bold" font-size="17.5" fill="#cfcfcf">abc</text>
<path d="M1863,262 Q1878,248 1894,262 Q1878,274 1863,262 Z" fill="#fff" stroke="#c8c8c8" stroke-width="1.4"/><circle cx="1877" cy="261.5" r="5" fill="#d8dce4"/><circle cx="1877" cy="261.5" r="2.2" fill="#b4b4b4"/>
<path d="M1923,232.5 L1954,232.5 L1954,253.0 L1923,253.0 L1913,242.75 Z" fill="#ecebe4" stroke="#dcdad0" stroke-width="2" stroke-linejoin="miter"/><text x="1922" y="248.5" font-family="Liberation Sans" font-weight="bold" font-size="17.5" fill="#cfcfcf">abc</text>
<rect x="1938" y="250" width="22" height="22" rx="3" fill="#c8cacc"/><path d="M1942,258 L1950,258 L1950,253 L1957,261 L1950,269 L1950,264 L1942,264 Z" fill="#fff"/>
<path d="M1989,232.5 L2020,232.5 L2020,253.0 L1989,253.0 L1979,242.75 Z" fill="#ecebe4" stroke="#dcdad0" stroke-width="2" stroke-linejoin="miter"/><text x="1988" y="248.5" font-family="Liberation Sans" font-weight="bold" font-size="17.5" fill="#cfcfcf">abc</text>
<rect x="2004" y="250" width="22" height="22" rx="3" fill="#c8cacc"/><path d="M2010,261 A5,5 0 1,1 2017,266" fill="none" stroke="#fff" stroke-width="3"/>
<path d="M2055,232.5 L2086,232.5 L2086,253.0 L2055,253.0 L2045,242.75 Z" fill="#ecebe4" stroke="#dcdad0" stroke-width="2" stroke-linejoin="miter"/><text x="2054" y="248.5" font-family="Liberation Sans" font-weight="bold" font-size="17.5" fill="#cfcfcf">abc</text>
<rect x="2070" y="250" width="22" height="22" rx="3" fill="#d4d2c8"/><path d="M2074,268 L2088,254" stroke="#fff" stroke-width="3"/>
<defs><radialGradient id="gl" cx="0.5" cy="0.5" r="0.6"><stop offset="0" stop-color="#3a8ae0"/><stop offset="0.6" stop-color="#8ab8ec"/><stop offset="1" stop-color="#2a5aa0"/></radialGradient><linearGradient id="gs" x1="0" x2="1"><stop offset="0" stop-color="#333"/><stop offset="0.5" stop-color="#f0f0f0"/><stop offset="1" stop-color="#333"/></linearGradient></defs>
<ellipse cx="2166" cy="244.5" rx="23.5" ry="20.5" fill="url(#gs)" stroke="#2a6ac0" stroke-width="2"/><ellipse cx="2166" cy="244.5" rx="10" ry="20.5" fill="url(#gl)" stroke="#4a8ad0" stroke-width="1.5"/><path d="M2143,244.5 L2189,244.5 M2147,233 L2185,233 M2147,256 L2185,256" stroke="#4a8ad0" stroke-width="1.6"/>
<rect x="2172" y="254" width="18.5" height="18.5" rx="4" fill="#4a8a4a"/><rect x="2179.25" y="257" width="4" height="12.5" fill="#fff"/><rect x="2175" y="261.25" width="12.5" height="4" fill="#fff"/>
<path d="M2184,268 L2192,268 L2188,273 Z" fill="#222"/>
<path d="M2264,243 L2270,248 L2264,253 M2273,243 L2279,248 L2273,253" fill="none" stroke="#333" stroke-width="2.2"/>
<g transform="translate(2346,248) scale(1.0)"><path d="M-1,-20 Q-11,-20 -11,-14 L-11,-9 L1,-9 L1,-7 L-14,-7 Q-20,-7 -20,1 Q-20,10 -14,10 L-10,10 L-10,4 Q-10,-1 -4,-1 L7,-1 Q11,-1 11,-5 L11,-14 Q11,-20 3,-20 Z" fill="#3c78b0"/><path d="M1,20 Q11,20 11,14 L11,9 L-1,9 L-1,7 L14,7 Q20,7 20,-1 Q20,-10 14,-10 L10,-10 L10,-4 Q10,1 4,1 L-7,1 Q-11,1 -11,5 L-11,14 Q-11,20 -3,20 Z" fill="#fcd03c"/><circle cx="-5.5" cy="-15" r="2" fill="#fff"/><circle cx="5.5" cy="15" r="2" fill="#fff"/></g>
<path d="M2356,258 L2367,263 L2356,268" fill="none" stroke="#333" stroke-width="2.2"/>
<rect x="2424.5" y="226.5" width="39" height="41.5" fill="#6896c8" stroke="#1a1a1a" stroke-width="2"/><rect x="2425" y="227" width="10" height="40.5" fill="#2d3e50"/><text x="2441" y="258" font-family="Liberation Serif" font-size="26" fill="#fff">?</text>
<rect x="2521" y="225" width="41" height="40.5" fill="#fff" stroke="#1a78c8" stroke-width="2"/><rect x="2522" y="226" width="39" height="5" fill="#f8c040"/>
<path d="M2522,234 L2561,234" stroke="#a8c8ec" stroke-width="1.8"/>
<path d="M2522,241 L2561,241" stroke="#a8c8ec" stroke-width="1.8"/>
<path d="M2522,248 L2561,248" stroke="#a8c8ec" stroke-width="1.8"/>
<path d="M2522,255 L2561,255" stroke="#a8c8ec" stroke-width="1.8"/>
<path d="M2530,226 L2530,265" stroke="#a8c8ec" stroke-width="1.8"/>
<path d="M2541,226 L2541,265" stroke="#a8c8ec" stroke-width="1.8"/>
<path d="M2552,226 L2552,265" stroke="#a8c8ec" stroke-width="1.8"/>
<path d="M2536,248 Q2538,236 2552,236 L2552,231 L2562,240 L2552,248 L2552,243 Q2543,243 2540,250 Z" fill="#88c020" stroke="#4a8010" stroke-width="1.2"/><path d="M2566,250 Q2564,262 2550,262 L2550,267 L2540,258 L2550,250 L2550,255 Q2559,255 2562,248 Z" fill="#88c020" stroke="#4a8010" stroke-width="1.2"/>
<rect x="130.5" y="342.5" width="23" height="23" fill="#efefef" stroke="#8a8a8a" stroke-width="1.8"/>
<rect x="146" y="360" width="12" height="12" rx="2.5" fill="#5a9a5a"/><rect x="150.68" y="362.4" width="2.64" height="7.199999999999999" fill="#fff"/><rect x="148.4" y="364.68" width="7.199999999999999" height="2.64" fill="#fff"/>
<g transform="translate(194,356) scale(0.7)"><path d="M-19,-2 Q-18,-20 2,-19 Q12,-18 16,-12 L20,-20 L20,0 L1,-1 L9,-6 Q4,-10 -2,-10 Q-12,-9 -14,2 Z" fill="#4c86c6" stroke="#3a70b0" stroke-width="0.8"/><path d="M19,2 Q18,20 -2,19 Q-12,18 -16,12 L-20,20 L-20,0 L-1,1 L-9,6 Q-4,10 2,10 Q12,9 14,-2 Z" fill="#4c86c6" stroke="#3a70b0" stroke-width="0.8"/><path d="M-15,-4 Q-12,-15 0,-15" fill="none" stroke="#b8d4f0" stroke-width="2.5" opacity="0.8"/></g>
<g transform="translate(231,341.5) scale(1.0)"><path d="M0,0 L26,0 L26,8 L16,18 L16,30 L10,27 L10,18 L0,8 Z" fill="#6a9ad0" stroke="#2d4a6e" stroke-width="1.6" stroke-linejoin="round"/><rect x="1.5" y="1.5" width="23" height="5" fill="#fce650"/></g>
<g transform="translate(280,340.5)"><path d="M1,2 L29,2 M3,2 L3,26 M3,11 L9,11 M3,24 L9,24" stroke="#a8a8a8" stroke-width="2"/><rect x="8" y="7.5" width="6" height="6" fill="#f8d030" stroke="#f08a10" stroke-width="2.4"/><rect x="8" y="20" width="6" height="6" fill="#f8d030" stroke="#f08a10" stroke-width="2.4"/><path d="M20,0 L30,10 L24,10 L24,27 L16,27 L16,10 L10,10 Z" fill="#6896c8" stroke="#2d4a6e" stroke-width="1.6" stroke-linejoin="round"/></g>
<circle cx="343.7" cy="355.7" r="12.8" fill="#6a9ad0" stroke="#3a5a80" stroke-width="1.6"/><text x="338" y="366" font-family="Liberation Serif" font-style="italic" font-weight="bold" font-size="22" fill="#fff">i</text>
<g transform="rotate(20 143 1307)"><rect x="130" y="1296" width="26" height="6" fill="#f0d020"/><rect x="130" y="1302" width="26" height="6" fill="#6896c8"/><rect x="130" y="1308" width="26" height="6" fill="#e82020"/></g>
<path d="M141,1313 L157,1294" stroke="#b87818" stroke-width="4" stroke-linecap="round"/><path d="M136,1306 L146,1300 L152,1312 L141,1318 Z" fill="#d8b070" stroke="#a06a20" stroke-width="1.2"/>
<path d="M181,1320 L181,1308 M181,1320 L194,1320" fill="none" stroke="#8a8a8a" stroke-width="1.8"/><rect x="185" y="1303" width="17" height="14" fill="#eee" stroke="#7a7a7a" stroke-width="1.8"/><path d="M189,1303 L189,1297 L206,1297 L206,1312 L202,1312" fill="none" stroke="#7a7a7a" stroke-width="1.8"/><path d="M193,1313 L193,1293 Q193,1290 196,1290 Q199,1290 199,1293 L199,1311" fill="none" stroke="#2d5a8e" stroke-width="1.8"/>
<rect x="196" y="1309" width="12.5" height="12.5" rx="2.5" fill="#5a9a5a"/><rect x="200.875" y="1311.5" width="2.75" height="7.5" fill="#fff"/><rect x="198.5" y="1313.875" width="7.5" height="2.75" fill="#fff"/>
<path d="M230,1306 Q244,1292 258,1306 Q244,1320 230,1306 Z" fill="#f4f4f4" stroke="#555" stroke-width="1.5"/><path d="M231,1298 Q244,1290 258,1296" fill="none" stroke="#555" stroke-width="1.3"/><circle cx="244" cy="1306" r="7.5" fill="#6896c8" stroke="#3d5f87" stroke-width="1"/><circle cx="244" cy="1305" r="3" fill="#111"/><circle cx="242.5" cy="1303.5" r="1" fill="#fff"/>
<path d="M251.0,1315.5 L266.0,1315.5 L258.5,1323.5 Z" fill="#5a5a5a"/>
<g transform="translate(281,1291.5) scale(1.0)"><path d="M0,0 L26,0 L26,8 L16,18 L16,30 L10,27 L10,18 L0,8 Z" fill="#6a9ad0" stroke="#2d4a6e" stroke-width="1.6" stroke-linejoin="round"/><rect x="1.5" y="1.5" width="23" height="5" fill="#fce650"/></g>
<path d="M300.5,1316 L315.5,1316 L308,1324 Z" fill="#5a5a5a"/>
<path d="M345.7,1297.3 Q342.5,1292.5 338.3,1293.2 Q333.1,1294.4 333.4,1299.7 Q333.7,1304.0 339.0,1304.0 M339.0,1304.0 Q332.3,1304.5 332.4,1310.5 Q332.8,1316.5 339.0,1316.0 Q343.9,1315.5 346.0,1311.2" fill="none" stroke="#5a2a76" stroke-width="2.6" stroke-linecap="round"/>
<path d="M345,1308 L360,1308 L360,1322 L355,1322 L353,1314 L352,1322 L345,1322 Z" fill="#8a8a8a" stroke="#666" stroke-width="1"/>
<path d="M372.5,1303 L387.5,1303 L380,1311 Z" fill="#5a5a5a"/>
<g transform="translate(404,1292)"><path d="M1,2 L29,2 M3,2 L3,26 M3,11 L9,11 M3,24 L9,24" stroke="#a8a8a8" stroke-width="2"/><rect x="8" y="7.5" width="6" height="6" fill="#f8d030" stroke="#f08a10" stroke-width="2.4"/><rect x="8" y="20" width="6" height="6" fill="#f8d030" stroke="#f08a10" stroke-width="2.4"/><path d="M20,27 L30,17 L24,17 L24,0 L16,0 L16,17 L10,17 Z" fill="#6896c8" stroke="#2d4a6e" stroke-width="1.6" stroke-linejoin="round"/></g>
<g transform="translate(454,1291)"><path d="M1,2 L29,2 M3,2 L3,26 M3,11 L9,11 M3,24 L9,24" stroke="#a8a8a8" stroke-width="2"/><rect x="8" y="7.5" width="6" height="6" fill="#f8d030" stroke="#f08a10" stroke-width="2.4"/><rect x="8" y="20" width="6" height="6" fill="#f8d030" stroke="#f08a10" stroke-width="2.4"/><path d="M20,0 L30,10 L24,10 L24,27 L16,27 L16,10 L10,10 Z" fill="#6896c8" stroke="#2d4a6e" stroke-width="1.6" stroke-linejoin="round"/></g>
<rect x="504" y="1292.5" width="23.5" height="23" fill="#efefef" stroke="#8a8a8a" stroke-width="1.8"/><rect x="519.5" y="1310" width="12.5" height="10" rx="3" fill="#e83040"/><rect x="522" y="1314" width="7.5" height="2.4" fill="#fff"/>
<path d="M2566.3,343.1 L2566.5,339.6 L2569.5,339.6 L2569.7,343.1 L2571.7,343.9 L2574.3,341.6 L2576.4,343.7 L2574.1,346.3 L2574.9,348.3 L2578.4,348.5 L2578.4,351.5 L2574.9,351.7 L2574.1,353.7 L2576.4,356.3 L2574.3,358.4 L2571.7,356.1 L2569.7,356.9 L2569.5,360.4 L2566.5,360.4 L2566.3,356.9 L2564.3,356.1 L2561.7,358.4 L2559.6,356.3 L2561.9,353.7 L2561.1,351.7 L2557.6,351.5 L2557.6,348.5 L2561.1,348.3 L2561.9,346.3 L2559.6,343.7 L2561.7,341.6 L2564.3,343.9 Z" fill="#d01010"/><circle cx="2568" cy="350" r="2.6" fill="#f5f5f5"/>
<path d="M2581.8,351.6 L2582.0,349.1 L2584.0,349.1 L2584.2,351.6 L2585.6,352.1 L2587.5,350.5 L2589.0,352.0 L2587.4,353.9 L2587.9,355.3 L2590.4,355.5 L2590.4,357.5 L2587.9,357.7 L2587.4,359.1 L2589.0,361.0 L2587.5,362.5 L2585.6,360.9 L2584.2,361.4 L2584.0,363.9 L2582.0,363.9 L2581.8,361.4 L2580.4,360.9 L2578.5,362.5 L2577.0,361.0 L2578.6,359.1 L2578.1,357.7 L2575.6,357.5 L2575.6,355.5 L2578.1,355.3 L2578.6,353.9 L2577.0,352.0 L2578.5,350.5 L2580.4,352.1 Z" fill="#808080"/><circle cx="2583" cy="356.5" r="1.9" fill="#f5f5f5"/>
<path d="M2572.4,361.7 L2572.6,359.6 L2574.4,359.6 L2574.6,361.7 L2575.8,362.2 L2577.4,360.8 L2578.7,362.1 L2577.3,363.7 L2577.8,364.9 L2579.9,365.1 L2579.9,366.9 L2577.8,367.1 L2577.3,368.3 L2578.7,369.9 L2577.4,371.2 L2575.8,369.8 L2574.6,370.3 L2574.4,372.4 L2572.6,372.4 L2572.4,370.3 L2571.2,369.8 L2569.6,371.2 L2568.3,369.9 L2569.7,368.3 L2569.2,367.1 L2567.1,366.9 L2567.1,365.1 L2569.2,364.9 L2569.7,363.7 L2568.3,362.1 L2569.6,360.8 L2571.2,362.2 Z" fill="#8ab0e0"/><circle cx="2573.5" cy="366" r="1.6" fill="#f5f5f5"/>
<path d="M2580.5,365.5 L2595.5,365.5 L2588,373.5 Z" fill="#5a5a5a"/>
<g transform="translate(2624,355.5) scale(0.66)"><path d="M-1,-20 Q-11,-20 -11,-14 L-11,-9 L1,-9 L1,-7 L-14,-7 Q-20,-7 -20,1 Q-20,10 -14,10 L-10,10 L-10,4 Q-10,-1 -4,-1 L7,-1 Q11,-1 11,-5 L11,-14 Q11,-20 3,-20 Z" fill="#3c78b0"/><path d="M1,20 Q11,20 11,14 L11,9 L-1,9 L-1,7 L14,7 Q20,7 20,-1 Q20,-10 14,-10 L10,-10 L10,-4 Q10,1 4,1 L-7,1 Q-11,1 -11,5 L-11,14 Q-11,20 -3,20 Z" fill="#fcd03c"/><circle cx="-5.5" cy="-15" r="2" fill="#fff"/><circle cx="5.5" cy="15" r="2" fill="#fff"/></g>
<path d="M2630.5,365.5 L2645.5,365.5 L2638,373.5 Z" fill="#5a5a5a"/>
<circle cx="2674" cy="355.6" r="14.3" fill="#f0f1f0" stroke="#777" stroke-width="1.8"/><path d="M2673,345 L2673,356 L2680.5,361" fill="none" stroke="#444" stroke-width="1.4"/>
<path d="M2714,342 L2727,342 L2734.5,349.5 L2734.5,370 L2714,370 Z" fill="#fff" stroke="#8a8a8a" stroke-width="1.6"/><path d="M2717,350 L2725,350 M2717,355 L2731,355 M2717,360 L2731,360 M2717,366 L2729,366" stroke="#666" stroke-width="1.3"/>
<rect x="2755.5" y="345" width="1.6" height="22" fill="#d4d4d4"/><rect x="2819.5" y="345" width="1.6" height="22" fill="#d4d4d4"/>
<rect x="2775" y="343.5" width="18.5" height="17.5" fill="#fce650" stroke="#c9a20a" stroke-width="1.6"/><path d="M2787,370 L2789,362 L2800,347 L2803,349.5 L2792,364 Z" fill="#f0d030" stroke="#6a5a10" stroke-width="1.1"/>
<g transform="translate(2846.5,351.5) rotate(-45) scale(0.95)"><rect x="-3.6" y="2" width="7.2" height="23" rx="3.6" fill="#f0d878" stroke="#2a2a2a" stroke-width="1.8"/><rect x="-3.6" y="2" width="7.2" height="5" fill="#333"/><ellipse cx="0" cy="21.2" rx="2" ry="1.6" fill="#fff" stroke="#333" stroke-width="1.2"/><path d="M-6.5,-9 A8.6,8.6 0 1,0 6.5,-9 L3.6,-9 A3.6,3.6 0 0,1 -3.6,-9 Z" fill="#f2f3f2" stroke="#2a2a2a" stroke-width="1.6" stroke-linejoin="round"/></g>
</svg>

</div></div>
</body></html>
